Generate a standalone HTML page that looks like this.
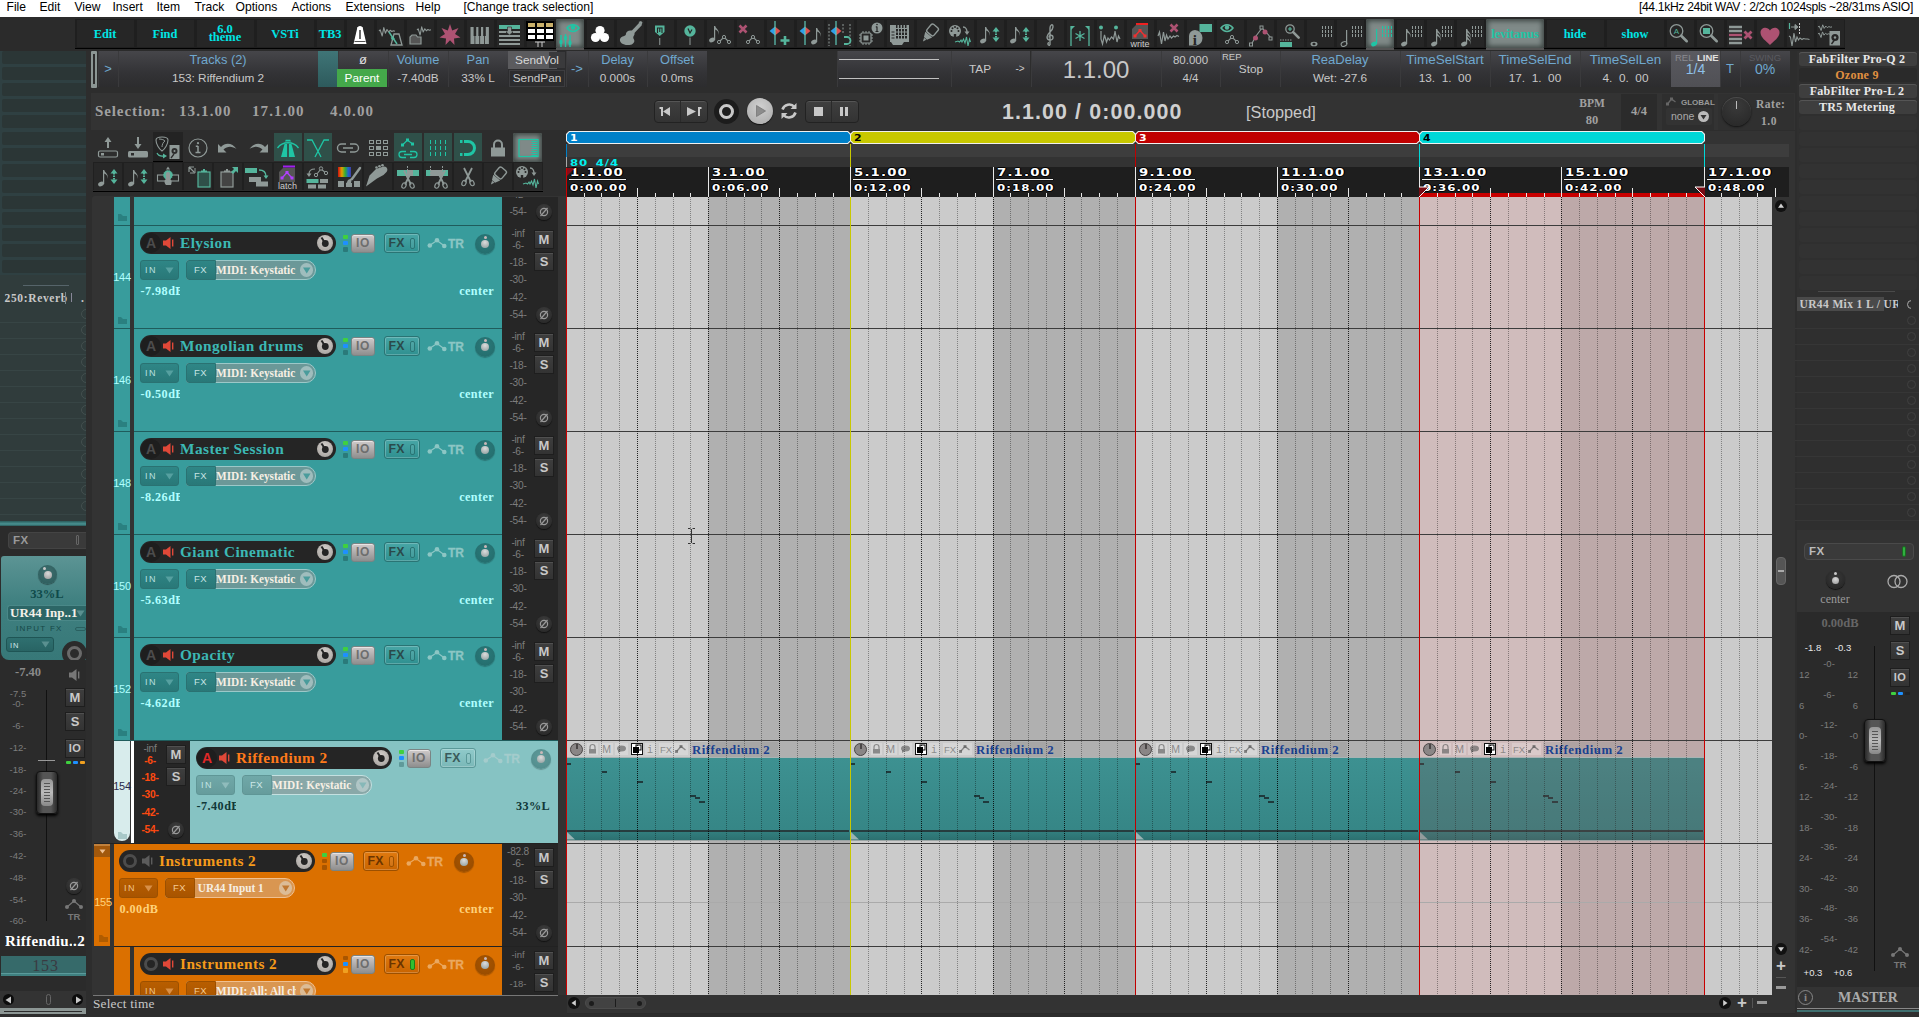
<!DOCTYPE html>
<html lang="en"><head><meta charset="utf-8"><title>REAPER</title><style>
*{margin:0;padding:0;box-sizing:border-box}
html,body{width:1919px;height:1017px;overflow:hidden;background:#2d2d2d}
body{position:relative;font-family:"Liberation Sans",sans-serif}
div,svg{position:absolute}
svg{overflow:visible}
</style></head><body>
<div style="left:0px;top:0px;width:1919px;height:16.6px;background:#ffffff;"></div>
<div style="left:0px;top:16.6px;width:1919px;height:0.8px;background:#c4c4c4;"></div>
<div style="left:6.5px;top:-0.2px;font:normal 12.1px/14px 'Liberation Sans',sans-serif;color:#000;white-space:nowrap;">File</div>
<div style="left:39.5px;top:-0.2px;font:normal 12.1px/14px 'Liberation Sans',sans-serif;color:#000;white-space:nowrap;">Edit</div>
<div style="left:74.5px;top:-0.2px;font:normal 12.1px/14px 'Liberation Sans',sans-serif;color:#000;white-space:nowrap;">View</div>
<div style="left:112.5px;top:-0.2px;font:normal 12.1px/14px 'Liberation Sans',sans-serif;color:#000;white-space:nowrap;">Insert</div>
<div style="left:156.5px;top:-0.2px;font:normal 12.1px/14px 'Liberation Sans',sans-serif;color:#000;white-space:nowrap;">Item</div>
<div style="left:194.5px;top:-0.2px;font:normal 12.1px/14px 'Liberation Sans',sans-serif;color:#000;white-space:nowrap;">Track</div>
<div style="left:235.5px;top:-0.2px;font:normal 12.1px/14px 'Liberation Sans',sans-serif;color:#000;white-space:nowrap;">Options</div>
<div style="left:291.5px;top:-0.2px;font:normal 12.1px/14px 'Liberation Sans',sans-serif;color:#000;white-space:nowrap;">Actions</div>
<div style="left:345.5px;top:-0.2px;font:normal 12.1px/14px 'Liberation Sans',sans-serif;color:#000;white-space:nowrap;">Extensions</div>
<div style="left:415.5px;top:-0.2px;font:normal 12.1px/14px 'Liberation Sans',sans-serif;color:#000;white-space:nowrap;">Help</div>
<div style="left:463.5px;top:-0.2px;font:normal 12.1px/14px 'Liberation Sans',sans-serif;color:#000;white-space:nowrap;">[Change track selection]</div>
<div style="left:400px;top:-0.2px;font:normal 12.1px/14px 'Liberation Sans',sans-serif;color:#000;white-space:nowrap;width:1513px;text-align:right;letter-spacing:-.32px;">[44.1kHz 24bit WAV : 2/2ch 1024spls ~28/31ms ASIO]</div>
<div style="left:0px;top:17.4px;width:1919px;height:33.6px;background:#2b2b2b;"></div>
<div style="left:75px;top:19px;width:1770px;height:29px;background:#1f1f1f;"></div>
<div style="left:75px;top:48px;width:1770px;height:1.3px;background:#000;"></div>
<div style="left:77px;top:20px;width:57px;height:27px;background:#262626;"></div>
<div style="left:75px;top:26px;font:bold 12.4px/16px 'Liberation Serif',serif;color:#00e5e5;white-space:nowrap;width:60px;text-align:center;">Edit</div>
<div style="left:137px;top:20px;width:57px;height:27px;background:#262626;"></div>
<div style="left:135px;top:26px;font:bold 12.4px/16px 'Liberation Serif',serif;color:#00e5e5;white-space:nowrap;width:60px;text-align:center;">Find</div>
<div style="left:197px;top:20px;width:57px;height:27px;background:#262626;"></div>
<div style="left:195px;top:25px;font:bold 12.5px/8px 'Liberation Serif',serif;color:#00e5e5;white-space:nowrap;width:60px;text-align:center;">6.0<br>theme</div>
<div style="left:257px;top:20px;width:57px;height:27px;background:#262626;"></div>
<div style="left:255px;top:26px;font:bold 12.4px/16px 'Liberation Serif',serif;color:#00e5e5;white-space:nowrap;width:60px;text-align:center;">VSTi</div>
<div style="left:317px;top:20px;width:27px;height:27px;background:#262626;"></div>
<div style="left:315px;top:26px;font:bold 12.4px/16px 'Liberation Serif',serif;color:#00e5e5;white-space:nowrap;width:30px;text-align:center;">TB3</div>
<div style="left:347px;top:20px;width:27px;height:27px;background:#262626;"></div>
<svg style="left:345px;top:19px" width="30" height="29" viewBox="0 0 30 29"><path d="M12.500 8h5l4 17h-13z" fill="#ffffff"/><circle cx="15" cy="9.500" r="2.600" fill="#ffffff"/><path d="M15 11v9" stroke="#262626" stroke-width="1.400"/><path d="M9.500 22.500h11" stroke="#262626" stroke-width="0.800"/></svg>
<div style="left:377px;top:20px;width:27px;height:27px;background:#262626;"></div>
<svg style="left:375px;top:19px" width="30" height="29" viewBox="0 0 30 29"><path d="M4.0 12.0 L5.2 10.8 L7.2 17.0 L8.8 8.6 L10.4 14.2 L12.0 10.5 L13.6 13.0 L15.2 11.3 L16.8 12.5 L18.4 11.7 L20.0 12.2" fill="none" stroke="#8f9997" stroke-width="1.1" stroke-linejoin="round"/><path d="M19 15h5l3 11h-11z" fill="none" stroke="#8f9997" stroke-width="1.300"/><path d="M14 13l8 12" stroke="#55b59c" stroke-width="1.500"/><rect x="16" y="18" width="3" height="3" fill="#55b59c" transform="rotate(-30 17 19)"/></svg>
<div style="left:407px;top:20px;width:27px;height:27px;background:#262626;"></div>
<svg style="left:405px;top:19px" width="30" height="29" viewBox="0 0 30 29"><path d="M12.0 11.0 L13.2 9.8 L15.1 16.0 L16.7 7.8 L18.2 13.0 L19.8 9.7 L21.3 11.8 L22.9 10.5 L24.4 11.3 L26.0 10.8" fill="none" stroke="#8f9997" stroke-width="1.1" stroke-linejoin="round"/><path d="M5 25v-7l2-2h4l1.500 2h3.500v7z" fill="#555" stroke="#8f9997" stroke-width="1.200"/></svg>
<div style="left:437px;top:20px;width:27px;height:27px;background:#262626;"></div>
<svg style="left:435px;top:19px" width="30" height="29" viewBox="0 0 30 29"><path d="M15 5l2.200 6.500l6.300-2.500l-3.500 6l5.500 3.500l-6.500 1l0.500 6.500l-4.500-4.800l-4.500 4.800l0.500-6.500l-6.500-1l5.500-3.500l-3.500-6l6.300 2.500z" fill="#ad5272"/></svg>
<div style="left:467px;top:20px;width:27px;height:27px;background:#262626;"></div>
<svg style="left:465px;top:19px" width="30" height="29" viewBox="0 0 30 29"><rect x="5.5" y="8" width="4" height="17" fill="#8f9997"/><rect x="10.3" y="8" width="4" height="17" fill="#8f9997"/><rect x="15.1" y="8" width="4" height="17" fill="#8f9997"/><rect x="19.9" y="8" width="4" height="17" fill="#8f9997"/><rect x="8.6" y="7" width="2.600" height="10" fill="#262626"/><rect x="13.399999999999999" y="7" width="2.600" height="10" fill="#262626"/><rect x="18.2" y="7" width="2.600" height="10" fill="#262626"/></svg>
<div style="left:497px;top:20px;width:27px;height:27px;background:#262626;"></div>
<svg style="left:495px;top:19px" width="30" height="29" viewBox="0 0 30 29"><rect x="4" y="6" width="21" height="4" fill="#55b59c"/><path d="M12.500 8h4v4h2.500l-4.500 4l-4.500-4h2.500z" fill="#8f9997" stroke="#262626" stroke-width="0.600"/><path d="M4 13h7M18 13h7M4 17h21M4 21h21M4 25h21" stroke="#8f9997" stroke-width="2"/></svg>
<div style="left:527px;top:20px;width:27px;height:27px;background:#262626;"></div>
<svg style="left:525px;top:19px" width="30" height="29" viewBox="0 0 30 29"><rect x="1" y="2" width="28" height="20" fill="#000"/><rect x="3" y="4" width="7" height="4" fill="#c9b06a"/><rect x="3" y="10" width="7" height="4" fill="#fff"/><rect x="3" y="16" width="7" height="4" fill="#fff"/><rect x="12" y="4" width="7" height="4" fill="#c9b06a"/><rect x="12" y="10" width="7" height="4" fill="#fff"/><rect x="12" y="16" width="7" height="4" fill="#fff"/><rect x="21" y="4" width="7" height="4" fill="#c9b06a"/><rect x="21" y="10" width="7" height="4" fill="#fff"/><rect x="21" y="16" width="7" height="4" fill="#fff"/><path d="M10 23h10M13 23v5M17 23v5" stroke="#ccc" stroke-width="1"/></svg>
<div style="left:556px;top:19px;width:28px;height:29px;background:#7f8a88;box-shadow:inset 0 0 5px 2px #3d4543;border-radius:2px;"></div>
<div style="left:556px;top:48px;width:28px;height:1.5px;background:#555;"></div>
<svg style="left:555px;top:19px" width="30" height="29" viewBox="0 0 30 29"><path d="M12 9c3-4.500 9-4.500 12 0c-3 4.500-9 4.500-12 0z" fill="none" stroke="#1fc5a5" stroke-width="1.500"/><circle cx="18" cy="8.500" r="2.200" fill="#1fc5a5"/><path d="M6 16v12M10.500 15v13M15 16v12" stroke="#1fc5a5" stroke-width="1.400"/><rect x="4.500" y="21" width="3" height="4" rx="1" fill="#1fc5a5"/><rect x="9" y="17" width="3" height="4" rx="1" fill="#1fc5a5"/><rect x="13.500" y="22" width="3" height="4" rx="1" fill="#1fc5a5"/></svg>
<div style="left:587px;top:20px;width:27px;height:27px;background:#262626;"></div>
<svg style="left:585px;top:19px" width="30" height="29" viewBox="0 0 30 29"><circle cx="15" cy="11.500" r="4.600" fill="#ffffff"/><circle cx="10.500" cy="18.500" r="4.600" fill="#ffffff"/><circle cx="19.500" cy="18.500" r="4.600" fill="#ffffff"/><circle cx="15" cy="16" r="3" fill="#ffffff"/></svg>
<div style="left:617px;top:20px;width:27px;height:27px;background:#262626;"></div>
<svg style="left:615px;top:19px" width="30" height="29" viewBox="0 0 30 29"><path d="M24.500 3.500l2.500 2.500l-9 9.500l-2.500-2.500z" fill="#8f9997"/><path d="M23.500 3l2.500-1l1.500 1.500l-1 2.500z" fill="#8f9997"/><path d="M16.500 11.500c2.500 0.500 4 3 2.500 5c-1 1.300-1 2.500 0 4c1.200 2.500-1 5.300-4.500 5.500c-3.500 0.300-7.500-0.500-9-3c-1.500-2.800 0.300-5.300 3-5.800c1.800-0.400 2.500-1.200 2.500-2.700c0.200-2 2.500-3.500 5.500-3z" fill="#8f9997"/></svg>
<div style="left:647px;top:20px;width:27px;height:27px;background:#262626;"></div>
<svg style="left:645px;top:19px" width="30" height="29" viewBox="0 0 30 29"><path d="M10 6.500h9.500v6.500l-4.750 4l-4.750-4z" fill="#55b59c"/><path d="M14.750 19v7" stroke="#8f9997" stroke-width="1"/><path d="M12.500 14v-5h4.500v5M14.750 9v4" stroke="#262626" stroke-width="1.100" fill="none"/></svg>
<div style="left:677px;top:20px;width:27px;height:27px;background:#262626;"></div>
<svg style="left:675px;top:19px" width="30" height="29" viewBox="0 0 30 29"><circle cx="15" cy="12" r="5.700" fill="#55b59c"/><path d="M15 18.500v7.500" stroke="#8f9997" stroke-width="1"/><path d="M13 9.500l2 4.500l2-3.500" stroke="#262626" stroke-width="1.200" fill="none"/></svg>
<div style="left:707px;top:20px;width:27px;height:27px;background:#262626;"></div>
<svg style="left:705px;top:19px" width="30" height="29" viewBox="0 0 30 29"><ellipse cx="7" cy="21" rx="3" ry="2.200" transform="rotate(-25 7 21)" fill="#8f9997" stroke="#8f9997" stroke-width="0"/><rect x="9" y="7" width="1.200" height="14" fill="#8f9997"/><path d="M10 7.0c1 3 5 4 3.500 9c0.500-4-2-5-3.500-5.500z" fill="#8f9997"/><path d="M14 23L19 18L24 23" fill="none" stroke="#8f9997" stroke-width="1.100"/><circle cx="14" cy="23" r="1.6" fill="#262626" stroke="#8f9997"/><circle cx="19" cy="18" r="1.6" fill="#262626" stroke="#8f9997"/><circle cx="24" cy="23" r="1.6" fill="#262626" stroke="#8f9997"/></svg>
<div style="left:737px;top:20px;width:27px;height:27px;background:#262626;"></div>
<svg style="left:735px;top:19px" width="30" height="29" viewBox="0 0 30 29"><path d="M4.5 6.5L11.5 13.5M11.5 6.5L4.5 13.5" stroke="#ad5272" stroke-width="2.6"/><path d="M13 23L18 18L23 23" fill="none" stroke="#8f9997" stroke-width="1.100"/><circle cx="13" cy="23" r="1.6" fill="#262626" stroke="#8f9997"/><circle cx="18" cy="18" r="1.6" fill="#262626" stroke="#8f9997"/><circle cx="23" cy="23" r="1.6" fill="#262626" stroke="#8f9997"/></svg>
<div style="left:767px;top:20px;width:27px;height:27px;background:#262626;"></div>
<svg style="left:765px;top:19px" width="30" height="29" viewBox="0 0 30 29"><path d="M10 7.5L4.5 12L10 16.5z" fill="#2f9fe8"/><path d="M10 7.5L15.5 12L10 16.5z" fill="#e05050"/><path d="M10 2v24" stroke="#5fc9b9" stroke-width="1.200"/><path d="M20 17v9M15.500 21.500h9" stroke="#55b59c" stroke-width="2.600"/></svg>
<div style="left:797px;top:20px;width:27px;height:27px;background:#262626;"></div>
<svg style="left:795px;top:19px" width="30" height="29" viewBox="0 0 30 29"><path d="M10 7.5L4.5 12L10 16.5z" fill="#2f9fe8"/><path d="M10 7.5L15.5 12L10 16.5z" fill="#e05050"/><path d="M10 2v24" stroke="#5fc9b9" stroke-width="1.200"/><ellipse cx="19" cy="23" rx="3" ry="2.200" transform="rotate(-25 19 23)" fill="#8f9997" stroke="#8f9997" stroke-width="0"/><rect x="21" y="9" width="1.200" height="14" fill="#8f9997"/><path d="M22 9.0c1 3 5 4 3.500 9c0.500-4-2-5-3.500-5.500z" fill="#8f9997"/></svg>
<div style="left:827px;top:20px;width:27px;height:27px;background:#262626;"></div>
<svg style="left:825px;top:19px" width="30" height="29" viewBox="0 0 30 29"><path d="M11 7.5L5.5 12L11 16.5z" fill="#2f9fe8"/><path d="M11 7.5L16.5 12L11 16.5z" fill="#e05050"/><path d="M11 2v24" stroke="#5fc9b9" stroke-width="1.200"/><path d="M4 5v22M18 5v10M25 5v22" stroke="#8f9997" stroke-width="1" stroke-dasharray="2 1.500"/><path d="M19 18h3a3 3 0 0 1 0 7h-3" fill="none" stroke="#55b59c" stroke-width="1.800"/></svg>
<div style="left:857px;top:20px;width:27px;height:27px;background:#262626;"></div>
<svg style="left:855px;top:19px" width="30" height="29" viewBox="0 0 30 29"><rect x="6" y="14" width="10" height="10" rx="1" fill="none" stroke="#8f9997" stroke-width="1.200"/><rect x="8.500" y="16.500" width="5" height="5" fill="#8f9997"/><path d="M8 12v2M11 12v2M14 12v2M8 24v2M11 24v2M14 24v2M4 16h2M4 19h2M4 22h2M16 16h2M16 19h2M16 22h2" stroke="#8f9997" stroke-width="1"/><circle cx="22" cy="9" r="5.500" fill="#8f9997"/><path d="M22 7.500v5M20.500 12.500h3M20.800 7.800h1.200" stroke="#262626" stroke-width="1.200"/><circle cx="22" cy="5.500" r="0.800" fill="#262626"/></svg>
<div style="left:887px;top:20px;width:27px;height:27px;background:#262626;"></div>
<svg style="left:885px;top:19px" width="30" height="29" viewBox="0 0 30 29"><path d="M5 6h19v17h-5l-2 3h-9l-2-3h-1z" fill="#8f9997"/><rect x="11" y="10.0" width="2" height="2.500" fill="#262626"/><rect x="11" y="13.5" width="2" height="2.500" fill="#262626"/><rect x="11" y="17.0" width="2" height="2.500" fill="#262626"/><rect x="14" y="10.0" width="2" height="2.500" fill="#262626"/><rect x="14" y="13.5" width="2" height="2.500" fill="#262626"/><rect x="14" y="17.0" width="2" height="2.500" fill="#262626"/><rect x="17" y="10.0" width="2" height="2.500" fill="#262626"/><rect x="17" y="13.5" width="2" height="2.500" fill="#262626"/><rect x="17" y="17.0" width="2" height="2.500" fill="#262626"/><rect x="20" y="10.0" width="2" height="2.500" fill="#262626"/><rect x="20" y="13.5" width="2" height="2.500" fill="#262626"/><rect x="20" y="17.0" width="2" height="2.500" fill="#262626"/><path d="M6.500 13h3M6.500 16h3M6.500 19h3" stroke="#262626" stroke-width="1"/><rect x="11" y="6" width="1.500" height="3" fill="#262626"/><rect x="14" y="6" width="1.500" height="3" fill="#262626"/><rect x="17" y="6" width="1.500" height="3" fill="#262626"/><rect x="20" y="6" width="1.500" height="3" fill="#262626"/></svg>
<div style="left:917px;top:20px;width:27px;height:27px;background:#262626;"></div>
<svg style="left:915px;top:19px" width="30" height="29" viewBox="0 0 30 29"><g transform="translate(15 14) rotate(40)"><rect x="-4.500" y="-9" width="9" height="10" rx="2" fill="none" stroke="#8f9997" stroke-width="1.400"/><path d="M-4.500 2h9l-2.500 5h-4zM-1.500 7.500h3l-1.500 3.500z" fill="#8f9997"/></g></svg>
<div style="left:947px;top:20px;width:27px;height:27px;background:#262626;"></div>
<svg style="left:945px;top:19px" width="30" height="29" viewBox="0 0 30 29"><circle cx="10" cy="12" r="6" fill="#8f9997"/><circle cx="6.5" cy="12" r="1" fill="#262626"/><circle cx="13.5" cy="12" r="1" fill="#262626"/><circle cx="7.5" cy="9.2" r="1" fill="#262626"/><circle cx="12.5" cy="9.2" r="1" fill="#262626"/><circle cx="10" cy="8" r="1" fill="#262626"/><rect x="8.8" y="15" width="2.400" height="3.500" fill="#262626"/><path d="M18 8c3 0 4 3 4 5" fill="none" stroke="#8f9997" stroke-width="1.400"/><path d="M19.500 12.500h5l-2.500 3.500z" fill="#8f9997"/><path d="M10 23l3-1l1.500 1l1.500-2l1 2l1.500-3l1.500 4l1.500-6l1.500 9l1.500-7l1 3" fill="none" stroke="#55b59c" stroke-width="1.100"/></svg>
<div style="left:977px;top:20px;width:27px;height:27px;background:#262626;"></div>
<svg style="left:975px;top:19px" width="30" height="29" viewBox="0 0 30 29"><ellipse cx="8" cy="22" rx="3" ry="2.200" transform="rotate(-25 8 22)" fill="#8f9997" stroke="#8f9997" stroke-width="0"/><rect x="10" y="8" width="1.200" height="14" fill="#8f9997"/><path d="M11 8.0c1 3 5 4 3.500 9c0.500-4-2-5-3.500-5.500z" fill="#8f9997"/><path d="M21 8l3.500 4.500h-7z" fill="#55b59c"/><path d="M21 23l3.500-4.500h-7z" fill="#55b59c"/><rect x="20" y="12" width="2" height="1.500" fill="#55b59c"/><rect x="20" y="14.5" width="2" height="1.500" fill="#55b59c"/><rect x="20" y="17" width="2" height="1.500" fill="#55b59c"/></svg>
<div style="left:1007px;top:20px;width:27px;height:27px;background:#262626;"></div>
<svg style="left:1005px;top:19px" width="30" height="29" viewBox="0 0 30 29"><ellipse cx="8" cy="22" rx="3" ry="2.200" transform="rotate(-25 8 22)" fill="#8f9997" stroke="#8f9997" stroke-width="0"/><rect x="10" y="8" width="1.200" height="14" fill="#8f9997"/><path d="M11 8.0c1 3 5 4 3.500 9c0.500-4-2-5-3.500-5.500z" fill="#8f9997"/><path d="M21 8l3.500 4.500h-7z" fill="#55b59c"/><path d="M21 23l3.500-4.500h-7z" fill="#55b59c"/><rect x="20" y="12" width="2" height="1.500" fill="#55b59c"/><rect x="20" y="14.5" width="2" height="1.500" fill="#55b59c"/><rect x="20" y="17" width="2" height="1.500" fill="#55b59c"/></svg>
<div style="left:1037px;top:20px;width:27px;height:27px;background:#262626;"></div>
<svg style="left:1035px;top:19px" width="30" height="29" viewBox="0 0 30 29"><path d="M15 26c-2 1-3-2-1-2.500M15 26v-17c0-3 3-5 3-1c0 4-6 6-6 10c0 4 6 4 6 0.500c0-3-4-3-4 0" fill="none" stroke="#8f9997" stroke-width="1.400"/></svg>
<div style="left:1067px;top:20px;width:27px;height:27px;background:#262626;"></div>
<svg style="left:1065px;top:19px" width="30" height="29" viewBox="0 0 30 29"><path d="M6 7v20M24 7v20" stroke="#55b59c" stroke-width="1.300"/><path d="M6 7h4l-4 4zM24 7h-4l4 4z" fill="#55b59c"/><path d="M15 12v10M10.500 14.500l9 5M10.500 19.500l9-5" stroke="#55b59c" stroke-width="1.300"/></svg>
<div style="left:1097px;top:20px;width:27px;height:27px;background:#262626;"></div>
<svg style="left:1095px;top:19px" width="30" height="29" viewBox="0 0 30 29"><circle cx="6" cy="8.500" r="2" fill="#55b59c"/><circle cx="21" cy="8.500" r="2" fill="#55b59c"/><path d="M6 12v8l1.500 5l2-9l2 7l1.500-4l1.500 2l2-3l2 2l1.500-7v-1l2 11l1.500-6l1.500 3" fill="none" stroke="#8f9997" stroke-width="1.200"/></svg>
<div style="left:1127px;top:20px;width:27px;height:27px;background:#262626;"></div>
<svg style="left:1125px;top:19px" width="30" height="29" viewBox="0 0 30 29"><path d="M7 10l4-4h12v14h-16z" fill="#555"/><rect x="11" y="4" width="12" height="2" fill="#f02020"/><path d="M10 17l5-5.500l5 5.500" fill="none" stroke="#f03030" stroke-width="1.300"/><rect x="8.500" y="15.500" width="3" height="3" fill="#f03030"/><rect x="13.500" y="10" width="3" height="3" fill="#f03030"/><rect x="18.500" y="15.500" width="3" height="3" fill="#f03030"/><text x="15" y="28" font-family="Liberation Sans,sans-serif" font-size="9" fill="#ccc" text-anchor="middle">write</text></svg>
<div style="left:1157px;top:20px;width:27px;height:27px;background:#262626;"></div>
<svg style="left:1155px;top:19px" width="30" height="29" viewBox="0 0 30 29"><path d="M3 17l1.500-4l2 12l2-12l1.500 9l1.500-6l1.500 4l2-3l1.500 2l2-2l1.500 1l2-1.500l2 1" fill="none" stroke="#8f9997" stroke-width="1.200"/><path d="M15.5 5.5L22.5 12.5M22.5 5.5L15.5 12.5" stroke="#ad5272" stroke-width="2.6"/></svg>
<div style="left:1187px;top:20px;width:27px;height:27px;background:#262626;"></div>
<svg style="left:1185px;top:19px" width="30" height="29" viewBox="0 0 30 29"><rect x="14.500" y="5" width="12.500" height="8" fill="#55b59c"/><path d="M4 26.500v-9.500a6 6 0 0 1 6-6a8 8 0 0 1 7.500 8a8 8 0 0 1-6 7.500z" fill="#8f9997"/><text x="9.800" y="25.500" font-family="Liberation Serif,serif" font-weight="bold" font-size="15" fill="#262626" text-anchor="middle">i</text></svg>
<div style="left:1217px;top:20px;width:27px;height:27px;background:#262626;"></div>
<svg style="left:1215px;top:19px" width="30" height="29" viewBox="0 0 30 29"><path d="M6 9c3-4.500 9-4.500 12 0c-3 4.500-9 4.500-12 0z" fill="none" stroke="#55b59c" stroke-width="1.500"/><circle cx="12" cy="8.500" r="2.200" fill="#55b59c"/><path d="M12 23L17 18L22 23" fill="none" stroke="#8f9997" stroke-width="1.100"/><circle cx="12" cy="23" r="1.6" fill="#262626" stroke="#8f9997"/><circle cx="17" cy="18" r="1.6" fill="#262626" stroke="#8f9997"/><circle cx="22" cy="23" r="1.6" fill="#262626" stroke="#8f9997"/></svg>
<div style="left:1247px;top:20px;width:27px;height:27px;background:#262626;"></div>
<svg style="left:1245px;top:19px" width="30" height="29" viewBox="0 0 30 29"><path d="M6 26l5-9l6-8l4 4l5 6" fill="none" stroke="#8f9997" stroke-width="1.100"/><rect x="4.500" y="24" width="3" height="3" fill="#262626" stroke="#8f9997"/><rect x="15" y="7" width="3" height="3" fill="#262626" stroke="#8f9997"/><rect x="24" y="18" width="3" height="3" fill="#262626" stroke="#8f9997"/><circle cx="10.500" cy="19" r="2.500" fill="#ad5272"/><circle cx="20" cy="13" r="2.500" fill="#ad5272"/></svg>
<div style="left:1277px;top:20px;width:27px;height:27px;background:#262626;"></div>
<svg style="left:1275px;top:19px" width="30" height="29" viewBox="0 0 30 29"><circle cx="15" cy="10" r="4.2" fill="none" stroke="#8f9997" stroke-width="1.300"/><path d="M18.15 13.15l5.500 5.500" stroke="#8f9997" stroke-width="2.600" stroke-linecap="round"/><path d="M13 10h4M15 8v4" stroke="#55b59c" stroke-width="1.200"/><rect x="5" y="23" width="12" height="5" fill="#55b59c"/><path d="M5 21h12" stroke="#8f9997" stroke-width="1" stroke-dasharray="1.500 1"/></svg>
<div style="left:1307px;top:20px;width:27px;height:27px;background:#262626;"></div>
<svg style="left:1305px;top:19px" width="30" height="29" viewBox="0 0 30 29"><ellipse cx="9" cy="25" rx="3.500" ry="2.300" fill="#8f9997"/><ellipse cx="9" cy="25" rx="1.600" ry="1.300" fill="#262626"/><path d="M17.5 7v11" stroke="#8f9997" stroke-width="1" stroke-dasharray="3 1" fill="none"/><path d="M20.5 7v11" stroke="#8f9997" stroke-width="1" stroke-dasharray="3 1" fill="none"/><path d="M23.5 7v11" stroke="#8f9997" stroke-width="1" stroke-dasharray="3 1" fill="none"/><path d="M26.5 7v11" stroke="#8f9997" stroke-width="1" stroke-dasharray="3 1" fill="none"/></svg>
<div style="left:1337px;top:20px;width:27px;height:27px;background:#262626;"></div>
<svg style="left:1335px;top:19px" width="30" height="29" viewBox="0 0 30 29"><ellipse cx="9" cy="25" rx="3" ry="2.200" transform="rotate(-25 9 25)" fill="none" stroke="#8f9997" stroke-width="1"/><rect x="11" y="11" width="1.200" height="14" fill="#8f9997"/><path d="M17.5 7v11" stroke="#8f9997" stroke-width="1" stroke-dasharray="3 1" fill="none"/><path d="M20.5 7v11" stroke="#8f9997" stroke-width="1" stroke-dasharray="3 1" fill="none"/><path d="M23.5 7v11" stroke="#8f9997" stroke-width="1" stroke-dasharray="3 1" fill="none"/><path d="M26.5 7v11" stroke="#8f9997" stroke-width="1" stroke-dasharray="3 1" fill="none"/></svg>
<div style="left:1366px;top:19px;width:28px;height:29px;background:#7f8a88;box-shadow:inset 0 0 5px 2px #3d4543;border-radius:2px;"></div>
<div style="left:1366px;top:48px;width:28px;height:1.5px;background:#555;"></div>
<svg style="left:1365px;top:19px" width="30" height="29" viewBox="0 0 30 29"><ellipse cx="9" cy="25" rx="3" ry="2.200" transform="rotate(-25 9 25)" fill="#1fc5a5" stroke="#1fc5a5" stroke-width="0"/><rect x="11" y="10" width="1.200" height="15" fill="#1fc5a5"/><path d="M17.5 7v11" stroke="#1fc5a5" stroke-width="1" stroke-dasharray="3 1" fill="none"/><path d="M20.5 7v11" stroke="#1fc5a5" stroke-width="1" stroke-dasharray="3 1" fill="none"/><path d="M23.5 7v11" stroke="#1fc5a5" stroke-width="1" stroke-dasharray="3 1" fill="none"/><path d="M26.5 7v11" stroke="#1fc5a5" stroke-width="1" stroke-dasharray="3 1" fill="none"/></svg>
<div style="left:1397px;top:20px;width:27px;height:27px;background:#262626;"></div>
<svg style="left:1395px;top:19px" width="30" height="29" viewBox="0 0 30 29"><ellipse cx="9" cy="25" rx="3" ry="2.200" transform="rotate(-25 9 25)" fill="#8f9997" stroke="#8f9997" stroke-width="0"/><rect x="11" y="10" width="1.200" height="15" fill="#8f9997"/><path d="M12 10.0c1 3 5 4 3.500 9c0.500-4-2-5-3.500-5.500z" fill="#8f9997"/><path d="M17.5 7v11" stroke="#8f9997" stroke-width="1" stroke-dasharray="3 1" fill="none"/><path d="M20.5 7v11" stroke="#8f9997" stroke-width="1" stroke-dasharray="3 1" fill="none"/><path d="M23.5 7v11" stroke="#8f9997" stroke-width="1" stroke-dasharray="3 1" fill="none"/><path d="M26.5 7v11" stroke="#8f9997" stroke-width="1" stroke-dasharray="3 1" fill="none"/></svg>
<div style="left:1427px;top:20px;width:27px;height:27px;background:#262626;"></div>
<svg style="left:1425px;top:19px" width="30" height="29" viewBox="0 0 30 29"><ellipse cx="9" cy="25" rx="3" ry="2.200" transform="rotate(-25 9 25)" fill="#8f9997" stroke="#8f9997" stroke-width="0"/><rect x="11" y="10" width="1.200" height="15" fill="#8f9997"/><path d="M12 10.0c1 3 5 4 3.500 9c0.500-4-2-5-3.500-5.500z" fill="#8f9997"/><path d="M12 13.5c1 3 5 4 3.500 9c0.500-4-2-5-3.500-5.500z" fill="#8f9997"/><path d="M17.5 7v11" stroke="#8f9997" stroke-width="1" stroke-dasharray="3 1" fill="none"/><path d="M20.5 7v11" stroke="#8f9997" stroke-width="1" stroke-dasharray="3 1" fill="none"/><path d="M23.5 7v11" stroke="#8f9997" stroke-width="1" stroke-dasharray="3 1" fill="none"/><path d="M26.5 7v11" stroke="#8f9997" stroke-width="1" stroke-dasharray="3 1" fill="none"/></svg>
<div style="left:1457px;top:20px;width:27px;height:27px;background:#262626;"></div>
<svg style="left:1455px;top:19px" width="30" height="29" viewBox="0 0 30 29"><ellipse cx="9" cy="25" rx="3" ry="2.200" transform="rotate(-25 9 25)" fill="#8f9997" stroke="#8f9997" stroke-width="0"/><rect x="11" y="10" width="1.200" height="15" fill="#8f9997"/><path d="M12 10.0c1 3 5 4 3.500 9c0.500-4-2-5-3.500-5.500z" fill="#8f9997"/><path d="M12 13.5c1 3 5 4 3.500 9c0.500-4-2-5-3.500-5.500z" fill="#8f9997"/><path d="M12 17.0c1 3 5 4 3.500 9c0.500-4-2-5-3.500-5.500z" fill="#8f9997"/><path d="M17.5 7v11" stroke="#8f9997" stroke-width="1" stroke-dasharray="3 1" fill="none"/><path d="M20.5 7v11" stroke="#8f9997" stroke-width="1" stroke-dasharray="3 1" fill="none"/><path d="M23.5 7v11" stroke="#8f9997" stroke-width="1" stroke-dasharray="3 1" fill="none"/><path d="M26.5 7v11" stroke="#8f9997" stroke-width="1" stroke-dasharray="3 1" fill="none"/></svg>
<div style="left:1486px;top:19px;width:58px;height:29px;background:#7f8a88;box-shadow:inset 0 0 5px 2px #3d4543;border-radius:2px;"></div>
<div style="left:1486px;top:48px;width:58px;height:1.5px;background:#555;"></div>
<div style="left:1485px;top:26px;font:bold 12.4px/16px 'Liberation Serif',serif;color:#1fc5a5;white-space:nowrap;width:60px;text-align:center;">levitanus</div>
<div style="left:1547px;top:20px;width:57px;height:27px;background:#262626;"></div>
<div style="left:1545px;top:26px;font:bold 12.4px/16px 'Liberation Serif',serif;color:#00e5e5;white-space:nowrap;width:60px;text-align:center;">hide</div>
<div style="left:1607px;top:20px;width:57px;height:27px;background:#262626;"></div>
<div style="left:1605px;top:26px;font:bold 12.4px/16px 'Liberation Serif',serif;color:#00e5e5;white-space:nowrap;width:60px;text-align:center;">show</div>
<div style="left:1667px;top:20px;width:27px;height:27px;background:#262626;"></div>
<svg style="left:1665px;top:19px" width="30" height="29" viewBox="0 0 30 29"><circle cx="11.5" cy="12" r="6.3" fill="none" stroke="#8f9997" stroke-width="1.300"/><path d="M16.225 16.725l5.500 5.500" stroke="#8f9997" stroke-width="2.600" stroke-linecap="round"/><text x="11.500" y="15" font-family="Liberation Sans,sans-serif" font-size="8" fill="#55b59c" text-anchor="middle">A</text></svg>
<div style="left:1697px;top:20px;width:27px;height:27px;background:#262626;"></div>
<svg style="left:1695px;top:19px" width="30" height="29" viewBox="0 0 30 29"><circle cx="11.5" cy="12" r="6.3" fill="none" stroke="#8f9997" stroke-width="1.300"/><path d="M16.225 16.725l5.500 5.500" stroke="#8f9997" stroke-width="2.600" stroke-linecap="round"/><rect x="8" y="9" width="7" height="6" fill="#55b59c"/></svg>
<div style="left:1727px;top:20px;width:27px;height:27px;background:#262626;"></div>
<svg style="left:1725px;top:19px" width="30" height="29" viewBox="0 0 30 29"><path d="M4 8h13M4 12h13M4 20h13M4 24h13" stroke="#8f9997" stroke-width="2.400"/><path d="M4 16h13" stroke="#ad5272" stroke-width="2.400"/><path d="M19.5 12.5L26.5 19.5M26.5 12.5L19.5 19.5" stroke="#ad5272" stroke-width="2.8"/></svg>
<div style="left:1757px;top:20px;width:27px;height:27px;background:#262626;"></div>
<svg style="left:1755px;top:19px" width="30" height="29" viewBox="0 0 30 29"><path d="M15 26c-4-4-9.500-7.500-9.500-12.500c0-5.500 7-6.500 9.500-2c2.500-4.500 9.500-3.500 9.500 2c0 5-5.500 8.500-9.500 12.500z" fill="#ad5272"/></svg>
<div style="left:1787px;top:20px;width:27px;height:27px;background:#262626;"></div>
<svg style="left:1785px;top:19px" width="30" height="29" viewBox="0 0 30 29"><path d="M4.500 4v6" stroke="#55b59c" stroke-width="1.200"/><path d="M14.500 4v12" stroke="#ccc" stroke-width="1" stroke-dasharray="2 1"/><path d="M6 8h6M10 5.500l3 2.500l-3 2.500z" stroke="#8f9997" fill="#8f9997" stroke-width="1"/><path d="M4 17l1.500 1l1.500 9l2-13l1.500 9l1.500-5l1.500 3l1.500-2l2 1.500l1.500-1l2 0.500l2 0l2 0.500" fill="none" stroke="#8f9997" stroke-width="1.100"/></svg>
<div style="left:1817px;top:20px;width:27px;height:27px;background:#262626;"></div>
<svg style="left:1815px;top:19px" width="30" height="29" viewBox="0 0 30 29"><path d="M3.0 8.0 L4.2 7.1 L6.1 11.5 L7.7 5.8 L9.2 9.4 L10.8 7.1 L12.3 8.6 L13.9 7.6 L15.4 8.2 L17.0 7.9" fill="none" stroke="#8f9997" stroke-width="1" stroke-linejoin="round"/><path d="M3.0 15.0 L4.2 14.1 L6.0 18.5 L7.5 12.9 L9.0 16.2 L10.5 14.3 L12.0 15.4 L13.5 14.8 L15.0 15.1" fill="none" stroke="#8f9997" stroke-width="1" stroke-linejoin="round"/><rect x="14.500" y="12" width="10.500" height="14.500" fill="#8f9997"/><circle cx="20" cy="18.500" r="3.600" fill="#262626"/><circle cx="20" cy="18.500" r="1.200" fill="#8f9997"/><path d="M16.500 25l3-4" stroke="#262626" stroke-width="1.400"/></svg>
<div style="left:91px;top:51px;width:6px;height:37px;background:#8c9694;border-radius:1px;"></div>
<div style="left:93px;top:54px;width:1.5px;height:30px;background:#2d2d2d;"></div>
<div style="left:98px;top:51px;width:20px;height:36px;background:linear-gradient(#46464a,#333336 60%,#2c2c2e);border-left:1px solid #3a3a3c;"></div>
<div style="left:98px;top:61px;font:normal 13px/16px 'Liberation Sans',sans-serif;color:#6fa8cf;white-space:nowrap;width:20px;text-align:center;">&gt;</div>
<div style="left:118px;top:51px;width:200px;height:36px;background:linear-gradient(#46464a,#333336 60%,#2c2c2e);border-left:1px solid #3a3a3c;"></div>
<div style="left:118px;top:52px;font:normal 12.8px/16px 'Liberation Sans',sans-serif;color:#6fa8cf;white-space:nowrap;width:200px;text-align:center;">Tracks (2)</div>
<div style="left:118px;top:70px;font:normal 11.8px/16px 'Liberation Sans',sans-serif;color:#c8c8c8;white-space:nowrap;width:200px;text-align:center;">153: Riffendium 2</div>
<div style="left:318px;top:51px;width:20px;height:36px;background:linear-gradient(#3f7577,#2d5a5c);"></div>
<div style="left:338px;top:51px;width:50px;height:36px;background:linear-gradient(#46464a,#333336 60%,#2c2c2e);border-left:1px solid #3a3a3c;"></div>
<div style="left:338px;top:52px;font:normal 13px/16px 'Liberation Sans',sans-serif;color:#ddd;white-space:nowrap;width:50px;text-align:center;">ø</div>
<div style="left:337px;top:69px;width:50px;height:18px;background:#44a84a;"></div>
<div style="left:337px;top:70px;font:normal 11.8px/16px 'Liberation Sans',sans-serif;color:#fff;white-space:nowrap;width:50px;text-align:center;">Parent</div>
<div style="left:388px;top:51px;width:60px;height:36px;background:linear-gradient(#46464a,#333336 60%,#2c2c2e);border-left:1px solid #3a3a3c;"></div>
<div style="left:388px;top:52px;font:normal 12.8px/16px 'Liberation Sans',sans-serif;color:#6fa8cf;white-space:nowrap;width:60px;text-align:center;">Volume</div>
<div style="left:388px;top:70px;font:normal 11.8px/16px 'Liberation Sans',sans-serif;color:#c8c8c8;white-space:nowrap;width:60px;text-align:center;">-7.40dB</div>
<div style="left:448px;top:51px;width:60px;height:36px;background:linear-gradient(#46464a,#333336 60%,#2c2c2e);border-left:1px solid #3a3a3c;"></div>
<div style="left:448px;top:52px;font:normal 12.8px/16px 'Liberation Sans',sans-serif;color:#6fa8cf;white-space:nowrap;width:60px;text-align:center;">Pan</div>
<div style="left:448px;top:70px;font:normal 11.8px/16px 'Liberation Sans',sans-serif;color:#c8c8c8;white-space:nowrap;width:60px;text-align:center;">33% L</div>
<div style="left:508px;top:51px;width:58px;height:36px;background:#2c2c2e;"></div>
<div style="left:508px;top:51px;width:49px;height:18px;background:#5b5b5e;"></div>
<div style="left:549px;top:52px;width:16px;height:16px;background:#3a3a3c;"></div>
<div style="left:508px;top:52px;font:normal 11.8px/16px 'Liberation Sans',sans-serif;color:#d8d8d8;white-space:nowrap;width:58px;text-align:center;">SendVol</div>
<div style="left:509px;top:70px;width:56px;height:17px;background:#2c2c2e;border:1px solid #3d3d40;"></div>
<div style="left:508px;top:70px;font:normal 11.8px/16px 'Liberation Sans',sans-serif;color:#c8c8c8;white-space:nowrap;width:58px;text-align:center;">SendPan</div>
<div style="left:566px;top:51px;width:22px;height:36px;background:linear-gradient(#46464a,#333336 60%,#2c2c2e);border-left:1px solid #3a3a3c;"></div>
<div style="left:566px;top:61px;font:normal 13px/16px 'Liberation Sans',sans-serif;color:#6fa8cf;white-space:nowrap;width:22px;text-align:center;">-&gt;</div>
<div style="left:588px;top:51px;width:59px;height:36px;background:linear-gradient(#46464a,#333336 60%,#2c2c2e);border-left:1px solid #3a3a3c;"></div>
<div style="left:588px;top:52px;font:normal 12.8px/16px 'Liberation Sans',sans-serif;color:#6fa8cf;white-space:nowrap;width:59px;text-align:center;">Delay</div>
<div style="left:588px;top:70px;font:normal 11.8px/16px 'Liberation Sans',sans-serif;color:#c8c8c8;white-space:nowrap;width:59px;text-align:center;">0.000s</div>
<div style="left:647px;top:51px;width:60px;height:36px;background:linear-gradient(#46464a,#333336 60%,#2c2c2e);border-left:1px solid #3a3a3c;"></div>
<div style="left:647px;top:52px;font:normal 12.8px/16px 'Liberation Sans',sans-serif;color:#6fa8cf;white-space:nowrap;width:60px;text-align:center;">Offset</div>
<div style="left:647px;top:70px;font:normal 11.8px/16px 'Liberation Sans',sans-serif;color:#c8c8c8;white-space:nowrap;width:60px;text-align:center;">0.0ms</div>
<div style="left:837px;top:51px;width:114px;height:36px;background:linear-gradient(#46464a,#333336 60%,#2c2c2e);border-left:1px solid #3a3a3c;"></div>
<div style="left:839px;top:59px;width:100px;height:1px;background:#c0c0c0;"></div>
<div style="left:839px;top:78px;width:100px;height:1px;background:#c0c0c0;"></div>
<div style="left:951px;top:51px;width:79px;height:36px;background:linear-gradient(#46464a,#333336 60%,#2c2c2e);border-left:1px solid #3a3a3c;"></div>
<div style="left:951px;top:61px;font:normal 11.8px/16px 'Liberation Sans',sans-serif;color:#c8c8c8;white-space:nowrap;width:58px;text-align:center;">TAP</div>
<div style="left:1010px;top:62px;font:normal 10px/14px 'Liberation Sans',sans-serif;color:#c8c8c8;white-space:nowrap;width:20px;text-align:center;">-&gt;</div>
<div style="left:1031px;top:51px;width:130px;height:36px;background:linear-gradient(#46464a,#333336 60%,#2c2c2e);border-left:1px solid #3a3a3c;"></div>
<div style="left:1031px;top:57px;font:normal 24px/26px 'Liberation Sans',sans-serif;color:#c8c8c8;white-space:nowrap;width:130px;text-align:center;">1.1.00</div>
<div style="left:1161px;top:51px;width:59px;height:36px;background:linear-gradient(#46464a,#333336 60%,#2c2c2e);border-left:1px solid #3a3a3c;"></div>
<div style="left:1161px;top:53px;font:normal 11.5px/14px 'Liberation Sans',sans-serif;color:#c8c8c8;white-space:nowrap;width:59px;text-align:center;">80.000</div>
<div style="left:1161px;top:71px;font:normal 11.5px/14px 'Liberation Sans',sans-serif;color:#c8c8c8;white-space:nowrap;width:59px;text-align:center;">4/4</div>
<div style="left:1220px;top:51px;width:60px;height:36px;background:linear-gradient(#46464a,#333336 60%,#2c2c2e);border-left:1px solid #3a3a3c;"></div>
<div style="left:1222px;top:51px;font:normal 9.5px/12px 'Liberation Sans',sans-serif;color:#c8c8c8;white-space:nowrap;">REP</div>
<div style="left:1225px;top:61px;font:normal 11.8px/16px 'Liberation Sans',sans-serif;color:#c8c8c8;white-space:nowrap;width:52px;text-align:center;">Stop</div>
<div style="left:1280px;top:51px;width:120px;height:36px;background:linear-gradient(#46464a,#333336 60%,#2c2c2e);border-left:1px solid #3a3a3c;"></div>
<div style="left:1280px;top:52px;font:normal 13px/16px 'Liberation Sans',sans-serif;color:#6fa8cf;white-space:nowrap;width:120px;text-align:center;">ReaDelay</div>
<div style="left:1280px;top:70px;font:normal 11.8px/16px 'Liberation Sans',sans-serif;color:#c8c8c8;white-space:nowrap;width:120px;text-align:center;">Wet: -27.6</div>
<div style="left:1400px;top:51px;width:90px;height:36px;background:linear-gradient(#46464a,#333336 60%,#2c2c2e);border-left:1px solid #3a3a3c;"></div>
<div style="left:1400px;top:52px;font:normal 13.5px/16px 'Liberation Sans',sans-serif;color:#6fa8cf;white-space:nowrap;width:90px;text-align:center;">TimeSelStart</div>
<div style="left:1400px;top:70px;font:normal 11.8px/16px 'Liberation Sans',sans-serif;color:#c8c8c8;white-space:nowrap;width:90px;text-align:center;">13.&nbsp; 1.&nbsp; 00</div>
<div style="left:1490px;top:51px;width:90px;height:36px;background:linear-gradient(#46464a,#333336 60%,#2c2c2e);border-left:1px solid #3a3a3c;"></div>
<div style="left:1490px;top:52px;font:normal 13.5px/16px 'Liberation Sans',sans-serif;color:#6fa8cf;white-space:nowrap;width:90px;text-align:center;">TimeSelEnd</div>
<div style="left:1490px;top:70px;font:normal 11.8px/16px 'Liberation Sans',sans-serif;color:#c8c8c8;white-space:nowrap;width:90px;text-align:center;">17.&nbsp; 1.&nbsp; 00</div>
<div style="left:1580px;top:51px;width:91px;height:36px;background:linear-gradient(#46464a,#333336 60%,#2c2c2e);border-left:1px solid #3a3a3c;"></div>
<div style="left:1580px;top:52px;font:normal 13.5px/16px 'Liberation Sans',sans-serif;color:#6fa8cf;white-space:nowrap;width:91px;text-align:center;">TimeSelLen</div>
<div style="left:1580px;top:70px;font:normal 11.8px/16px 'Liberation Sans',sans-serif;color:#c8c8c8;white-space:nowrap;width:91px;text-align:center;">4.&nbsp; 0.&nbsp; 00</div>
<div style="left:1671px;top:51px;width:49px;height:36px;background:linear-gradient(#5a5a60,#505055);"></div>
<div style="left:1675px;top:52px;font:normal 9.5px/11px 'Liberation Sans',sans-serif;color:#8a8a90;white-space:nowrap;">REL</div>
<div style="left:1697px;top:52px;font:bold 9.5px/11px 'Liberation Sans',sans-serif;color:#e0e0e0;white-space:nowrap;">LINE</div>
<div style="left:1671px;top:61px;font:normal 14px/16px 'Liberation Sans',sans-serif;color:#8fc0e8;white-space:nowrap;width:49px;text-align:center;">1/4</div>
<div style="left:1720px;top:51px;width:20px;height:36px;background:linear-gradient(#46464a,#333336 60%,#2c2c2e);border-left:1px solid #3a3a3c;"></div>
<div style="left:1720px;top:61px;font:normal 13px/16px 'Liberation Sans',sans-serif;color:#6fa8cf;white-space:nowrap;width:20px;text-align:center;">T</div>
<div style="left:1740px;top:51px;width:50px;height:36px;background:linear-gradient(#46464a,#333336 60%,#2c2c2e);border-left:1px solid #3a3a3c;"></div>
<div style="left:1740px;top:52px;font:normal 9.5px/11px 'Liberation Sans',sans-serif;color:#5a5a60;white-space:nowrap;width:50px;text-align:center;">SWING</div>
<div style="left:1740px;top:61px;font:normal 14px/16px 'Liberation Sans',sans-serif;color:#6fa8cf;white-space:nowrap;width:50px;text-align:center;">0%</div>
<div style="left:91px;top:93px;width:1704px;height:37px;background:#333333;"></div>
<div style="left:95px;top:102px;font:bold 15px/18px 'Liberation Serif',serif;color:#a0a0a0;white-space:nowrap;letter-spacing:.9px;">Selection:</div>
<div style="left:179px;top:102px;font:bold 15px/18px 'Liberation Serif',serif;color:#a0a0a0;white-space:nowrap;letter-spacing:1.100px;">13.1.00</div>
<div style="left:252px;top:102px;font:bold 15px/18px 'Liberation Serif',serif;color:#a0a0a0;white-space:nowrap;letter-spacing:1.100px;">17.1.00</div>
<div style="left:330px;top:102px;font:bold 15px/18px 'Liberation Serif',serif;color:#a0a0a0;white-space:nowrap;letter-spacing:1.100px;">4.0.00</div>
<div style="left:654px;top:100px;width:54px;height:23px;background:linear-gradient(#3f3f3f,#333);border:1px solid #222;border-radius:4px;box-shadow:inset 0 1px 0 #555;"></div>
<div style="left:680px;top:101px;width:1px;height:21px;background:#2a2a2a;"></div>
<svg style="left:654px;top:100px" width="54" height="23"><g fill="#c8c8c8"><rect x="7" y="7" width="2" height="9"/><path d="M7 7h-1.5v2h1.5zM16 7v9l-7-4.5z"/><rect x="44" y="7" width="2" height="9"/><path d="M46 7h1.500v2h-1.500zM33 7v9l9-4.500z"/></g></svg>
<div style="left:714px;top:99px;width:25px;height:25px;background:#1c1c1c;border-radius:50%;"></div>
<div style="left:719px;top:104px;width:15px;height:15px;background:none;border-radius:50%;border:3.5px solid #c8c8c8;"></div>
<div style="left:747px;top:98px;width:26px;height:26px;background:radial-gradient(circle at 50% 35%,#d0d0d0,#a8a8a8);border-radius:50%;box-shadow:0 1px 1px #111;"></div>
<svg style="left:747px;top:98px" width="26" height="26"><path d="M9.500 7.500l9 5.500l-9 5.500z" fill="#8c8c8c" stroke="#777" stroke-width=".8"/></svg>
<svg style="left:779px;top:101px" width="20" height="20" viewBox="0 0 20 20"><g fill="none" stroke="#c8c8c8" stroke-width="2.600"><path d="M3.500 8.500a7 7 0 0 1 12-2.500"/><path d="M16.500 11.500a7 7 0 0 1-12 2.500"/></g><path d="M17.500 2v6h-6zM2.500 18v-6h6z" fill="#c8c8c8"/></svg>
<div style="left:805px;top:100px;width:54px;height:23px;background:linear-gradient(#3f3f3f,#333);border:1px solid #222;border-radius:4px;box-shadow:inset 0 1px 0 #555;"></div>
<div style="left:831px;top:101px;width:1px;height:21px;background:#2a2a2a;"></div>
<div style="left:814px;top:107px;width:9px;height:9px;background:#c8c8c8;"></div>
<div style="left:840px;top:107px;width:3px;height:9px;background:#c8c8c8;"></div>
<div style="left:845px;top:107px;width:3px;height:9px;background:#c8c8c8;"></div>
<div style="left:1002px;top:99px;font:bold 21.4px/26px 'Liberation Sans',sans-serif;color:#d0d0d0;white-space:nowrap;letter-spacing:1.100px;">1.1.00 / 0:00.000</div>
<div style="left:1246px;top:102px;font:normal 16.3px/20px 'Liberation Sans',sans-serif;color:#c8c8c8;white-space:nowrap;">[Stopped]</div>
<div style="left:1572px;top:96px;font:bold 11.5px/14px 'Liberation Serif',serif;color:#a0a0a0;white-space:nowrap;width:40px;text-align:center;">BPM</div>
<div style="left:1572px;top:113px;font:bold 12.5px/14px 'Liberation Serif',serif;color:#a0a0a0;white-space:nowrap;width:40px;text-align:center;">80</div>
<div style="left:1621px;top:94px;width:36px;height:36px;background:#2b2b2b;"></div>
<div style="left:1621px;top:104px;font:bold 12.5px/14px 'Liberation Serif',serif;color:#a0a0a0;white-space:nowrap;width:36px;text-align:center;">4/4</div>
<div style="left:1662px;top:94px;width:52px;height:36px;background:#2e2e2e;"></div>
<svg style="left:1666px;top:97px" width="12" height="9"><path d="M1.500 7l4-5l4 3" fill="none" stroke="#666" stroke-width="1.300"/><rect x="0" y="5.500" width="3" height="3" fill="#666"/><rect x="4" y="0.500" width="3" height="3" fill="#666"/></svg>
<div style="left:1681px;top:97.5px;font:bold 8px/10px 'Liberation Sans',sans-serif;color:#999;white-space:nowrap;">GLOBAL</div>
<div style="left:1666px;top:108px;width:46px;height:17px;background:#333;border-radius:2px;"></div>
<div style="left:1671px;top:110px;font:normal 10.5px/12px 'Liberation Sans',sans-serif;color:#aaa;white-space:nowrap;">none</div>
<div style="left:1698px;top:111px;width:11px;height:11px;background:#bbb;border-radius:50%;"></div>
<svg style="left:1698px;top:111px" width="11" height="11"><path d="M2.500 4h6l-3 4.500z" fill="#333"/></svg>
<div style="left:1718px;top:94px;width:76px;height:36px;background:#303030;"></div>
<div style="left:1722px;top:97px;width:29px;height:29px;background:radial-gradient(circle at 50% 30%,#3a3a3a,#262626);border-radius:50%;box-shadow:0 1px 2px #111,inset 0 1px 0 #4a4a4a;"></div>
<div style="left:1736px;top:101px;width:1px;height:8px;background:#bbb;"></div>
<div style="left:1756px;top:97px;font:bold 11.5px/14px 'Liberation Serif',serif;color:#a0a0a0;white-space:nowrap;letter-spacing:.5px;">Rate:</div>
<div style="left:1761px;top:114px;font:bold 11.5px/14px 'Liberation Serif',serif;color:#a0a0a0;white-space:nowrap;letter-spacing:.5px;">1.0</div>
<svg style="left:93px;top:133px" width="30" height="28" viewBox="0 0 30 28"><path d="M15 4l3.500 5h-2.500v6h-2v-6h-2.500z" fill="#8f9997"/><rect x="5.500" y="18" width="19" height="6" rx="1.500" fill="none" stroke="#8f9997" stroke-width="1.200"/><rect x="8" y="20" width="3" height="2.500" fill="#8f9997"/></svg>
<svg style="left:123px;top:133px" width="30" height="28" viewBox="0 0 30 28"><path d="M15 16l3.500-5h-2.500v-7h-2v7h-2.500z" fill="#8f9997"/><rect x="5" y="18" width="20" height="6.500" rx="1.500" fill="#8f9997"/><rect x="8" y="20" width="3" height="2.500" fill="#2d2d2d"/></svg>
<div style="left:153px;top:132px;width:30px;height:30px;background:#232323;border-bottom:1px solid #000;"></div>
<svg style="left:153px;top:133px" width="30" height="28" viewBox="0 0 30 28"><path d="M3 7c0-4 12-4 12 0c0 4-3 9-6 11c-3-2-6-7-6-11z" fill="none" stroke="#8f9997" stroke-width="1.100"/><path d="M6 6c3 0 5 1 6 2c-2 1-3 4-3 6" fill="none" stroke="#8f9997" stroke-width="1"/><path d="M4 20c1.500 3 4 3.500 7 3" fill="none" stroke="#55b59c" stroke-width="1.300"/><path d="M10 20.500l4 2.500l-4 2.500z" fill="#55b59c"/><rect x="16.500" y="12" width="10" height="14" fill="#8f9997"/><circle cx="21.500" cy="18" r="3" fill="#2d2d2d"/><circle cx="21.500" cy="18" r="1" fill="#8f9997"/><path d="M18 25l3-4" stroke="#2d2d2d" stroke-width="1.300"/></svg>
<svg style="left:183px;top:133px" width="30" height="28" viewBox="0 0 30 28"><circle cx="15" cy="15" r="9" fill="none" stroke="#8f9997" stroke-width="1.200"/><path d="M15 13v6.500M12.500 19.500h5M12.800 13.200h2.200" stroke="#8f9997" stroke-width="1.500"/><circle cx="15" cy="10.200" r="1.100" fill="#8f9997"/></svg>
<svg style="left:213px;top:133px" width="30" height="28" viewBox="0 0 30 28"><path d="M5 11v8.500h8.500l-3-3c4-4 9-3.500 13-0.500c-4-6-11-7-15.500-2z" fill="#8f9997"/></svg>
<svg style="left:243px;top:133px" width="30" height="28" viewBox="0 0 30 28"><path d="M25 11v8.500h-8.500l3-3c-4-4-9-3.500-13-0.500c4-6 11-7 15.500-2z" fill="#8f9997"/></svg>
<div style="left:274px;top:133px;width:28px;height:28px;background:#2f5049;"></div>
<svg style="left:273px;top:133px" width="30" height="28" viewBox="0 0 30 28"><path d="M4.500 15c5-7 16-7 21 0" fill="none" stroke="#1fc5a5" stroke-width="1.300"/><path d="M12 8.500h6l-0.800-1.800h-4.400z" fill="#1fc5a5"/><path d="M11.500 11h7l3.500 13h-14z" fill="#1fc5a5"/><path d="M15 11v13" stroke="#2f5049" stroke-width="1.800"/></svg>
<div style="left:304px;top:133px;width:28px;height:28px;background:#2f5049;"></div>
<svg style="left:303px;top:133px" width="30" height="28" viewBox="0 0 30 28"><path d="M4 7h5l9 17M26 7h-5l-9 17" fill="none" stroke="#1fc5a5" stroke-width="1.300"/></svg>
<svg style="left:333px;top:133px" width="30" height="28" viewBox="0 0 30 28"><path d="M13 11h-4.500a4 4 0 0 0 0 8h4.500M17 11h4.500a4 4 0 0 1 0 8h-4.500M10 15h10" fill="none" stroke="#8f9997" stroke-width="1.400"/></svg>
<svg style="left:363px;top:133px" width="30" height="28" viewBox="0 0 30 28"><rect x="6.5" y="7.5" width="4" height="3" fill="none" stroke="#8f9997" stroke-width="1"/><rect x="6.5" y="13.5" width="4" height="3" fill="none" stroke="#8f9997" stroke-width="1"/><rect x="6.5" y="19.5" width="4" height="3" fill="none" stroke="#8f9997" stroke-width="1"/><rect x="13.5" y="7.5" width="4" height="3" fill="none" stroke="#8f9997" stroke-width="1"/><rect x="13.5" y="13.5" width="4" height="3" fill="#8f9997" stroke="#8f9997" stroke-width="1"/><rect x="13.5" y="19.5" width="4" height="3" fill="none" stroke="#8f9997" stroke-width="1"/><rect x="20.5" y="7.5" width="4" height="3" fill="none" stroke="#8f9997" stroke-width="1"/><rect x="20.5" y="13.5" width="4" height="3" fill="none" stroke="#8f9997" stroke-width="1"/><rect x="20.5" y="19.5" width="4" height="3" fill="none" stroke="#8f9997" stroke-width="1"/></svg>
<div style="left:394px;top:133px;width:28px;height:28px;background:#2f5049;"></div>
<svg style="left:393px;top:133px" width="30" height="28" viewBox="0 0 30 28"><path d="M9.500 12l5-5l5 4" fill="none" stroke="#1fc5a5" stroke-width="1.200"/><rect x="8" y="10.500" width="3" height="3" fill="#1fc5a5"/><rect x="13" y="5.500" width="3" height="3" fill="#1fc5a5"/><rect x="18" y="9.500" width="3" height="3" fill="#1fc5a5"/><path d="M13 18.500h-4a3 3 0 0 0 0 6h4M17 18.500h4a3 3 0 0 1 0 6h-4M11 21.500h8" fill="none" stroke="#1fc5a5" stroke-width="1.300"/></svg>
<div style="left:424px;top:133px;width:28px;height:28px;background:#2f5049;"></div>
<svg style="left:423px;top:133px" width="30" height="28" viewBox="0 0 30 28"><path d="M7.5 7v16" stroke="#1fc5a5" stroke-width="1" stroke-dasharray="4 2"/><path d="M12.5 7v16" stroke="#1fc5a5" stroke-width="1" stroke-dasharray="4 2"/><path d="M17.5 7v16" stroke="#1fc5a5" stroke-width="1" stroke-dasharray="4 2"/><path d="M22.5 7v16" stroke="#1fc5a5" stroke-width="1" stroke-dasharray="4 2"/></svg>
<div style="left:454px;top:133px;width:28px;height:28px;background:#2f5049;"></div>
<svg style="left:453px;top:133px" width="30" height="28" viewBox="0 0 30 28"><path d="M11 8.500h4a6.500 6.500 0 0 1 0 13h-4" fill="none" stroke="#1fc5a5" stroke-width="3"/><rect x="7" y="7" width="2.500" height="3" fill="#1fc5a5"/><rect x="7" y="20" width="2.500" height="3" fill="#1fc5a5"/></svg>
<svg style="left:483px;top:133px" width="30" height="28" viewBox="0 0 30 28"><path d="M11 15v-3.500a4 4 0 0 1 8 0v3.500" fill="none" stroke="#8f9997" stroke-width="2"/><rect x="8" y="14.500" width="14" height="9" fill="#8f9997"/></svg>
<div style="left:513px;top:133px;width:29px;height:29px;background:#7f8a88;box-shadow:inset 0 0 5px 2px #3d4543;border-radius:2px;"></div>
<svg style="left:513px;top:133px" width="30" height="28" viewBox="0 0 30 28"><rect x="6" y="6.500" width="19" height="17" fill="none" stroke="#1fc5a5" stroke-width="1.200"/><path d="M18.500 8.5h5.500" stroke="#1fc5a5" stroke-width="1"/><path d="M18.500 10.5h5.500" stroke="#1fc5a5" stroke-width="1"/><path d="M18.500 12.5h5.500" stroke="#1fc5a5" stroke-width="1"/><path d="M18.500 14.5h5.500" stroke="#1fc5a5" stroke-width="1"/><path d="M18.500 16.5h5.500" stroke="#1fc5a5" stroke-width="1"/><path d="M18.500 18.5h5.500" stroke="#1fc5a5" stroke-width="1"/><path d="M18.500 20.5h5.500" stroke="#1fc5a5" stroke-width="1"/><path d="M18.500 22.5h5.500" stroke="#1fc5a5" stroke-width="1"/></svg>
<div style="left:93px;top:162px;width:450px;height:28px;background:#202020;"></div>
<div style="left:94px;top:163px;width:28px;height:27px;background:#282828;"></div>
<svg style="left:93px;top:162px" width="30" height="28" viewBox="0 0 30 28"><ellipse cx="8" cy="22" rx="3" ry="2.200" transform="rotate(-25 8 22)" fill="#8f9997" stroke="#8f9997" stroke-width="0"/><rect x="10" y="8" width="1.200" height="14" fill="#8f9997"/><path d="M11 8.0c1 3 5 4 3.500 9c0.500-4-2-5-3.500-5.500z" fill="#8f9997"/><path d="M21 7l3.500 4.500h-7z" fill="#55b59c"/><path d="M21 22l3.500-4.500h-7z" fill="#55b59c"/><rect x="20" y="11" width="2" height="1.500" fill="#55b59c"/><rect x="20" y="13.5" width="2" height="1.500" fill="#55b59c"/><rect x="20" y="16" width="2" height="1.500" fill="#55b59c"/></svg>
<div style="left:124px;top:163px;width:28px;height:27px;background:#282828;"></div>
<svg style="left:123px;top:162px" width="30" height="28" viewBox="0 0 30 28"><ellipse cx="8" cy="22" rx="3" ry="2.200" transform="rotate(-25 8 22)" fill="#8f9997" stroke="#8f9997" stroke-width="0"/><rect x="10" y="8" width="1.200" height="14" fill="#8f9997"/><path d="M11 8.0c1 3 5 4 3.500 9c0.500-4-2-5-3.500-5.500z" fill="#8f9997"/><path d="M21 7l3.500 4.500h-7z" fill="#55b59c"/><path d="M21 22l3.500-4.500h-7z" fill="#55b59c"/><rect x="20" y="11" width="2" height="1.500" fill="#55b59c"/><rect x="20" y="13.5" width="2" height="1.500" fill="#55b59c"/><rect x="20" y="16" width="2" height="1.500" fill="#55b59c"/></svg>
<div style="left:154px;top:163px;width:28px;height:27px;background:#282828;"></div>
<svg style="left:153px;top:162px" width="30" height="28" viewBox="0 0 30 28"><path d="M15 4.500l2 3h-4z" fill="#8f9997"/><rect x="4.500" y="13" width="21" height="6" fill="none" stroke="#8f9997" stroke-width="1.100"/><circle cx="15" cy="13" r="4.500" fill="#55b59c" stroke="#55b59c" stroke-width="1" stroke-dasharray="1 1"/><path d="M13 12a2 2 0 0 1 4 0v5c2 1 2 3 1 6h-5c-2-2-2-5 0-6z" fill="#8f9997"/></svg>
<div style="left:184px;top:163px;width:28px;height:27px;background:#282828;"></div>
<svg style="left:183px;top:162px" width="30" height="28" viewBox="0 0 30 28"><path d="M6 5h5M6 5v5M6.500 5.500l5 5" stroke="#8f9997" stroke-width="1.200" fill="none"/><path d="M7 11h5v-5" stroke="#8f9997" stroke-width="1" fill="none"/><rect x="15" y="10" width="12" height="15" fill="#2f5049" stroke="#55b59c" stroke-width="1.200"/><path d="M18 10v-1.500h2v-1.500h2v1.500h2v1.500z" fill="#55b59c"/></svg>
<div style="left:214px;top:163px;width:28px;height:27px;background:#282828;"></div>
<svg style="left:213px;top:162px" width="30" height="28" viewBox="0 0 30 28"><rect x="8" y="10" width="12" height="15" fill="#444" stroke="#8f9997" stroke-width="1.200"/><path d="M11 10v-1.500h2v-1.500h2v1.500h2v1.500z" fill="#8f9997"/><path d="M19 5h6v6l-2-2l-3 3l-2-2l3-3z" fill="#55b59c"/></svg>
<div style="left:244px;top:163px;width:28px;height:27px;background:#282828;"></div>
<svg style="left:243px;top:162px" width="30" height="28" viewBox="0 0 30 28"><rect x="2" y="6" width="12" height="5" fill="#55b59c"/><rect x="6" y="15" width="12" height="5" fill="#8f9997"/><rect x="13" y="19.500" width="12" height="5" fill="#8f9997"/><path d="M16 8c4 0 7 2 7 6.500" fill="none" stroke="#55b59c" stroke-width="1.300"/><path d="M20.500 13.500h5l-2.500 3.500z" fill="#55b59c"/></svg>
<div style="left:274px;top:163px;width:28px;height:27px;background:#282828;"></div>
<svg style="left:273px;top:162px" width="30" height="28" viewBox="0 0 30 28"><path d="M6 10l4-4h12v14h-16z" fill="#555"/><rect x="10" y="3.500" width="12" height="2" fill="#a020f0"/><path d="M9 16l5-5.500l5 5.500" fill="none" stroke="#b040ff" stroke-width="1.300"/><rect x="7.500" y="14.500" width="3" height="3" fill="#b040ff"/><rect x="12.500" y="9" width="3" height="3" fill="#b040ff"/><rect x="17.500" y="14.500" width="3" height="3" fill="#b040ff"/><text x="14.500" y="27" font-family="Liberation Sans,sans-serif" font-size="9" fill="#ccc" text-anchor="middle">latch</text></svg>
<div style="left:304px;top:163px;width:28px;height:27px;background:#282828;"></div>
<svg style="left:303px;top:162px" width="30" height="28" viewBox="0 0 30 28"><path d="M13 13l5-6l5 4" fill="none" stroke="#8f9997" stroke-width="1.100"/><circle cx="13" cy="13" r="1.700" fill="#2d2d2d" stroke="#8f9997"/><circle cx="18" cy="6.500" r="1.700" fill="#2d2d2d" stroke="#8f9997"/><circle cx="23" cy="11" r="1.700" fill="#2d2d2d" stroke="#8f9997"/><path d="M6 12c0-4 3-5 6-5" fill="none" stroke="#8f9997" stroke-width="1.200"/><path d="M3.500 11.500h5l-2.500 3.500z" fill="#8f9997"/><rect x="3.500" y="17" width="12" height="4" fill="#55b59c"/><rect x="17" y="17" width="8" height="4" fill="#8f9997"/><rect x="5" y="22.500" width="8" height="4" fill="#8f9997"/><rect x="15" y="22.500" width="8" height="4" fill="#8f9997"/></svg>
<div style="left:334px;top:163px;width:28px;height:27px;background:#282828;"></div>
<svg style="left:333px;top:162px" width="30" height="28" viewBox="0 0 30 28"><defs><linearGradient id="rb" x1="0" x2="1"><stop offset="0" stop-color="#d01010"/><stop offset=".3" stop-color="#e0a000"/><stop offset=".55" stop-color="#30b030"/><stop offset=".8" stop-color="#2060d0"/><stop offset="1" stop-color="#4040a0"/></linearGradient></defs><rect x="5" y="5" width="13" height="10" fill="url(#rb)"/><path d="M27 6l-8 11" stroke="#8f9997" stroke-width="2.400" stroke-linecap="round"/><path d="M19 16l-4 2l-2 4l5-1z" fill="#8f9997"/><rect x="5" y="19" width="6" height="6" fill="#8f9997"/><rect x="13" y="21" width="6" height="4" fill="#8f9997"/><rect x="21" y="19" width="6" height="6" fill="#8f9997"/></svg>
<div style="left:364px;top:163px;width:28px;height:27px;background:#282828;"></div>
<svg style="left:363px;top:162px" width="30" height="28" viewBox="0 0 30 28"><path d="M3 24.500l3.500-11l6.500-6.500l7.500-2.500c3.500-0.500 5 3 3 5.500l-3 3l-6.500 3.500z" fill="#8f9997"/><circle cx="13.500" cy="5.500" r="1.300" fill="#8f9997"/><circle cx="16.500" cy="4.300" r="1.300" fill="#8f9997"/><circle cx="19.500" cy="3.300" r="1.300" fill="#8f9997"/></svg>
<div style="left:394px;top:163px;width:28px;height:27px;background:#282828;"></div>
<svg style="left:393px;top:162px" width="30" height="28" viewBox="0 0 30 28"><rect x="4" y="8" width="22" height="6" fill="#55b59c"/><rect x="14" y="8" width="6" height="6" fill="#8f9997"/><path d="M14.500 4v6" stroke="#8f9997" stroke-width="1" stroke-dasharray="2 1"/><path d="M11 8.5L18 22.5M19 8.5L12 22.5" stroke="#8f9997" stroke-width="1.800" fill="none"/><ellipse cx="11" cy="23.5" rx="2" ry="2.800" fill="none" stroke="#8f9997" stroke-width="1.200" transform="rotate(25 11 23.5)"/><ellipse cx="19" cy="23.5" rx="2" ry="2.800" fill="none" stroke="#8f9997" stroke-width="1.200" transform="rotate(-25 19 23.5)"/></svg>
<div style="left:424px;top:163px;width:28px;height:27px;background:#282828;"></div>
<svg style="left:423px;top:162px" width="30" height="28" viewBox="0 0 30 28"><rect x="3" y="8" width="22" height="6" fill="#55b59c"/><rect x="7.500" y="8" width="12" height="6" fill="#8f9997"/><path d="M7.500 4v10M19.500 4v10" stroke="#8f9997" stroke-width="1" stroke-dasharray="2 1"/><path d="M14 8.5L21 22.5M22 8.5L15 22.5" stroke="#8f9997" stroke-width="1.800" fill="none"/><ellipse cx="14" cy="23.5" rx="2" ry="2.800" fill="none" stroke="#8f9997" stroke-width="1.200" transform="rotate(25 14 23.5)"/><ellipse cx="22" cy="23.5" rx="2" ry="2.800" fill="none" stroke="#8f9997" stroke-width="1.200" transform="rotate(-25 22 23.5)"/></svg>
<div style="left:454px;top:163px;width:28px;height:27px;background:#282828;"></div>
<svg style="left:453px;top:162px" width="30" height="28" viewBox="0 0 30 28"><path d="M11 6L18 20M19 6L12 20" stroke="#8f9997" stroke-width="1.800" fill="none"/><ellipse cx="11" cy="21" rx="2" ry="2.800" fill="none" stroke="#8f9997" stroke-width="1.200" transform="rotate(25 11 21)"/><ellipse cx="19" cy="21" rx="2" ry="2.800" fill="none" stroke="#8f9997" stroke-width="1.200" transform="rotate(-25 19 21)"/></svg>
<div style="left:484px;top:163px;width:28px;height:27px;background:#282828;"></div>
<svg style="left:483px;top:162px" width="30" height="28" viewBox="0 0 30 28"><g transform="translate(15 14) rotate(40)"><rect x="-4.500" y="-9" width="9" height="10" rx="2" fill="none" stroke="#8f9997" stroke-width="1.400"/><path d="M-4.500 2h9l-2.500 5h-4zM-1.500 7.500h3l-1.500 3.500z" fill="#8f9997"/></g></svg>
<div style="left:514px;top:163px;width:28px;height:27px;background:#282828;"></div>
<svg style="left:513px;top:162px" width="30" height="28" viewBox="0 0 30 28"><circle cx="9" cy="10" r="6" fill="#8f9997"/><circle cx="5.5" cy="10" r="1" fill="#262626"/><circle cx="12.5" cy="10" r="1" fill="#262626"/><circle cx="6.5" cy="7.2" r="1" fill="#262626"/><circle cx="11.5" cy="7.2" r="1" fill="#262626"/><circle cx="9" cy="6" r="1" fill="#262626"/><rect x="7.8" y="13" width="2.400" height="3.500" fill="#262626"/><path d="M17 6c3 0 4 3 4 5" fill="none" stroke="#8f9997" stroke-width="1.400"/><path d="M18.500 10.500h5l-2.500 3.500z" fill="#8f9997"/><path d="M10 22l3-1l1.500 1l1.500-2l1 2l1.500-3l1.500 4l1.500-6l1.500 9l1.500-7l1 3" fill="none" stroke="#55b59c" stroke-width="1.100"/></svg>
<div style="left:93px;top:190.5px;width:450px;height:1.5px;background:#000;"></div>
<div style="left:567px;top:131px;width:1222px;height:13px;background:#333;"></div>
<div style="left:567px;top:144px;width:1222px;height:13px;background:#3d3d3d;"></div>
<div style="left:567px;top:157px;width:1222px;height:10px;background:#333;"></div>
<div style="left:567px;top:167px;width:1222px;height:30px;background:#1e1e1e;"></div>
<div style="left:566px;top:131px;width:285px;height:13px;background:#f0f0f0;clip-path:polygon(3px 0,calc(100% - 3px) 0,100% 3px,100% calc(100% - 3px),calc(100% - 3px) 100%,3px 100%,0 calc(100% - 3px),0 3px);"></div>
<div style="left:567px;top:132px;width:283px;height:11px;background:#0080c8;clip-path:polygon(2.500px 0,calc(100% - 2.500px) 0,100% 2.500px,100% calc(100% - 2.500px),calc(100% - 2.500px) 100%,2.500px 100%,0 calc(100% - 2.500px),0 2.500px);"></div>
<div style="left:570px;top:132px;font:bold 9.5px/11px 'DejaVu Sans',sans-serif;color:#fff;white-space:nowrap;transform:scaleX(1.15);transform-origin:0 0;">1</div>
<div style="left:850px;top:131px;width:286px;height:13px;background:#f0f0f0;clip-path:polygon(3px 0,calc(100% - 3px) 0,100% 3px,100% calc(100% - 3px),calc(100% - 3px) 100%,3px 100%,0 calc(100% - 3px),0 3px);"></div>
<div style="left:851px;top:132px;width:284px;height:11px;background:#c8c800;clip-path:polygon(2.500px 0,calc(100% - 2.500px) 0,100% 2.500px,100% calc(100% - 2.500px),calc(100% - 2.500px) 100%,2.500px 100%,0 calc(100% - 2.500px),0 2.500px);"></div>
<div style="left:854px;top:132px;font:bold 9.5px/11px 'DejaVu Sans',sans-serif;color:#000;white-space:nowrap;transform:scaleX(1.15);transform-origin:0 0;">2</div>
<div style="left:1135px;top:131px;width:285px;height:13px;background:#f0f0f0;clip-path:polygon(3px 0,calc(100% - 3px) 0,100% 3px,100% calc(100% - 3px),calc(100% - 3px) 100%,3px 100%,0 calc(100% - 3px),0 3px);"></div>
<div style="left:1136px;top:132px;width:283px;height:11px;background:#c00000;clip-path:polygon(2.500px 0,calc(100% - 2.500px) 0,100% 2.500px,100% calc(100% - 2.500px),calc(100% - 2.500px) 100%,2.500px 100%,0 calc(100% - 2.500px),0 2.500px);"></div>
<div style="left:1139px;top:132px;font:bold 9.5px/11px 'DejaVu Sans',sans-serif;color:#fff;white-space:nowrap;transform:scaleX(1.15);transform-origin:0 0;">3</div>
<div style="left:1419px;top:131px;width:286px;height:13px;background:#f0f0f0;clip-path:polygon(3px 0,calc(100% - 3px) 0,100% 3px,100% calc(100% - 3px),calc(100% - 3px) 100%,3px 100%,0 calc(100% - 3px),0 3px);"></div>
<div style="left:1420px;top:132px;width:284px;height:11px;background:#00d8d8;clip-path:polygon(2.500px 0,calc(100% - 2.500px) 0,100% 2.500px,100% calc(100% - 2.500px),calc(100% - 2.500px) 100%,2.500px 100%,0 calc(100% - 2.500px),0 2.500px);"></div>
<div style="left:1423px;top:132px;font:bold 9.5px/11px 'DejaVu Sans',sans-serif;color:#000;white-space:nowrap;transform:scaleX(1.15);transform-origin:0 0;">4</div>
<div style="left:566px;top:144px;width:1px;height:23px;background:#0080c8;"></div>
<div style="left:850px;top:144px;width:1px;height:53px;background:#c8c800;"></div>
<div style="left:1135px;top:144px;width:1px;height:53px;background:#c00000;"></div>
<div style="left:1419px;top:144px;width:1px;height:53px;background:#00d8d8;"></div>
<div style="left:1704px;top:144px;width:1px;height:53px;background:#00d8d8;"></div>
<div style="left:566px;top:157px;width:1px;height:10px;background:#aaa;"></div>
<div style="left:570px;top:157px;font:bold 9.2px/11px 'DejaVu Sans',sans-serif;color:#00f0f0;white-space:nowrap;transform:scaleX(1.28);transform-origin:0 0;letter-spacing:.7px;word-spacing:2px;">80 4/4</div>
<div style="left:1419px;top:193px;width:286px;height:4px;background:#c80000;"></div>
<svg style="left:0;top:0" width="1919" height="1017"><rect x="584" y="193" width="1" height="4" fill="#e8e8e8"/><rect x="601" y="193" width="1" height="4" fill="#e8e8e8"/><rect x="619" y="193" width="1" height="4" fill="#e8e8e8"/><rect x="637" y="188" width="1" height="9" fill="#e8e8e8"/><rect x="655" y="193" width="1" height="4" fill="#e8e8e8"/><rect x="673" y="193" width="1" height="4" fill="#e8e8e8"/><rect x="690" y="193" width="1" height="4" fill="#e8e8e8"/><rect x="708" y="167" width="1" height="30" fill="#e8e8e8"/><rect x="726" y="193" width="1" height="4" fill="#e8e8e8"/><rect x="744" y="193" width="1" height="4" fill="#e8e8e8"/><rect x="761" y="193" width="1" height="4" fill="#e8e8e8"/><rect x="779" y="188" width="1" height="9" fill="#e8e8e8"/><rect x="797" y="193" width="1" height="4" fill="#e8e8e8"/><rect x="815" y="193" width="1" height="4" fill="#e8e8e8"/><rect x="833" y="193" width="1" height="4" fill="#e8e8e8"/><rect x="850" y="167" width="1" height="30" fill="#e8e8e8"/><rect x="868" y="193" width="1" height="4" fill="#e8e8e8"/><rect x="886" y="193" width="1" height="4" fill="#e8e8e8"/><rect x="904" y="193" width="1" height="4" fill="#e8e8e8"/><rect x="921" y="188" width="1" height="9" fill="#e8e8e8"/><rect x="939" y="193" width="1" height="4" fill="#e8e8e8"/><rect x="957" y="193" width="1" height="4" fill="#e8e8e8"/><rect x="975" y="193" width="1" height="4" fill="#e8e8e8"/><rect x="993" y="167" width="1" height="30" fill="#e8e8e8"/><rect x="1010" y="193" width="1" height="4" fill="#e8e8e8"/><rect x="1028" y="193" width="1" height="4" fill="#e8e8e8"/><rect x="1046" y="193" width="1" height="4" fill="#e8e8e8"/><rect x="1064" y="188" width="1" height="9" fill="#e8e8e8"/><rect x="1081" y="193" width="1" height="4" fill="#e8e8e8"/><rect x="1099" y="193" width="1" height="4" fill="#e8e8e8"/><rect x="1117" y="193" width="1" height="4" fill="#e8e8e8"/><rect x="1135" y="167" width="1" height="30" fill="#e8e8e8"/><rect x="1152" y="193" width="1" height="4" fill="#e8e8e8"/><rect x="1170" y="193" width="1" height="4" fill="#e8e8e8"/><rect x="1188" y="193" width="1" height="4" fill="#e8e8e8"/><rect x="1206" y="188" width="1" height="9" fill="#e8e8e8"/><rect x="1224" y="193" width="1" height="4" fill="#e8e8e8"/><rect x="1241" y="193" width="1" height="4" fill="#e8e8e8"/><rect x="1259" y="193" width="1" height="4" fill="#e8e8e8"/><rect x="1277" y="167" width="1" height="30" fill="#e8e8e8"/><rect x="1295" y="193" width="1" height="4" fill="#e8e8e8"/><rect x="1312" y="193" width="1" height="4" fill="#e8e8e8"/><rect x="1330" y="193" width="1" height="4" fill="#e8e8e8"/><rect x="1348" y="188" width="1" height="9" fill="#e8e8e8"/><rect x="1366" y="193" width="1" height="4" fill="#e8e8e8"/><rect x="1384" y="193" width="1" height="4" fill="#e8e8e8"/><rect x="1401" y="193" width="1" height="4" fill="#e8e8e8"/><rect x="1419" y="167" width="1" height="30" fill="#e8e8e8"/><rect x="1437" y="193" width="1" height="4" fill="#e8e8e8"/><rect x="1455" y="193" width="1" height="4" fill="#e8e8e8"/><rect x="1472" y="193" width="1" height="4" fill="#e8e8e8"/><rect x="1490" y="188" width="1" height="9" fill="#e8e8e8"/><rect x="1508" y="193" width="1" height="4" fill="#e8e8e8"/><rect x="1526" y="193" width="1" height="4" fill="#e8e8e8"/><rect x="1544" y="193" width="1" height="4" fill="#e8e8e8"/><rect x="1561" y="167" width="1" height="30" fill="#e8e8e8"/><rect x="1579" y="193" width="1" height="4" fill="#e8e8e8"/><rect x="1597" y="193" width="1" height="4" fill="#e8e8e8"/><rect x="1615" y="193" width="1" height="4" fill="#e8e8e8"/><rect x="1632" y="188" width="1" height="9" fill="#e8e8e8"/><rect x="1650" y="193" width="1" height="4" fill="#e8e8e8"/><rect x="1668" y="193" width="1" height="4" fill="#e8e8e8"/><rect x="1686" y="193" width="1" height="4" fill="#e8e8e8"/><rect x="1704" y="167" width="1" height="30" fill="#e8e8e8"/><rect x="1721" y="193" width="1" height="4" fill="#e8e8e8"/><rect x="1739" y="193" width="1" height="4" fill="#e8e8e8"/><rect x="1757" y="193" width="1" height="4" fill="#e8e8e8"/><rect x="1775" y="188" width="1" height="9" fill="#e8e8e8"/></svg>
<div style="left:570px;top:167px;font:bold 11px/12px 'DejaVu Sans',sans-serif;color:#fff;white-space:nowrap;text-shadow:1px 0 #000,-1px 0 #000,0 1px #000,0 -1px #000;letter-spacing:1px;transform:scaleX(1.2);transform-origin:0 0;">1.1.00</div>
<div style="left:569px;top:179px;width:57px;height:1px;background:#f0f0f0;box-shadow:0 0 0 .5px rgba(0,0,0,.5);"></div>
<div style="left:570px;top:182px;font:bold 9.3px/11px 'DejaVu Sans',sans-serif;color:#fff;white-space:nowrap;text-shadow:1px 0 #000,-1px 0 #000,0 1px #000,0 -1px #000;letter-spacing:.8px;transform:scaleX(1.27);transform-origin:0 0;">0:00.00</div>
<div style="left:712px;top:167px;font:bold 11px/12px 'DejaVu Sans',sans-serif;color:#fff;white-space:nowrap;text-shadow:1px 0 #000,-1px 0 #000,0 1px #000,0 -1px #000;letter-spacing:1px;transform:scaleX(1.2);transform-origin:0 0;">3.1.00</div>
<div style="left:711px;top:179px;width:57px;height:1px;background:#f0f0f0;box-shadow:0 0 0 .5px rgba(0,0,0,.5);"></div>
<div style="left:712px;top:182px;font:bold 9.3px/11px 'DejaVu Sans',sans-serif;color:#fff;white-space:nowrap;text-shadow:1px 0 #000,-1px 0 #000,0 1px #000,0 -1px #000;letter-spacing:.8px;transform:scaleX(1.27);transform-origin:0 0;">0:06.00</div>
<div style="left:854px;top:167px;font:bold 11px/12px 'DejaVu Sans',sans-serif;color:#fff;white-space:nowrap;text-shadow:1px 0 #000,-1px 0 #000,0 1px #000,0 -1px #000;letter-spacing:1px;transform:scaleX(1.2);transform-origin:0 0;">5.1.00</div>
<div style="left:853px;top:179px;width:57px;height:1px;background:#f0f0f0;box-shadow:0 0 0 .5px rgba(0,0,0,.5);"></div>
<div style="left:854px;top:182px;font:bold 9.3px/11px 'DejaVu Sans',sans-serif;color:#fff;white-space:nowrap;text-shadow:1px 0 #000,-1px 0 #000,0 1px #000,0 -1px #000;letter-spacing:.8px;transform:scaleX(1.27);transform-origin:0 0;">0:12.00</div>
<div style="left:997px;top:167px;font:bold 11px/12px 'DejaVu Sans',sans-serif;color:#fff;white-space:nowrap;text-shadow:1px 0 #000,-1px 0 #000,0 1px #000,0 -1px #000;letter-spacing:1px;transform:scaleX(1.2);transform-origin:0 0;">7.1.00</div>
<div style="left:996px;top:179px;width:57px;height:1px;background:#f0f0f0;box-shadow:0 0 0 .5px rgba(0,0,0,.5);"></div>
<div style="left:997px;top:182px;font:bold 9.3px/11px 'DejaVu Sans',sans-serif;color:#fff;white-space:nowrap;text-shadow:1px 0 #000,-1px 0 #000,0 1px #000,0 -1px #000;letter-spacing:.8px;transform:scaleX(1.27);transform-origin:0 0;">0:18.00</div>
<div style="left:1139px;top:167px;font:bold 11px/12px 'DejaVu Sans',sans-serif;color:#fff;white-space:nowrap;text-shadow:1px 0 #000,-1px 0 #000,0 1px #000,0 -1px #000;letter-spacing:1px;transform:scaleX(1.2);transform-origin:0 0;">9.1.00</div>
<div style="left:1138px;top:179px;width:57px;height:1px;background:#f0f0f0;box-shadow:0 0 0 .5px rgba(0,0,0,.5);"></div>
<div style="left:1139px;top:182px;font:bold 9.3px/11px 'DejaVu Sans',sans-serif;color:#fff;white-space:nowrap;text-shadow:1px 0 #000,-1px 0 #000,0 1px #000,0 -1px #000;letter-spacing:.8px;transform:scaleX(1.27);transform-origin:0 0;">0:24.00</div>
<div style="left:1281px;top:167px;font:bold 11px/12px 'DejaVu Sans',sans-serif;color:#fff;white-space:nowrap;text-shadow:1px 0 #000,-1px 0 #000,0 1px #000,0 -1px #000;letter-spacing:1px;transform:scaleX(1.2);transform-origin:0 0;">11.1.00</div>
<div style="left:1280px;top:179px;width:57px;height:1px;background:#f0f0f0;box-shadow:0 0 0 .5px rgba(0,0,0,.5);"></div>
<div style="left:1281px;top:182px;font:bold 9.3px/11px 'DejaVu Sans',sans-serif;color:#fff;white-space:nowrap;text-shadow:1px 0 #000,-1px 0 #000,0 1px #000,0 -1px #000;letter-spacing:.8px;transform:scaleX(1.27);transform-origin:0 0;">0:30.00</div>
<div style="left:1423px;top:167px;font:bold 11px/12px 'DejaVu Sans',sans-serif;color:#fff;white-space:nowrap;text-shadow:1px 0 #000,-1px 0 #000,0 1px #000,0 -1px #000;letter-spacing:1px;transform:scaleX(1.2);transform-origin:0 0;">13.1.00</div>
<div style="left:1422px;top:179px;width:57px;height:1px;background:#f0f0f0;box-shadow:0 0 0 .5px rgba(0,0,0,.5);"></div>
<div style="left:1423px;top:182px;font:bold 9.3px/11px 'DejaVu Sans',sans-serif;color:#fff;white-space:nowrap;text-shadow:1px 0 #000,-1px 0 #000,0 1px #000,0 -1px #000;letter-spacing:.8px;transform:scaleX(1.27);transform-origin:0 0;">0:36.00</div>
<div style="left:1565px;top:167px;font:bold 11px/12px 'DejaVu Sans',sans-serif;color:#fff;white-space:nowrap;text-shadow:1px 0 #000,-1px 0 #000,0 1px #000,0 -1px #000;letter-spacing:1px;transform:scaleX(1.2);transform-origin:0 0;">15.1.00</div>
<div style="left:1564px;top:179px;width:57px;height:1px;background:#f0f0f0;box-shadow:0 0 0 .5px rgba(0,0,0,.5);"></div>
<div style="left:1565px;top:182px;font:bold 9.3px/11px 'DejaVu Sans',sans-serif;color:#fff;white-space:nowrap;text-shadow:1px 0 #000,-1px 0 #000,0 1px #000,0 -1px #000;letter-spacing:.8px;transform:scaleX(1.27);transform-origin:0 0;">0:42.00</div>
<div style="left:1708px;top:167px;font:bold 11px/12px 'DejaVu Sans',sans-serif;color:#fff;white-space:nowrap;text-shadow:1px 0 #000,-1px 0 #000,0 1px #000,0 -1px #000;letter-spacing:1px;transform:scaleX(1.2);transform-origin:0 0;">17.1.00</div>
<div style="left:1707px;top:179px;width:57px;height:1px;background:#f0f0f0;box-shadow:0 0 0 .5px rgba(0,0,0,.5);"></div>
<div style="left:1708px;top:182px;font:bold 9.3px/11px 'DejaVu Sans',sans-serif;color:#fff;white-space:nowrap;text-shadow:1px 0 #000,-1px 0 #000,0 1px #000,0 -1px #000;letter-spacing:.8px;transform:scaleX(1.27);transform-origin:0 0;">0:48.00</div>
<svg style="left:566px;top:168px" width="10" height="10"><path d="M0 0h9l-9 9z" fill="#8a0c18"/></svg>
<svg style="left:1419px;top:187px" width="286" height="10"><path d="M0 0h10l-10 10z" fill="#7a0c14"/><path d="M0 0h10l-10 10" stroke="#fff" stroke-width="1" fill="none"/><path d="M286 0h-10l10 10z" fill="#7a0c14"/><path d="M286 0h-10l10 10" stroke="#fff" stroke-width="1" fill="none"/></svg>
<div style="left:567px;top:197px;width:1205px;height:798px;background:#cbcbcb;"></div>
<div style="left:708px;top:197px;width:142px;height:798px;background:#b0b0b0;"></div>
<div style="left:993px;top:197px;width:142px;height:798px;background:#b0b0b0;"></div>
<div style="left:1277px;top:197px;width:142px;height:798px;background:#b0b0b0;"></div>
<div style="left:1561px;top:197px;width:143px;height:798px;background:#b0b0b0;"></div>
<div style="left:1419px;top:197px;width:285px;height:798px;background:rgba(224,150,150,.28);"></div>
<div style="left:567px;top:225px;width:1205px;height:1px;background:#3c3c3c;"></div>
<div style="left:567px;top:328px;width:1205px;height:1px;background:#3c3c3c;"></div>
<div style="left:567px;top:431px;width:1205px;height:1px;background:#3c3c3c;"></div>
<div style="left:567px;top:534px;width:1205px;height:1px;background:#3c3c3c;"></div>
<div style="left:567px;top:637px;width:1205px;height:1px;background:#3c3c3c;"></div>
<div style="left:567px;top:740px;width:1205px;height:1px;background:#3c3c3c;"></div>
<div style="left:567px;top:843px;width:1205px;height:1px;background:#3c3c3c;"></div>
<div style="left:567px;top:946px;width:1205px;height:1px;background:#3c3c3c;"></div>
<div style="left:567px;top:902px;width:1205px;height:1px;background:#aaaaaa;"></div>
<div style="left:567px;top:741px;width:283px;height:100px;background:none;overflow:hidden;"><div style="left:0px;top:17px;width:284px;height:80px;background:linear-gradient(#3d9191,#358585);"></div><div style="left:0px;top:16px;width:284px;height:1px;background:#a8b4b4;"></div><div style="left:0px;top:88.5px;width:282px;height:2px;background:#263c3e;"></div><div style="left:0px;top:90.5px;width:284px;height:8px;background:linear-gradient(#327e7e,#2c7070);"></div><div style="left:0px;top:98.5px;width:284px;height:1.5px;background:#9aa4a4;"></div><svg style="left:0;top:91px" width="9" height="8"><path d="M0 0l8 7.500h-8z" fill="#9ab4b4"/></svg><div style="left:0px;top:22px;width:4px;height:2px;background:#1f3a3c;"></div><div style="left:35px;top:30px;width:5px;height:2px;background:#1f3a3c;"></div><div style="left:70px;top:40px;width:6px;height:2px;background:#1f3a3c;"></div><div style="left:123px;top:54px;width:6px;height:2px;background:#1f3a3c;"></div><div style="left:128px;top:56px;width:5px;height:2px;background:#1f3a3c;"></div><div style="left:132px;top:60px;width:6px;height:2px;background:#1f3a3c;"></div><div style="left:3px;top:1.5px;width:13px;height:13px;background:#8a8686;border-radius:50%;border:1.500px solid #4a4646;"></div><div style="left:9px;top:3px;width:1.5px;height:5px;background:#4a4646;"></div><svg style="left:0;top:0" width="125" height="16"><g><rect x="20" y="2" width="11" height="12" fill="rgba(255,255,255,.22)"/><path d="M23 8v-2a2.500 2.500 0 0 1 5 0v2" fill="none" stroke="rgba(85,85,85,.6)" stroke-width="1.200"/><rect x="22" y="8" width="7" height="4.500" fill="rgba(85,85,85,.6)"/><rect x="33" y="2" width="13" height="12" fill="rgba(255,255,255,.22)"/><text x="39.500" y="12" font-family="Liberation Sans,sans-serif" font-size="10.500" fill="rgba(85,85,85,.6)" text-anchor="middle">M</text><rect x="48" y="2" width="13" height="12" fill="rgba(255,255,255,.22)"/><ellipse cx="54.500" cy="7.500" rx="4.500" ry="3" fill="rgba(85,85,85,.6)"/><path d="M51 9v3l3-2z" fill="rgba(85,85,85,.6)"/><rect x="78" y="2" width="10" height="12" fill="rgba(255,255,255,.22)"/><text x="83" y="12" font-family="Liberation Mono,monospace" font-size="10" fill="rgba(85,85,85,.6)" text-anchor="middle">i</text><rect x="92" y="2" width="14" height="12" fill="rgba(255,255,255,.22)"/><text x="99" y="12" font-family="Liberation Sans,sans-serif" font-size="9.500" fill="rgba(85,85,85,.6)" text-anchor="middle">FX</text><rect x="107" y="2" width="14" height="12" fill="rgba(255,255,255,.22)"/><path d="M109.500 10.500l4.500-5l4.500 3.500" fill="none" stroke="rgba(85,85,85,.6)" stroke-width="1.400"/><rect x="108" y="9" width="3" height="3" fill="rgba(85,85,85,.6)"/><rect x="112.500" y="4" width="3" height="3" fill="rgba(85,85,85,.6)"/></g><rect x="64.500" y="2.500" width="11" height="11" fill="#fff" stroke="#111"/><rect x="66" y="6" width="6" height="6" fill="#000"/><rect x="69" y="4" width="5" height="5" fill="none" stroke="#000" stroke-width="1"/></svg><div style="left:123px;top:1px;width:88px;height:15px;background:rgba(150,150,150,.35);"></div><div style="left:125px;top:2px;font:bold 12.8px/15px 'Liberation Serif',serif;color:#1a4190;white-space:nowrap;letter-spacing:.5px;">Riffendium 2</div></div>
<div style="left:851px;top:741px;width:284px;height:100px;background:none;overflow:hidden;"><div style="left:0px;top:17px;width:285px;height:80px;background:linear-gradient(#3d9191,#358585);"></div><div style="left:0px;top:16px;width:285px;height:1px;background:#a8b4b4;"></div><div style="left:0px;top:88.5px;width:283px;height:2px;background:#263c3e;"></div><div style="left:0px;top:90.5px;width:285px;height:8px;background:linear-gradient(#327e7e,#2c7070);"></div><div style="left:0px;top:98.5px;width:285px;height:1.5px;background:#9aa4a4;"></div><svg style="left:0;top:91px" width="9" height="8"><path d="M0 0l8 7.500h-8z" fill="#9ab4b4"/></svg><div style="left:0px;top:22px;width:4px;height:2px;background:#1f3a3c;"></div><div style="left:35px;top:30px;width:5px;height:2px;background:#1f3a3c;"></div><div style="left:70px;top:40px;width:6px;height:2px;background:#1f3a3c;"></div><div style="left:123px;top:54px;width:6px;height:2px;background:#1f3a3c;"></div><div style="left:128px;top:56px;width:5px;height:2px;background:#1f3a3c;"></div><div style="left:132px;top:60px;width:6px;height:2px;background:#1f3a3c;"></div><div style="left:3px;top:1.5px;width:13px;height:13px;background:#8a8686;border-radius:50%;border:1.500px solid #4a4646;"></div><div style="left:9px;top:3px;width:1.5px;height:5px;background:#4a4646;"></div><svg style="left:0;top:0" width="125" height="16"><g><rect x="20" y="2" width="11" height="12" fill="rgba(255,255,255,.22)"/><path d="M23 8v-2a2.500 2.500 0 0 1 5 0v2" fill="none" stroke="rgba(85,85,85,.6)" stroke-width="1.200"/><rect x="22" y="8" width="7" height="4.500" fill="rgba(85,85,85,.6)"/><rect x="33" y="2" width="13" height="12" fill="rgba(255,255,255,.22)"/><text x="39.500" y="12" font-family="Liberation Sans,sans-serif" font-size="10.500" fill="rgba(85,85,85,.6)" text-anchor="middle">M</text><rect x="48" y="2" width="13" height="12" fill="rgba(255,255,255,.22)"/><ellipse cx="54.500" cy="7.500" rx="4.500" ry="3" fill="rgba(85,85,85,.6)"/><path d="M51 9v3l3-2z" fill="rgba(85,85,85,.6)"/><rect x="78" y="2" width="10" height="12" fill="rgba(255,255,255,.22)"/><text x="83" y="12" font-family="Liberation Mono,monospace" font-size="10" fill="rgba(85,85,85,.6)" text-anchor="middle">i</text><rect x="92" y="2" width="14" height="12" fill="rgba(255,255,255,.22)"/><text x="99" y="12" font-family="Liberation Sans,sans-serif" font-size="9.500" fill="rgba(85,85,85,.6)" text-anchor="middle">FX</text><rect x="107" y="2" width="14" height="12" fill="rgba(255,255,255,.22)"/><path d="M109.500 10.500l4.500-5l4.500 3.500" fill="none" stroke="rgba(85,85,85,.6)" stroke-width="1.400"/><rect x="108" y="9" width="3" height="3" fill="rgba(85,85,85,.6)"/><rect x="112.500" y="4" width="3" height="3" fill="rgba(85,85,85,.6)"/></g><rect x="64.500" y="2.500" width="11" height="11" fill="#fff" stroke="#111"/><rect x="66" y="6" width="6" height="6" fill="#000"/><rect x="69" y="4" width="5" height="5" fill="none" stroke="#000" stroke-width="1"/></svg><div style="left:123px;top:1px;width:88px;height:15px;background:rgba(150,150,150,.35);"></div><div style="left:125px;top:2px;font:bold 12.8px/15px 'Liberation Serif',serif;color:#1a4190;white-space:nowrap;letter-spacing:.5px;">Riffendium 2</div></div>
<div style="left:1136px;top:741px;width:283px;height:100px;background:none;overflow:hidden;"><div style="left:0px;top:17px;width:284px;height:80px;background:linear-gradient(#3d9191,#358585);"></div><div style="left:0px;top:16px;width:284px;height:1px;background:#a8b4b4;"></div><div style="left:0px;top:88.5px;width:282px;height:2px;background:#263c3e;"></div><div style="left:0px;top:90.5px;width:284px;height:8px;background:linear-gradient(#327e7e,#2c7070);"></div><div style="left:0px;top:98.5px;width:284px;height:1.5px;background:#9aa4a4;"></div><svg style="left:0;top:91px" width="9" height="8"><path d="M0 0l8 7.500h-8z" fill="#9ab4b4"/></svg><div style="left:0px;top:22px;width:4px;height:2px;background:#1f3a3c;"></div><div style="left:35px;top:30px;width:5px;height:2px;background:#1f3a3c;"></div><div style="left:70px;top:40px;width:6px;height:2px;background:#1f3a3c;"></div><div style="left:123px;top:54px;width:6px;height:2px;background:#1f3a3c;"></div><div style="left:128px;top:56px;width:5px;height:2px;background:#1f3a3c;"></div><div style="left:132px;top:60px;width:6px;height:2px;background:#1f3a3c;"></div><div style="left:3px;top:1.5px;width:13px;height:13px;background:#8a8686;border-radius:50%;border:1.500px solid #4a4646;"></div><div style="left:9px;top:3px;width:1.5px;height:5px;background:#4a4646;"></div><svg style="left:0;top:0" width="125" height="16"><g><rect x="20" y="2" width="11" height="12" fill="rgba(255,255,255,.22)"/><path d="M23 8v-2a2.500 2.500 0 0 1 5 0v2" fill="none" stroke="rgba(85,85,85,.6)" stroke-width="1.200"/><rect x="22" y="8" width="7" height="4.500" fill="rgba(85,85,85,.6)"/><rect x="33" y="2" width="13" height="12" fill="rgba(255,255,255,.22)"/><text x="39.500" y="12" font-family="Liberation Sans,sans-serif" font-size="10.500" fill="rgba(85,85,85,.6)" text-anchor="middle">M</text><rect x="48" y="2" width="13" height="12" fill="rgba(255,255,255,.22)"/><ellipse cx="54.500" cy="7.500" rx="4.500" ry="3" fill="rgba(85,85,85,.6)"/><path d="M51 9v3l3-2z" fill="rgba(85,85,85,.6)"/><rect x="78" y="2" width="10" height="12" fill="rgba(255,255,255,.22)"/><text x="83" y="12" font-family="Liberation Mono,monospace" font-size="10" fill="rgba(85,85,85,.6)" text-anchor="middle">i</text><rect x="92" y="2" width="14" height="12" fill="rgba(255,255,255,.22)"/><text x="99" y="12" font-family="Liberation Sans,sans-serif" font-size="9.500" fill="rgba(85,85,85,.6)" text-anchor="middle">FX</text><rect x="107" y="2" width="14" height="12" fill="rgba(255,255,255,.22)"/><path d="M109.500 10.500l4.500-5l4.500 3.500" fill="none" stroke="rgba(85,85,85,.6)" stroke-width="1.400"/><rect x="108" y="9" width="3" height="3" fill="rgba(85,85,85,.6)"/><rect x="112.500" y="4" width="3" height="3" fill="rgba(85,85,85,.6)"/></g><rect x="64.500" y="2.500" width="11" height="11" fill="#fff" stroke="#111"/><rect x="66" y="6" width="6" height="6" fill="#000"/><rect x="69" y="4" width="5" height="5" fill="none" stroke="#000" stroke-width="1"/></svg><div style="left:123px;top:1px;width:88px;height:15px;background:rgba(150,150,150,.35);"></div><div style="left:125px;top:2px;font:bold 12.8px/15px 'Liberation Serif',serif;color:#1a4190;white-space:nowrap;letter-spacing:.5px;">Riffendium 2</div></div>
<div style="left:1420px;top:741px;width:284px;height:100px;background:none;overflow:hidden;"><div style="left:0px;top:17px;width:285px;height:80px;background:linear-gradient(#3d9191,#358585);"></div><div style="left:0px;top:16px;width:285px;height:1px;background:#a8b4b4;"></div><div style="left:0px;top:88.5px;width:283px;height:2px;background:#263c3e;"></div><div style="left:0px;top:90.5px;width:285px;height:8px;background:linear-gradient(#327e7e,#2c7070);"></div><div style="left:0px;top:98.5px;width:285px;height:1.5px;background:#9aa4a4;"></div><svg style="left:0;top:91px" width="9" height="8"><path d="M0 0l8 7.500h-8z" fill="#9ab4b4"/></svg><div style="left:0px;top:22px;width:4px;height:2px;background:#1f3a3c;"></div><div style="left:35px;top:30px;width:5px;height:2px;background:#1f3a3c;"></div><div style="left:70px;top:40px;width:6px;height:2px;background:#1f3a3c;"></div><div style="left:123px;top:54px;width:6px;height:2px;background:#1f3a3c;"></div><div style="left:128px;top:56px;width:5px;height:2px;background:#1f3a3c;"></div><div style="left:132px;top:60px;width:6px;height:2px;background:#1f3a3c;"></div><div style="left:3px;top:1.5px;width:13px;height:13px;background:#8a8686;border-radius:50%;border:1.500px solid #4a4646;"></div><div style="left:9px;top:3px;width:1.5px;height:5px;background:#4a4646;"></div><svg style="left:0;top:0" width="125" height="16"><g><rect x="20" y="2" width="11" height="12" fill="rgba(255,255,255,.22)"/><path d="M23 8v-2a2.500 2.500 0 0 1 5 0v2" fill="none" stroke="rgba(85,85,85,.6)" stroke-width="1.200"/><rect x="22" y="8" width="7" height="4.500" fill="rgba(85,85,85,.6)"/><rect x="33" y="2" width="13" height="12" fill="rgba(255,255,255,.22)"/><text x="39.500" y="12" font-family="Liberation Sans,sans-serif" font-size="10.500" fill="rgba(85,85,85,.6)" text-anchor="middle">M</text><rect x="48" y="2" width="13" height="12" fill="rgba(255,255,255,.22)"/><ellipse cx="54.500" cy="7.500" rx="4.500" ry="3" fill="rgba(85,85,85,.6)"/><path d="M51 9v3l3-2z" fill="rgba(85,85,85,.6)"/><rect x="78" y="2" width="10" height="12" fill="rgba(255,255,255,.22)"/><text x="83" y="12" font-family="Liberation Mono,monospace" font-size="10" fill="rgba(85,85,85,.6)" text-anchor="middle">i</text><rect x="92" y="2" width="14" height="12" fill="rgba(255,255,255,.22)"/><text x="99" y="12" font-family="Liberation Sans,sans-serif" font-size="9.500" fill="rgba(85,85,85,.6)" text-anchor="middle">FX</text><rect x="107" y="2" width="14" height="12" fill="rgba(255,255,255,.22)"/><path d="M109.500 10.500l4.500-5l4.500 3.500" fill="none" stroke="rgba(85,85,85,.6)" stroke-width="1.400"/><rect x="108" y="9" width="3" height="3" fill="rgba(85,85,85,.6)"/><rect x="112.500" y="4" width="3" height="3" fill="rgba(85,85,85,.6)"/></g><rect x="64.500" y="2.500" width="11" height="11" fill="#fff" stroke="#111"/><rect x="66" y="6" width="6" height="6" fill="#000"/><rect x="69" y="4" width="5" height="5" fill="none" stroke="#000" stroke-width="1"/></svg><div style="left:123px;top:1px;width:88px;height:15px;background:rgba(150,150,150,.35);"></div><div style="left:125px;top:2px;font:bold 12.8px/15px 'Liberation Serif',serif;color:#1a4190;white-space:nowrap;letter-spacing:.5px;">Riffendium 2</div></div>
<svg style="left:0;top:0" width="1919" height="1017"><path d="M584.5 197v798" stroke="rgba(0,0,0,.36)" stroke-dasharray="1 1"/><path d="M601.5 197v798" stroke="rgba(0,0,0,.36)" stroke-dasharray="1 1"/><path d="M619.5 197v798" stroke="rgba(0,0,0,.36)" stroke-dasharray="1 1"/><path d="M637.5 197v798" stroke="rgba(0,0,0,.82)" stroke-dasharray="1 1"/><path d="M655.5 197v798" stroke="rgba(0,0,0,.36)" stroke-dasharray="1 1"/><path d="M673.5 197v798" stroke="rgba(0,0,0,.36)" stroke-dasharray="1 1"/><path d="M690.5 197v798" stroke="rgba(0,0,0,.36)" stroke-dasharray="1 1"/><path d="M708.5 197v798" stroke="rgba(0,0,0,.82)" stroke-dasharray="1 1"/><path d="M726.5 197v798" stroke="rgba(0,0,0,.36)" stroke-dasharray="1 1"/><path d="M744.5 197v798" stroke="rgba(0,0,0,.36)" stroke-dasharray="1 1"/><path d="M761.5 197v798" stroke="rgba(0,0,0,.36)" stroke-dasharray="1 1"/><path d="M779.5 197v798" stroke="rgba(0,0,0,.82)" stroke-dasharray="1 1"/><path d="M797.5 197v798" stroke="rgba(0,0,0,.36)" stroke-dasharray="1 1"/><path d="M815.5 197v798" stroke="rgba(0,0,0,.36)" stroke-dasharray="1 1"/><path d="M833.5 197v798" stroke="rgba(0,0,0,.36)" stroke-dasharray="1 1"/><path d="M850.5 197v798" stroke="rgba(0,0,0,.82)" stroke-dasharray="1 1"/><path d="M868.5 197v798" stroke="rgba(0,0,0,.36)" stroke-dasharray="1 1"/><path d="M886.5 197v798" stroke="rgba(0,0,0,.36)" stroke-dasharray="1 1"/><path d="M904.5 197v798" stroke="rgba(0,0,0,.36)" stroke-dasharray="1 1"/><path d="M921.5 197v798" stroke="rgba(0,0,0,.82)" stroke-dasharray="1 1"/><path d="M939.5 197v798" stroke="rgba(0,0,0,.36)" stroke-dasharray="1 1"/><path d="M957.5 197v798" stroke="rgba(0,0,0,.36)" stroke-dasharray="1 1"/><path d="M975.5 197v798" stroke="rgba(0,0,0,.36)" stroke-dasharray="1 1"/><path d="M993.5 197v798" stroke="rgba(0,0,0,.82)" stroke-dasharray="1 1"/><path d="M1010.5 197v798" stroke="rgba(0,0,0,.36)" stroke-dasharray="1 1"/><path d="M1028.5 197v798" stroke="rgba(0,0,0,.36)" stroke-dasharray="1 1"/><path d="M1046.5 197v798" stroke="rgba(0,0,0,.36)" stroke-dasharray="1 1"/><path d="M1064.5 197v798" stroke="rgba(0,0,0,.82)" stroke-dasharray="1 1"/><path d="M1081.5 197v798" stroke="rgba(0,0,0,.36)" stroke-dasharray="1 1"/><path d="M1099.5 197v798" stroke="rgba(0,0,0,.36)" stroke-dasharray="1 1"/><path d="M1117.5 197v798" stroke="rgba(0,0,0,.36)" stroke-dasharray="1 1"/><path d="M1135.5 197v798" stroke="rgba(0,0,0,.82)" stroke-dasharray="1 1"/><path d="M1152.5 197v798" stroke="rgba(0,0,0,.36)" stroke-dasharray="1 1"/><path d="M1170.5 197v798" stroke="rgba(0,0,0,.36)" stroke-dasharray="1 1"/><path d="M1188.5 197v798" stroke="rgba(0,0,0,.36)" stroke-dasharray="1 1"/><path d="M1206.5 197v798" stroke="rgba(0,0,0,.82)" stroke-dasharray="1 1"/><path d="M1224.5 197v798" stroke="rgba(0,0,0,.36)" stroke-dasharray="1 1"/><path d="M1241.5 197v798" stroke="rgba(0,0,0,.36)" stroke-dasharray="1 1"/><path d="M1259.5 197v798" stroke="rgba(0,0,0,.36)" stroke-dasharray="1 1"/><path d="M1277.5 197v798" stroke="rgba(0,0,0,.82)" stroke-dasharray="1 1"/><path d="M1295.5 197v798" stroke="rgba(0,0,0,.36)" stroke-dasharray="1 1"/><path d="M1312.5 197v798" stroke="rgba(0,0,0,.36)" stroke-dasharray="1 1"/><path d="M1330.5 197v798" stroke="rgba(0,0,0,.36)" stroke-dasharray="1 1"/><path d="M1348.5 197v798" stroke="rgba(0,0,0,.82)" stroke-dasharray="1 1"/><path d="M1366.5 197v798" stroke="rgba(0,0,0,.36)" stroke-dasharray="1 1"/><path d="M1384.5 197v798" stroke="rgba(0,0,0,.36)" stroke-dasharray="1 1"/><path d="M1401.5 197v798" stroke="rgba(0,0,0,.36)" stroke-dasharray="1 1"/><path d="M1419.5 197v798" stroke="rgba(0,0,0,.82)" stroke-dasharray="1 1"/><path d="M1437.5 197v798" stroke="rgba(0,0,0,.36)" stroke-dasharray="1 1"/><path d="M1455.5 197v798" stroke="rgba(0,0,0,.36)" stroke-dasharray="1 1"/><path d="M1472.5 197v798" stroke="rgba(0,0,0,.36)" stroke-dasharray="1 1"/><path d="M1490.5 197v798" stroke="rgba(0,0,0,.82)" stroke-dasharray="1 1"/><path d="M1508.5 197v798" stroke="rgba(0,0,0,.36)" stroke-dasharray="1 1"/><path d="M1526.5 197v798" stroke="rgba(0,0,0,.36)" stroke-dasharray="1 1"/><path d="M1544.5 197v798" stroke="rgba(0,0,0,.36)" stroke-dasharray="1 1"/><path d="M1561.5 197v798" stroke="rgba(0,0,0,.82)" stroke-dasharray="1 1"/><path d="M1579.5 197v798" stroke="rgba(0,0,0,.36)" stroke-dasharray="1 1"/><path d="M1597.5 197v798" stroke="rgba(0,0,0,.36)" stroke-dasharray="1 1"/><path d="M1615.5 197v798" stroke="rgba(0,0,0,.36)" stroke-dasharray="1 1"/><path d="M1632.5 197v798" stroke="rgba(0,0,0,.82)" stroke-dasharray="1 1"/><path d="M1650.5 197v798" stroke="rgba(0,0,0,.36)" stroke-dasharray="1 1"/><path d="M1668.5 197v798" stroke="rgba(0,0,0,.36)" stroke-dasharray="1 1"/><path d="M1686.5 197v798" stroke="rgba(0,0,0,.36)" stroke-dasharray="1 1"/><path d="M1704.5 197v798" stroke="rgba(0,0,0,.82)" stroke-dasharray="1 1"/><path d="M1721.5 197v798" stroke="rgba(0,0,0,.36)" stroke-dasharray="1 1"/><path d="M1739.5 197v798" stroke="rgba(0,0,0,.36)" stroke-dasharray="1 1"/><path d="M1757.5 197v798" stroke="rgba(0,0,0,.36)" stroke-dasharray="1 1"/></svg>
<div style="left:850px;top:197px;width:1px;height:799px;background:#c8c800;"></div>
<div style="left:1135px;top:197px;width:1px;height:799px;background:#c00000;"></div>
<div style="left:1420px;top:758px;width:284px;height:82px;background:rgba(125,85,85,.25);"></div>
<div style="left:1419px;top:197px;width:1px;height:799px;background:#c80000;"></div>
<div style="left:1704px;top:197px;width:1px;height:799px;background:#c80000;"></div>
<div style="left:566px;top:168px;width:1px;height:828px;background:#cc0000;"></div>
<svg style="left:687px;top:527px" width="9" height="18"><path d="M1 1.500h2.500M5.500 1.500h2.500M1 16.500h2.500M5.500 16.500h2.500M4.500 2v14" stroke="#333" stroke-width="1" fill="none"/></svg>
<div style="left:1772px;top:197px;width:23px;height:799px;background:#333;"></div>
<div style="left:1789px;top:131px;width:6px;height:66px;background:#333;"></div>
<div style="left:1795px;top:93px;width:3px;height:920px;background:#2b2b2b;"></div>
<div style="left:1774.5px;top:199.5px;width:12px;height:12px;background:#111;border-radius:50%;"></div><svg style="left:1772.5px;top:197.5px" width="16" height="16"><path d="M5 9.800h6l-3-4.300z" fill="#d0d0d0"/></svg>
<div style="left:1776px;top:557px;width:10px;height:28px;background:#555;border-radius:4px;border:1px solid #666;"></div>
<div style="left:1778px;top:570px;width:6px;height:2px;background:#aaa;"></div>
<div style="left:1774.5px;top:943px;width:12px;height:12px;background:#111;border-radius:50%;"></div><svg style="left:1772.5px;top:941px" width="16" height="16"><path d="M5 6.200h6l-3 4.300z" fill="#d0d0d0"/></svg>
<div style="left:1773px;top:956px;font:bold 17px/20px 'Liberation Sans',sans-serif;color:#c8c8c8;white-space:nowrap;width:16px;text-align:center;">+</div>
<div style="left:1776px;top:977px;width:10px;height:1px;background:#555;"></div>
<div style="left:1776px;top:986px;width:10px;height:3px;background:#999;"></div>
<div style="left:559px;top:995px;width:1236px;height:18px;background:#333;"></div>
<div style="left:559px;top:1013px;width:1236px;height:4px;background:#2b2b2b;"></div>
<div style="left:1323px;top:1014px;width:48px;height:3px;background:#585858;"></div>
<div style="left:568px;top:997px;width:12px;height:12px;background:#111;border-radius:50%;"></div><svg style="left:566px;top:995px" width="16" height="16"><path d="M9.800 5v6l-4.300-3z" fill="#d0d0d0"/></svg>
<div style="left:585px;top:997px;width:61px;height:12px;background:#424242;border-radius:6px;border:1px solid #4c4c4c;"></div>
<div style="left:589px;top:1000.5px;width:5px;height:5px;background:#1c1c1c;border-radius:50%;"></div>
<div style="left:637px;top:1000.5px;width:5px;height:5px;background:#1c1c1c;border-radius:50%;"></div>
<div style="left:615px;top:999px;width:1px;height:8px;background:#1c1c1c;"></div>
<div style="left:1719px;top:997px;width:12px;height:12px;background:#111;border-radius:50%;"></div><svg style="left:1717px;top:995px" width="16" height="16"><path d="M6.200 5v6l4.300-3z" fill="#d0d0d0"/></svg>
<div style="left:1734px;top:993px;font:bold 17px/20px 'Liberation Sans',sans-serif;color:#c8c8c8;white-space:nowrap;width:16px;text-align:center;">+</div>
<div style="left:1752px;top:998px;width:1px;height:10px;background:#555;"></div>
<div style="left:1757px;top:1001px;width:10px;height:3px;background:#999;"></div>
<div style="left:91px;top:193px;width:475px;height:803px;background:#2d2d2d;"></div>
<div style="left:92px;top:196px;width:474px;height:800px;background:#333;border-radius:3px 0 0 0;"></div>
<div style="left:502px;top:197px;width:56px;height:799px;background:#262626;"></div>
<div style="left:114px;top:197px;width:16px;height:28px;background:#389c9c;"></div>
<div style="left:134px;top:197px;width:368px;height:28px;background:#389c9c;"></div>
<svg style="left:118px;top:213px" width="9" height="8"><path d="M0 8v-7h3l2 2h4v5z" fill="#2a8080"/></svg>
<div style="left:504px;top:205.5px;font:normal 10.2px/12px 'Liberation Sans',sans-serif;color:#7d7d7d;white-space:nowrap;width:28px;text-align:center;letter-spacing:-.25px;">-54-</div>
<div style="left:504px;top:189px;font:normal 9.5px/12px 'Liberation Sans',sans-serif;color:#7d7d7d;white-space:nowrap;width:28px;text-align:center;clip-path:inset(8px 0 0 0);">-42-</div>
<div style="left:536px;top:204px;width:16px;height:16px;background:radial-gradient(circle at 50% 30%,#3c3c3c,#262626);border-radius:50%;box-shadow:0 1px 1px #111;"></div><svg style="left:536px;top:204px" width="16" height="16"><circle cx="8" cy="8" r="3.600" fill="none" stroke="#9a9a9a" stroke-width="1.200"/><path d="M4.500 12l7-8" stroke="#9a9a9a" stroke-width="1.200"/></svg>
<div style="left:114px;top:225px;width:16px;height:1px;background:#1f5c5c;"></div>
<div style="left:134px;top:225px;width:368px;height:1px;background:#1f5c5c;"></div>
<div style="left:114px;top:226px;width:16px;height:102px;background:#389c9c;"></div>
<div style="left:112px;top:270px;font:normal 11px/14px 'Liberation Sans',sans-serif;color:#b0ffff;white-space:nowrap;width:20px;text-align:center;letter-spacing:-.3px;">144</div>
<svg style="left:118px;top:316px" width="9" height="8"><path d="M0 8v-7h3l2 2h4v5z" fill="#2a8080"/></svg>
<div style="left:134px;top:226px;width:368px;height:102px;background:#389c9c;"></div><div style="left:140px;top:232px;width:196px;height:22px;background:#252525;border-radius:11px;"></div><div style="left:141px;top:233px;width:20px;height:20px;background:#1e1e1e;border-radius:50%;"></div><div style="left:141px;top:235px;font:bold 14px/16px 'Liberation Sans',sans-serif;color:#4c4c4c;white-space:nowrap;width:20px;text-align:center;">A</div><svg style="left:162px;top:236px" width="14" height="14" viewBox="0 0 14 14"><path d="M1 4.500h3l4.500-3.500v12l-4.500-3.500h-3z" fill="#e04838"/><rect x="10" y="3.500" width="1.400" height="7" fill="#e04838"/></svg><div style="left:180px;top:233px;font:bold 15.3px/19px 'Liberation Serif',serif;color:#3cb8b4;white-space:nowrap;letter-spacing:.45px;">Elysion</div><div style="left:317px;top:235px;width:16px;height:16px;background:radial-gradient(circle at 50% 35%,#d4d0cc,#a09c98);border-radius:50%;"></div><svg style="left:317px;top:235px" width="16" height="16"><circle cx="8.300" cy="8.500" r="3.400" fill="#252525"/><path d="M8 8L4.500 2.500" stroke="#252525" stroke-width="2"/></svg><div style="left:342.5px;top:234.5px;width:5.5px;height:4.5px;background:#3fd03f;border-radius:1px;"></div><div style="left:342.5px;top:240.8px;width:5.5px;height:4.5px;background:#1e90ff;border-radius:1px;"></div><div style="left:342.5px;top:247.1px;width:5.5px;height:4.5px;background:#2a7a7a;border-radius:1px;"></div><div style="left:350.5px;top:233.5px;width:24.5px;height:19px;background:linear-gradient(#cfcaca,#8e8e8e);border:1px solid #7a8484;border-radius:3px;box-shadow:inset 0 1px 0 #e8e4e4;"></div><div style="left:350.5px;top:235.5px;font:bold 12px/15px 'Liberation Sans',sans-serif;color:#6e6e6e;white-space:nowrap;width:24.5px;text-align:center;letter-spacing:.6px;text-indent:.6px;">IO</div><div style="left:383.5px;top:233px;width:36px;height:20px;background:linear-gradient(#48a6a6,#2f9090);border:1px solid #2a7474;border-radius:3px;box-shadow:inset 0 0 0 1px rgba(255,255,255,.22);"></div><div style="left:388.5px;top:234.5px;font:bold 12.3px/17px 'Liberation Sans',sans-serif;color:#2a4a4a;white-space:nowrap;letter-spacing:.3px;">FX</div><div style="left:409.5px;top:237.5px;width:5.5px;height:11.5px;background:rgba(255,255,255,.08);border:1px solid #2a7474;border-radius:2px;"></div><svg style="left:426.5px;top:236px;opacity:1" width="38" height="14" viewBox="0 0 38 14"><path d="M2.500 9.500l7.500-5l7.500 5.500" fill="none" stroke="#8cc6c4" stroke-width="1.300"/><circle cx="2.800" cy="9.500" r="2.300" fill="#8cc6c4"/><circle cx="10" cy="4.300" r="2.300" fill="#8cc6c4"/><circle cx="17.300" cy="10" r="2.300" fill="#8cc6c4"/><text x="21" y="12" font-family="Liberation Sans,sans-serif" font-weight="bold" font-size="12" fill="#8cc6c4" stroke="#8cc6c4" stroke-width=".3">TR</text></svg><div style="left:475.0px;top:233.5px;width:20px;height:20px;background:radial-gradient(circle at 50% 40%,#2a7a7a,#236a6a);border-radius:50%;box-shadow:0 1px 1px rgba(0,0,0,.25);"></div><div style="left:481.0px;top:240px;width:8px;height:8px;background:radial-gradient(circle at 50% 30%,#dcdcdc,#8a9a9a);border-radius:50%;"></div><div style="left:483.5px;top:235.5px;width:3px;height:3px;background:#c8b8b8;border-radius:50%;"></div><div style="left:140px;top:260px;width:39px;height:20px;background:linear-gradient(#2f8686,#297878);border:1px solid #2a7272;border-radius:3px;"></div><div style="left:145px;top:265px;font:normal 9px/11px 'Liberation Sans',sans-serif;color:#d0f0f0;white-space:nowrap;letter-spacing:1.600px;opacity:.85;">IN</div><svg style="left:165px;top:267px" width="9" height="7"><path d="M0.500 0.500h8l-4 6z" fill="#56a0a0"/></svg><div style="left:186px;top:260px;width:130px;height:20px;background:rgba(150,150,150,.55);border-radius:3px 10px 10px 3px;border:1px solid #9cc8c8;"></div><div style="left:186px;top:260px;width:29.5px;height:20px;background:linear-gradient(#2f8686,#297878);border:1px solid #2a7272;border-radius:3px 0 0 3px;"></div><div style="left:186px;top:264px;font:normal 9.5px/12px 'Liberation Sans',sans-serif;color:#d8f0f0;white-space:nowrap;width:29px;text-align:center;opacity:.9;letter-spacing:.5px;">FX</div><div style="left:215.5px;top:261px;width:80.5px;height:18px;background:none;overflow:hidden;"><div style="left:0px;top:1px;font:bold 12px/16px 'Liberation Serif',serif;color:#f6efe4;white-space:nowrap;transform:scaleX(.94);transform-origin:0 0;">MIDI: Keystatic</div></div><div style="left:299.5px;top:263px;width:13.5px;height:13.5px;background:rgba(225,235,235,.45);border-radius:50%;"></div><svg style="left:299.5px;top:263px" width="14" height="14"><path d="M3 4.500h7.500l-3.750 6z" fill="#4a9c9c"/></svg><div style="left:140px;top:283px;width:40px;height:16px;background:none;overflow:hidden;"><div style="left:0.5px;top:0px;font:bold 12.2px/16px 'Liberation Serif',serif;color:#b0ffff;white-space:nowrap;letter-spacing:.45px;">-7.98dB</div></div><div style="left:334px;top:283px;font:bold 12.2px/16px 'Liberation Serif',serif;color:#b0ffff;white-space:nowrap;width:160px;text-align:right;letter-spacing:.4px;">center</div>
<div style="left:504px;top:228px;font:normal 10.2px/12px 'Liberation Sans',sans-serif;color:#7d7d7d;white-space:nowrap;width:28px;text-align:center;letter-spacing:-.25px;">-inf</div><div style="left:504px;top:240px;font:normal 10.2px/12px 'Liberation Sans',sans-serif;color:#7d7d7d;white-space:nowrap;width:28px;text-align:center;letter-spacing:-.25px;">-6-</div><div style="left:504px;top:257px;font:normal 10.2px/12px 'Liberation Sans',sans-serif;color:#7d7d7d;white-space:nowrap;width:28px;text-align:center;letter-spacing:-.25px;">-18-</div><div style="left:504px;top:274px;font:normal 10.2px/12px 'Liberation Sans',sans-serif;color:#7d7d7d;white-space:nowrap;width:28px;text-align:center;letter-spacing:-.25px;">-30-</div><div style="left:504px;top:292px;font:normal 10.2px/12px 'Liberation Sans',sans-serif;color:#7d7d7d;white-space:nowrap;width:28px;text-align:center;letter-spacing:-.25px;">-42-</div><div style="left:504px;top:309px;font:normal 10.2px/12px 'Liberation Sans',sans-serif;color:#7d7d7d;white-space:nowrap;width:28px;text-align:center;letter-spacing:-.25px;">-54-</div>
<div style="left:534px;top:229.5px;width:20px;height:19px;background:linear-gradient(#3e3e3e,#333);border:1px solid #1e1e1e;box-shadow:inset 0 1px 0 #505050;"></div><div style="left:534px;top:231.5px;font:bold 13px/15px 'Liberation Sans',sans-serif;color:#c8c8c8;white-space:nowrap;width:20px;text-align:center;">M</div>
<div style="left:534px;top:251.5px;width:20px;height:19px;background:linear-gradient(#3e3e3e,#333);border:1px solid #1e1e1e;box-shadow:inset 0 1px 0 #505050;"></div><div style="left:534px;top:253.5px;font:bold 13px/15px 'Liberation Sans',sans-serif;color:#c8c8c8;white-space:nowrap;width:20px;text-align:center;">S</div>
<div style="left:536px;top:307px;width:16px;height:16px;background:radial-gradient(circle at 50% 30%,#3c3c3c,#262626);border-radius:50%;box-shadow:0 1px 1px #111;"></div><svg style="left:536px;top:307px" width="16" height="16"><circle cx="8" cy="8" r="3.600" fill="none" stroke="#9a9a9a" stroke-width="1.200"/><path d="M4.500 12l7-8" stroke="#9a9a9a" stroke-width="1.200"/></svg>
<div style="left:114px;top:328px;width:16px;height:1px;background:#1f5c5c;"></div>
<div style="left:134px;top:328px;width:368px;height:1px;background:#1f5c5c;"></div>
<div style="left:114px;top:329px;width:16px;height:102px;background:#389c9c;"></div>
<div style="left:112px;top:373px;font:normal 11px/14px 'Liberation Sans',sans-serif;color:#b0ffff;white-space:nowrap;width:20px;text-align:center;letter-spacing:-.3px;">146</div>
<svg style="left:118px;top:419px" width="9" height="8"><path d="M0 8v-7h3l2 2h4v5z" fill="#2a8080"/></svg>
<div style="left:134px;top:329px;width:368px;height:102px;background:#389c9c;"></div><div style="left:140px;top:335px;width:196px;height:22px;background:#252525;border-radius:11px;"></div><div style="left:141px;top:336px;width:20px;height:20px;background:#1e1e1e;border-radius:50%;"></div><div style="left:141px;top:338px;font:bold 14px/16px 'Liberation Sans',sans-serif;color:#4c4c4c;white-space:nowrap;width:20px;text-align:center;">A</div><svg style="left:162px;top:339px" width="14" height="14" viewBox="0 0 14 14"><path d="M1 4.500h3l4.500-3.500v12l-4.500-3.500h-3z" fill="#e04838"/><rect x="10" y="3.500" width="1.400" height="7" fill="#e04838"/></svg><div style="left:180px;top:336px;font:bold 15.3px/19px 'Liberation Serif',serif;color:#3cb8b4;white-space:nowrap;letter-spacing:.45px;">Mongolian drums</div><div style="left:317px;top:338px;width:16px;height:16px;background:radial-gradient(circle at 50% 35%,#d4d0cc,#a09c98);border-radius:50%;"></div><svg style="left:317px;top:338px" width="16" height="16"><circle cx="8.300" cy="8.500" r="3.400" fill="#252525"/><path d="M8 8L4.500 2.500" stroke="#252525" stroke-width="2"/></svg><div style="left:342.5px;top:337.5px;width:5.5px;height:4.5px;background:#3fd03f;border-radius:1px;"></div><div style="left:342.5px;top:343.8px;width:5.5px;height:4.5px;background:#1e90ff;border-radius:1px;"></div><div style="left:342.5px;top:350.1px;width:5.5px;height:4.5px;background:#2a7a7a;border-radius:1px;"></div><div style="left:350.5px;top:336.5px;width:24.5px;height:19px;background:linear-gradient(#cfcaca,#8e8e8e);border:1px solid #7a8484;border-radius:3px;box-shadow:inset 0 1px 0 #e8e4e4;"></div><div style="left:350.5px;top:338.5px;font:bold 12px/15px 'Liberation Sans',sans-serif;color:#6e6e6e;white-space:nowrap;width:24.5px;text-align:center;letter-spacing:.6px;text-indent:.6px;">IO</div><div style="left:383.5px;top:336px;width:36px;height:20px;background:linear-gradient(#48a6a6,#2f9090);border:1px solid #2a7474;border-radius:3px;box-shadow:inset 0 0 0 1px rgba(255,255,255,.22);"></div><div style="left:388.5px;top:337.5px;font:bold 12.3px/17px 'Liberation Sans',sans-serif;color:#2a4a4a;white-space:nowrap;letter-spacing:.3px;">FX</div><div style="left:409.5px;top:340.5px;width:5.5px;height:11.5px;background:rgba(255,255,255,.08);border:1px solid #2a7474;border-radius:2px;"></div><svg style="left:426.5px;top:339px;opacity:1" width="38" height="14" viewBox="0 0 38 14"><path d="M2.500 9.500l7.500-5l7.500 5.500" fill="none" stroke="#8cc6c4" stroke-width="1.300"/><circle cx="2.800" cy="9.500" r="2.300" fill="#8cc6c4"/><circle cx="10" cy="4.300" r="2.300" fill="#8cc6c4"/><circle cx="17.300" cy="10" r="2.300" fill="#8cc6c4"/><text x="21" y="12" font-family="Liberation Sans,sans-serif" font-weight="bold" font-size="12" fill="#8cc6c4" stroke="#8cc6c4" stroke-width=".3">TR</text></svg><div style="left:475.0px;top:336.5px;width:20px;height:20px;background:radial-gradient(circle at 50% 40%,#2a7a7a,#236a6a);border-radius:50%;box-shadow:0 1px 1px rgba(0,0,0,.25);"></div><div style="left:481.0px;top:343px;width:8px;height:8px;background:radial-gradient(circle at 50% 30%,#dcdcdc,#8a9a9a);border-radius:50%;"></div><div style="left:483.5px;top:338.5px;width:3px;height:3px;background:#c8b8b8;border-radius:50%;"></div><div style="left:140px;top:363px;width:39px;height:20px;background:linear-gradient(#2f8686,#297878);border:1px solid #2a7272;border-radius:3px;"></div><div style="left:145px;top:368px;font:normal 9px/11px 'Liberation Sans',sans-serif;color:#d0f0f0;white-space:nowrap;letter-spacing:1.600px;opacity:.85;">IN</div><svg style="left:165px;top:370px" width="9" height="7"><path d="M0.500 0.500h8l-4 6z" fill="#56a0a0"/></svg><div style="left:186px;top:363px;width:130px;height:20px;background:rgba(150,150,150,.55);border-radius:3px 10px 10px 3px;border:1px solid #9cc8c8;"></div><div style="left:186px;top:363px;width:29.5px;height:20px;background:linear-gradient(#2f8686,#297878);border:1px solid #2a7272;border-radius:3px 0 0 3px;"></div><div style="left:186px;top:367px;font:normal 9.5px/12px 'Liberation Sans',sans-serif;color:#d8f0f0;white-space:nowrap;width:29px;text-align:center;opacity:.9;letter-spacing:.5px;">FX</div><div style="left:215.5px;top:364px;width:80.5px;height:18px;background:none;overflow:hidden;"><div style="left:0px;top:1px;font:bold 12px/16px 'Liberation Serif',serif;color:#f6efe4;white-space:nowrap;transform:scaleX(.94);transform-origin:0 0;">MIDI: Keystatic</div></div><div style="left:299.5px;top:366px;width:13.5px;height:13.5px;background:rgba(225,235,235,.45);border-radius:50%;"></div><svg style="left:299.5px;top:366px" width="14" height="14"><path d="M3 4.500h7.500l-3.750 6z" fill="#4a9c9c"/></svg><div style="left:140px;top:386px;width:40px;height:16px;background:none;overflow:hidden;"><div style="left:0.5px;top:0px;font:bold 12.2px/16px 'Liberation Serif',serif;color:#b0ffff;white-space:nowrap;letter-spacing:.45px;">-0.50dB</div></div><div style="left:334px;top:386px;font:bold 12.2px/16px 'Liberation Serif',serif;color:#b0ffff;white-space:nowrap;width:160px;text-align:right;letter-spacing:.4px;">center</div>
<div style="left:504px;top:331px;font:normal 10.2px/12px 'Liberation Sans',sans-serif;color:#7d7d7d;white-space:nowrap;width:28px;text-align:center;letter-spacing:-.25px;">-inf</div><div style="left:504px;top:343px;font:normal 10.2px/12px 'Liberation Sans',sans-serif;color:#7d7d7d;white-space:nowrap;width:28px;text-align:center;letter-spacing:-.25px;">-6-</div><div style="left:504px;top:360px;font:normal 10.2px/12px 'Liberation Sans',sans-serif;color:#7d7d7d;white-space:nowrap;width:28px;text-align:center;letter-spacing:-.25px;">-18-</div><div style="left:504px;top:377px;font:normal 10.2px/12px 'Liberation Sans',sans-serif;color:#7d7d7d;white-space:nowrap;width:28px;text-align:center;letter-spacing:-.25px;">-30-</div><div style="left:504px;top:395px;font:normal 10.2px/12px 'Liberation Sans',sans-serif;color:#7d7d7d;white-space:nowrap;width:28px;text-align:center;letter-spacing:-.25px;">-42-</div><div style="left:504px;top:412px;font:normal 10.2px/12px 'Liberation Sans',sans-serif;color:#7d7d7d;white-space:nowrap;width:28px;text-align:center;letter-spacing:-.25px;">-54-</div>
<div style="left:534px;top:332.5px;width:20px;height:19px;background:linear-gradient(#3e3e3e,#333);border:1px solid #1e1e1e;box-shadow:inset 0 1px 0 #505050;"></div><div style="left:534px;top:334.5px;font:bold 13px/15px 'Liberation Sans',sans-serif;color:#c8c8c8;white-space:nowrap;width:20px;text-align:center;">M</div>
<div style="left:534px;top:354.5px;width:20px;height:19px;background:linear-gradient(#3e3e3e,#333);border:1px solid #1e1e1e;box-shadow:inset 0 1px 0 #505050;"></div><div style="left:534px;top:356.5px;font:bold 13px/15px 'Liberation Sans',sans-serif;color:#c8c8c8;white-space:nowrap;width:20px;text-align:center;">S</div>
<div style="left:536px;top:410px;width:16px;height:16px;background:radial-gradient(circle at 50% 30%,#3c3c3c,#262626);border-radius:50%;box-shadow:0 1px 1px #111;"></div><svg style="left:536px;top:410px" width="16" height="16"><circle cx="8" cy="8" r="3.600" fill="none" stroke="#9a9a9a" stroke-width="1.200"/><path d="M4.500 12l7-8" stroke="#9a9a9a" stroke-width="1.200"/></svg>
<div style="left:114px;top:431px;width:16px;height:1px;background:#1f5c5c;"></div>
<div style="left:134px;top:431px;width:368px;height:1px;background:#1f5c5c;"></div>
<div style="left:114px;top:432px;width:16px;height:102px;background:#389c9c;"></div>
<div style="left:112px;top:476px;font:normal 11px/14px 'Liberation Sans',sans-serif;color:#b0ffff;white-space:nowrap;width:20px;text-align:center;letter-spacing:-.3px;">148</div>
<svg style="left:118px;top:522px" width="9" height="8"><path d="M0 8v-7h3l2 2h4v5z" fill="#2a8080"/></svg>
<div style="left:134px;top:432px;width:368px;height:102px;background:#389c9c;"></div><div style="left:140px;top:438px;width:196px;height:22px;background:#252525;border-radius:11px;"></div><div style="left:141px;top:439px;width:20px;height:20px;background:#1e1e1e;border-radius:50%;"></div><div style="left:141px;top:441px;font:bold 14px/16px 'Liberation Sans',sans-serif;color:#4c4c4c;white-space:nowrap;width:20px;text-align:center;">A</div><svg style="left:162px;top:442px" width="14" height="14" viewBox="0 0 14 14"><path d="M1 4.500h3l4.500-3.500v12l-4.500-3.500h-3z" fill="#e04838"/><rect x="10" y="3.500" width="1.400" height="7" fill="#e04838"/></svg><div style="left:180px;top:439px;font:bold 15.3px/19px 'Liberation Serif',serif;color:#3cb8b4;white-space:nowrap;letter-spacing:.45px;">Master Session</div><div style="left:317px;top:441px;width:16px;height:16px;background:radial-gradient(circle at 50% 35%,#d4d0cc,#a09c98);border-radius:50%;"></div><svg style="left:317px;top:441px" width="16" height="16"><circle cx="8.300" cy="8.500" r="3.400" fill="#252525"/><path d="M8 8L4.500 2.500" stroke="#252525" stroke-width="2"/></svg><div style="left:342.5px;top:440.5px;width:5.5px;height:4.5px;background:#3fd03f;border-radius:1px;"></div><div style="left:342.5px;top:446.8px;width:5.5px;height:4.5px;background:#1e90ff;border-radius:1px;"></div><div style="left:342.5px;top:453.1px;width:5.5px;height:4.5px;background:#2a7a7a;border-radius:1px;"></div><div style="left:350.5px;top:439.5px;width:24.5px;height:19px;background:linear-gradient(#cfcaca,#8e8e8e);border:1px solid #7a8484;border-radius:3px;box-shadow:inset 0 1px 0 #e8e4e4;"></div><div style="left:350.5px;top:441.5px;font:bold 12px/15px 'Liberation Sans',sans-serif;color:#6e6e6e;white-space:nowrap;width:24.5px;text-align:center;letter-spacing:.6px;text-indent:.6px;">IO</div><div style="left:383.5px;top:439px;width:36px;height:20px;background:linear-gradient(#48a6a6,#2f9090);border:1px solid #2a7474;border-radius:3px;box-shadow:inset 0 0 0 1px rgba(255,255,255,.22);"></div><div style="left:388.5px;top:440.5px;font:bold 12.3px/17px 'Liberation Sans',sans-serif;color:#2a4a4a;white-space:nowrap;letter-spacing:.3px;">FX</div><div style="left:409.5px;top:443.5px;width:5.5px;height:11.5px;background:rgba(255,255,255,.08);border:1px solid #2a7474;border-radius:2px;"></div><svg style="left:426.5px;top:442px;opacity:1" width="38" height="14" viewBox="0 0 38 14"><path d="M2.500 9.500l7.500-5l7.500 5.500" fill="none" stroke="#8cc6c4" stroke-width="1.300"/><circle cx="2.800" cy="9.500" r="2.300" fill="#8cc6c4"/><circle cx="10" cy="4.300" r="2.300" fill="#8cc6c4"/><circle cx="17.300" cy="10" r="2.300" fill="#8cc6c4"/><text x="21" y="12" font-family="Liberation Sans,sans-serif" font-weight="bold" font-size="12" fill="#8cc6c4" stroke="#8cc6c4" stroke-width=".3">TR</text></svg><div style="left:475.0px;top:439.5px;width:20px;height:20px;background:radial-gradient(circle at 50% 40%,#2a7a7a,#236a6a);border-radius:50%;box-shadow:0 1px 1px rgba(0,0,0,.25);"></div><div style="left:481.0px;top:446px;width:8px;height:8px;background:radial-gradient(circle at 50% 30%,#dcdcdc,#8a9a9a);border-radius:50%;"></div><div style="left:483.5px;top:441.5px;width:3px;height:3px;background:#c8b8b8;border-radius:50%;"></div><div style="left:140px;top:466px;width:39px;height:20px;background:linear-gradient(#2f8686,#297878);border:1px solid #2a7272;border-radius:3px;"></div><div style="left:145px;top:471px;font:normal 9px/11px 'Liberation Sans',sans-serif;color:#d0f0f0;white-space:nowrap;letter-spacing:1.600px;opacity:.85;">IN</div><svg style="left:165px;top:473px" width="9" height="7"><path d="M0.500 0.500h8l-4 6z" fill="#56a0a0"/></svg><div style="left:186px;top:466px;width:130px;height:20px;background:rgba(150,150,150,.55);border-radius:3px 10px 10px 3px;border:1px solid #9cc8c8;"></div><div style="left:186px;top:466px;width:29.5px;height:20px;background:linear-gradient(#2f8686,#297878);border:1px solid #2a7272;border-radius:3px 0 0 3px;"></div><div style="left:186px;top:470px;font:normal 9.5px/12px 'Liberation Sans',sans-serif;color:#d8f0f0;white-space:nowrap;width:29px;text-align:center;opacity:.9;letter-spacing:.5px;">FX</div><div style="left:215.5px;top:467px;width:80.5px;height:18px;background:none;overflow:hidden;"><div style="left:0px;top:1px;font:bold 12px/16px 'Liberation Serif',serif;color:#f6efe4;white-space:nowrap;transform:scaleX(.94);transform-origin:0 0;">MIDI: Keystatic</div></div><div style="left:299.5px;top:469px;width:13.5px;height:13.5px;background:rgba(225,235,235,.45);border-radius:50%;"></div><svg style="left:299.5px;top:469px" width="14" height="14"><path d="M3 4.500h7.500l-3.750 6z" fill="#4a9c9c"/></svg><div style="left:140px;top:489px;width:40px;height:16px;background:none;overflow:hidden;"><div style="left:0.5px;top:0px;font:bold 12.2px/16px 'Liberation Serif',serif;color:#b0ffff;white-space:nowrap;letter-spacing:.45px;">-8.26dB</div></div><div style="left:334px;top:489px;font:bold 12.2px/16px 'Liberation Serif',serif;color:#b0ffff;white-space:nowrap;width:160px;text-align:right;letter-spacing:.4px;">center</div>
<div style="left:504px;top:434px;font:normal 10.2px/12px 'Liberation Sans',sans-serif;color:#7d7d7d;white-space:nowrap;width:28px;text-align:center;letter-spacing:-.25px;">-inf</div><div style="left:504px;top:446px;font:normal 10.2px/12px 'Liberation Sans',sans-serif;color:#7d7d7d;white-space:nowrap;width:28px;text-align:center;letter-spacing:-.25px;">-6-</div><div style="left:504px;top:463px;font:normal 10.2px/12px 'Liberation Sans',sans-serif;color:#7d7d7d;white-space:nowrap;width:28px;text-align:center;letter-spacing:-.25px;">-18-</div><div style="left:504px;top:480px;font:normal 10.2px/12px 'Liberation Sans',sans-serif;color:#7d7d7d;white-space:nowrap;width:28px;text-align:center;letter-spacing:-.25px;">-30-</div><div style="left:504px;top:498px;font:normal 10.2px/12px 'Liberation Sans',sans-serif;color:#7d7d7d;white-space:nowrap;width:28px;text-align:center;letter-spacing:-.25px;">-42-</div><div style="left:504px;top:515px;font:normal 10.2px/12px 'Liberation Sans',sans-serif;color:#7d7d7d;white-space:nowrap;width:28px;text-align:center;letter-spacing:-.25px;">-54-</div>
<div style="left:534px;top:435.5px;width:20px;height:19px;background:linear-gradient(#3e3e3e,#333);border:1px solid #1e1e1e;box-shadow:inset 0 1px 0 #505050;"></div><div style="left:534px;top:437.5px;font:bold 13px/15px 'Liberation Sans',sans-serif;color:#c8c8c8;white-space:nowrap;width:20px;text-align:center;">M</div>
<div style="left:534px;top:457.5px;width:20px;height:19px;background:linear-gradient(#3e3e3e,#333);border:1px solid #1e1e1e;box-shadow:inset 0 1px 0 #505050;"></div><div style="left:534px;top:459.5px;font:bold 13px/15px 'Liberation Sans',sans-serif;color:#c8c8c8;white-space:nowrap;width:20px;text-align:center;">S</div>
<div style="left:536px;top:513px;width:16px;height:16px;background:radial-gradient(circle at 50% 30%,#3c3c3c,#262626);border-radius:50%;box-shadow:0 1px 1px #111;"></div><svg style="left:536px;top:513px" width="16" height="16"><circle cx="8" cy="8" r="3.600" fill="none" stroke="#9a9a9a" stroke-width="1.200"/><path d="M4.500 12l7-8" stroke="#9a9a9a" stroke-width="1.200"/></svg>
<div style="left:114px;top:534px;width:16px;height:1px;background:#1f5c5c;"></div>
<div style="left:134px;top:534px;width:368px;height:1px;background:#1f5c5c;"></div>
<div style="left:114px;top:535px;width:16px;height:102px;background:#389c9c;"></div>
<div style="left:112px;top:579px;font:normal 11px/14px 'Liberation Sans',sans-serif;color:#b0ffff;white-space:nowrap;width:20px;text-align:center;letter-spacing:-.3px;">150</div>
<svg style="left:118px;top:625px" width="9" height="8"><path d="M0 8v-7h3l2 2h4v5z" fill="#2a8080"/></svg>
<div style="left:134px;top:535px;width:368px;height:102px;background:#389c9c;"></div><div style="left:140px;top:541px;width:196px;height:22px;background:#252525;border-radius:11px;"></div><div style="left:141px;top:542px;width:20px;height:20px;background:#1e1e1e;border-radius:50%;"></div><div style="left:141px;top:544px;font:bold 14px/16px 'Liberation Sans',sans-serif;color:#4c4c4c;white-space:nowrap;width:20px;text-align:center;">A</div><svg style="left:162px;top:545px" width="14" height="14" viewBox="0 0 14 14"><path d="M1 4.500h3l4.500-3.500v12l-4.500-3.500h-3z" fill="#e04838"/><rect x="10" y="3.500" width="1.400" height="7" fill="#e04838"/></svg><div style="left:180px;top:542px;font:bold 15.3px/19px 'Liberation Serif',serif;color:#3cb8b4;white-space:nowrap;letter-spacing:.45px;">Giant Cinematic</div><div style="left:317px;top:544px;width:16px;height:16px;background:radial-gradient(circle at 50% 35%,#d4d0cc,#a09c98);border-radius:50%;"></div><svg style="left:317px;top:544px" width="16" height="16"><circle cx="8.300" cy="8.500" r="3.400" fill="#252525"/><path d="M8 8L4.500 2.500" stroke="#252525" stroke-width="2"/></svg><div style="left:342.5px;top:543.5px;width:5.5px;height:4.5px;background:#3fd03f;border-radius:1px;"></div><div style="left:342.5px;top:549.8px;width:5.5px;height:4.5px;background:#1e90ff;border-radius:1px;"></div><div style="left:342.5px;top:556.1px;width:5.5px;height:4.5px;background:#2a7a7a;border-radius:1px;"></div><div style="left:350.5px;top:542.5px;width:24.5px;height:19px;background:linear-gradient(#cfcaca,#8e8e8e);border:1px solid #7a8484;border-radius:3px;box-shadow:inset 0 1px 0 #e8e4e4;"></div><div style="left:350.5px;top:544.5px;font:bold 12px/15px 'Liberation Sans',sans-serif;color:#6e6e6e;white-space:nowrap;width:24.5px;text-align:center;letter-spacing:.6px;text-indent:.6px;">IO</div><div style="left:383.5px;top:542px;width:36px;height:20px;background:linear-gradient(#48a6a6,#2f9090);border:1px solid #2a7474;border-radius:3px;box-shadow:inset 0 0 0 1px rgba(255,255,255,.22);"></div><div style="left:388.5px;top:543.5px;font:bold 12.3px/17px 'Liberation Sans',sans-serif;color:#2a4a4a;white-space:nowrap;letter-spacing:.3px;">FX</div><div style="left:409.5px;top:546.5px;width:5.5px;height:11.5px;background:rgba(255,255,255,.08);border:1px solid #2a7474;border-radius:2px;"></div><svg style="left:426.5px;top:545px;opacity:1" width="38" height="14" viewBox="0 0 38 14"><path d="M2.500 9.500l7.500-5l7.500 5.500" fill="none" stroke="#8cc6c4" stroke-width="1.300"/><circle cx="2.800" cy="9.500" r="2.300" fill="#8cc6c4"/><circle cx="10" cy="4.300" r="2.300" fill="#8cc6c4"/><circle cx="17.300" cy="10" r="2.300" fill="#8cc6c4"/><text x="21" y="12" font-family="Liberation Sans,sans-serif" font-weight="bold" font-size="12" fill="#8cc6c4" stroke="#8cc6c4" stroke-width=".3">TR</text></svg><div style="left:475.0px;top:542.5px;width:20px;height:20px;background:radial-gradient(circle at 50% 40%,#2a7a7a,#236a6a);border-radius:50%;box-shadow:0 1px 1px rgba(0,0,0,.25);"></div><div style="left:481.0px;top:549px;width:8px;height:8px;background:radial-gradient(circle at 50% 30%,#dcdcdc,#8a9a9a);border-radius:50%;"></div><div style="left:483.5px;top:544.5px;width:3px;height:3px;background:#c8b8b8;border-radius:50%;"></div><div style="left:140px;top:569px;width:39px;height:20px;background:linear-gradient(#2f8686,#297878);border:1px solid #2a7272;border-radius:3px;"></div><div style="left:145px;top:574px;font:normal 9px/11px 'Liberation Sans',sans-serif;color:#d0f0f0;white-space:nowrap;letter-spacing:1.600px;opacity:.85;">IN</div><svg style="left:165px;top:576px" width="9" height="7"><path d="M0.500 0.500h8l-4 6z" fill="#56a0a0"/></svg><div style="left:186px;top:569px;width:130px;height:20px;background:rgba(150,150,150,.55);border-radius:3px 10px 10px 3px;border:1px solid #9cc8c8;"></div><div style="left:186px;top:569px;width:29.5px;height:20px;background:linear-gradient(#2f8686,#297878);border:1px solid #2a7272;border-radius:3px 0 0 3px;"></div><div style="left:186px;top:573px;font:normal 9.5px/12px 'Liberation Sans',sans-serif;color:#d8f0f0;white-space:nowrap;width:29px;text-align:center;opacity:.9;letter-spacing:.5px;">FX</div><div style="left:215.5px;top:570px;width:80.5px;height:18px;background:none;overflow:hidden;"><div style="left:0px;top:1px;font:bold 12px/16px 'Liberation Serif',serif;color:#f6efe4;white-space:nowrap;transform:scaleX(.94);transform-origin:0 0;">MIDI: Keystatic</div></div><div style="left:299.5px;top:572px;width:13.5px;height:13.5px;background:rgba(225,235,235,.45);border-radius:50%;"></div><svg style="left:299.5px;top:572px" width="14" height="14"><path d="M3 4.500h7.500l-3.750 6z" fill="#4a9c9c"/></svg><div style="left:140px;top:592px;width:40px;height:16px;background:none;overflow:hidden;"><div style="left:0.5px;top:0px;font:bold 12.2px/16px 'Liberation Serif',serif;color:#b0ffff;white-space:nowrap;letter-spacing:.45px;">-5.63dB</div></div><div style="left:334px;top:592px;font:bold 12.2px/16px 'Liberation Serif',serif;color:#b0ffff;white-space:nowrap;width:160px;text-align:right;letter-spacing:.4px;">center</div>
<div style="left:504px;top:537px;font:normal 10.2px/12px 'Liberation Sans',sans-serif;color:#7d7d7d;white-space:nowrap;width:28px;text-align:center;letter-spacing:-.25px;">-inf</div><div style="left:504px;top:549px;font:normal 10.2px/12px 'Liberation Sans',sans-serif;color:#7d7d7d;white-space:nowrap;width:28px;text-align:center;letter-spacing:-.25px;">-6-</div><div style="left:504px;top:566px;font:normal 10.2px/12px 'Liberation Sans',sans-serif;color:#7d7d7d;white-space:nowrap;width:28px;text-align:center;letter-spacing:-.25px;">-18-</div><div style="left:504px;top:583px;font:normal 10.2px/12px 'Liberation Sans',sans-serif;color:#7d7d7d;white-space:nowrap;width:28px;text-align:center;letter-spacing:-.25px;">-30-</div><div style="left:504px;top:601px;font:normal 10.2px/12px 'Liberation Sans',sans-serif;color:#7d7d7d;white-space:nowrap;width:28px;text-align:center;letter-spacing:-.25px;">-42-</div><div style="left:504px;top:618px;font:normal 10.2px/12px 'Liberation Sans',sans-serif;color:#7d7d7d;white-space:nowrap;width:28px;text-align:center;letter-spacing:-.25px;">-54-</div>
<div style="left:534px;top:538.5px;width:20px;height:19px;background:linear-gradient(#3e3e3e,#333);border:1px solid #1e1e1e;box-shadow:inset 0 1px 0 #505050;"></div><div style="left:534px;top:540.5px;font:bold 13px/15px 'Liberation Sans',sans-serif;color:#c8c8c8;white-space:nowrap;width:20px;text-align:center;">M</div>
<div style="left:534px;top:560.5px;width:20px;height:19px;background:linear-gradient(#3e3e3e,#333);border:1px solid #1e1e1e;box-shadow:inset 0 1px 0 #505050;"></div><div style="left:534px;top:562.5px;font:bold 13px/15px 'Liberation Sans',sans-serif;color:#c8c8c8;white-space:nowrap;width:20px;text-align:center;">S</div>
<div style="left:536px;top:616px;width:16px;height:16px;background:radial-gradient(circle at 50% 30%,#3c3c3c,#262626);border-radius:50%;box-shadow:0 1px 1px #111;"></div><svg style="left:536px;top:616px" width="16" height="16"><circle cx="8" cy="8" r="3.600" fill="none" stroke="#9a9a9a" stroke-width="1.200"/><path d="M4.500 12l7-8" stroke="#9a9a9a" stroke-width="1.200"/></svg>
<div style="left:114px;top:637px;width:16px;height:1px;background:#1f5c5c;"></div>
<div style="left:134px;top:637px;width:368px;height:1px;background:#1f5c5c;"></div>
<div style="left:114px;top:638px;width:16px;height:102px;background:#389c9c;"></div>
<div style="left:112px;top:682px;font:normal 11px/14px 'Liberation Sans',sans-serif;color:#b0ffff;white-space:nowrap;width:20px;text-align:center;letter-spacing:-.3px;">152</div>
<svg style="left:118px;top:728px" width="9" height="8"><path d="M0 8v-7h3l2 2h4v5z" fill="#2a8080"/></svg>
<div style="left:134px;top:638px;width:368px;height:102px;background:#389c9c;"></div><div style="left:140px;top:644px;width:196px;height:22px;background:#252525;border-radius:11px;"></div><div style="left:141px;top:645px;width:20px;height:20px;background:#1e1e1e;border-radius:50%;"></div><div style="left:141px;top:647px;font:bold 14px/16px 'Liberation Sans',sans-serif;color:#4c4c4c;white-space:nowrap;width:20px;text-align:center;">A</div><svg style="left:162px;top:648px" width="14" height="14" viewBox="0 0 14 14"><path d="M1 4.500h3l4.500-3.500v12l-4.500-3.500h-3z" fill="#e04838"/><rect x="10" y="3.500" width="1.400" height="7" fill="#e04838"/></svg><div style="left:180px;top:645px;font:bold 15.3px/19px 'Liberation Serif',serif;color:#3cb8b4;white-space:nowrap;letter-spacing:.45px;">Opacity</div><div style="left:317px;top:647px;width:16px;height:16px;background:radial-gradient(circle at 50% 35%,#d4d0cc,#a09c98);border-radius:50%;"></div><svg style="left:317px;top:647px" width="16" height="16"><circle cx="8.300" cy="8.500" r="3.400" fill="#252525"/><path d="M8 8L4.500 2.500" stroke="#252525" stroke-width="2"/></svg><div style="left:342.5px;top:646.5px;width:5.5px;height:4.5px;background:#3fd03f;border-radius:1px;"></div><div style="left:342.5px;top:652.8px;width:5.5px;height:4.5px;background:#1e90ff;border-radius:1px;"></div><div style="left:342.5px;top:659.1px;width:5.5px;height:4.5px;background:#2a7a7a;border-radius:1px;"></div><div style="left:350.5px;top:645.5px;width:24.5px;height:19px;background:linear-gradient(#cfcaca,#8e8e8e);border:1px solid #7a8484;border-radius:3px;box-shadow:inset 0 1px 0 #e8e4e4;"></div><div style="left:350.5px;top:647.5px;font:bold 12px/15px 'Liberation Sans',sans-serif;color:#6e6e6e;white-space:nowrap;width:24.5px;text-align:center;letter-spacing:.6px;text-indent:.6px;">IO</div><div style="left:383.5px;top:645px;width:36px;height:20px;background:linear-gradient(#48a6a6,#2f9090);border:1px solid #2a7474;border-radius:3px;box-shadow:inset 0 0 0 1px rgba(255,255,255,.22);"></div><div style="left:388.5px;top:646.5px;font:bold 12.3px/17px 'Liberation Sans',sans-serif;color:#2a4a4a;white-space:nowrap;letter-spacing:.3px;">FX</div><div style="left:409.5px;top:649.5px;width:5.5px;height:11.5px;background:rgba(255,255,255,.08);border:1px solid #2a7474;border-radius:2px;"></div><svg style="left:426.5px;top:648px;opacity:1" width="38" height="14" viewBox="0 0 38 14"><path d="M2.500 9.500l7.500-5l7.500 5.500" fill="none" stroke="#8cc6c4" stroke-width="1.300"/><circle cx="2.800" cy="9.500" r="2.300" fill="#8cc6c4"/><circle cx="10" cy="4.300" r="2.300" fill="#8cc6c4"/><circle cx="17.300" cy="10" r="2.300" fill="#8cc6c4"/><text x="21" y="12" font-family="Liberation Sans,sans-serif" font-weight="bold" font-size="12" fill="#8cc6c4" stroke="#8cc6c4" stroke-width=".3">TR</text></svg><div style="left:475.0px;top:645.5px;width:20px;height:20px;background:radial-gradient(circle at 50% 40%,#2a7a7a,#236a6a);border-radius:50%;box-shadow:0 1px 1px rgba(0,0,0,.25);"></div><div style="left:481.0px;top:652px;width:8px;height:8px;background:radial-gradient(circle at 50% 30%,#dcdcdc,#8a9a9a);border-radius:50%;"></div><div style="left:483.5px;top:647.5px;width:3px;height:3px;background:#c8b8b8;border-radius:50%;"></div><div style="left:140px;top:672px;width:39px;height:20px;background:linear-gradient(#2f8686,#297878);border:1px solid #2a7272;border-radius:3px;"></div><div style="left:145px;top:677px;font:normal 9px/11px 'Liberation Sans',sans-serif;color:#d0f0f0;white-space:nowrap;letter-spacing:1.600px;opacity:.85;">IN</div><svg style="left:165px;top:679px" width="9" height="7"><path d="M0.500 0.500h8l-4 6z" fill="#56a0a0"/></svg><div style="left:186px;top:672px;width:130px;height:20px;background:rgba(150,150,150,.55);border-radius:3px 10px 10px 3px;border:1px solid #9cc8c8;"></div><div style="left:186px;top:672px;width:29.5px;height:20px;background:linear-gradient(#2f8686,#297878);border:1px solid #2a7272;border-radius:3px 0 0 3px;"></div><div style="left:186px;top:676px;font:normal 9.5px/12px 'Liberation Sans',sans-serif;color:#d8f0f0;white-space:nowrap;width:29px;text-align:center;opacity:.9;letter-spacing:.5px;">FX</div><div style="left:215.5px;top:673px;width:80.5px;height:18px;background:none;overflow:hidden;"><div style="left:0px;top:1px;font:bold 12px/16px 'Liberation Serif',serif;color:#f6efe4;white-space:nowrap;transform:scaleX(.94);transform-origin:0 0;">MIDI: Keystatic</div></div><div style="left:299.5px;top:675px;width:13.5px;height:13.5px;background:rgba(225,235,235,.45);border-radius:50%;"></div><svg style="left:299.5px;top:675px" width="14" height="14"><path d="M3 4.500h7.500l-3.750 6z" fill="#4a9c9c"/></svg><div style="left:140px;top:695px;width:40px;height:16px;background:none;overflow:hidden;"><div style="left:0.5px;top:0px;font:bold 12.2px/16px 'Liberation Serif',serif;color:#b0ffff;white-space:nowrap;letter-spacing:.45px;">-4.62dB</div></div><div style="left:334px;top:695px;font:bold 12.2px/16px 'Liberation Serif',serif;color:#b0ffff;white-space:nowrap;width:160px;text-align:right;letter-spacing:.4px;">center</div>
<div style="left:504px;top:640px;font:normal 10.2px/12px 'Liberation Sans',sans-serif;color:#7d7d7d;white-space:nowrap;width:28px;text-align:center;letter-spacing:-.25px;">-inf</div><div style="left:504px;top:652px;font:normal 10.2px/12px 'Liberation Sans',sans-serif;color:#7d7d7d;white-space:nowrap;width:28px;text-align:center;letter-spacing:-.25px;">-6-</div><div style="left:504px;top:669px;font:normal 10.2px/12px 'Liberation Sans',sans-serif;color:#7d7d7d;white-space:nowrap;width:28px;text-align:center;letter-spacing:-.25px;">-18-</div><div style="left:504px;top:686px;font:normal 10.2px/12px 'Liberation Sans',sans-serif;color:#7d7d7d;white-space:nowrap;width:28px;text-align:center;letter-spacing:-.25px;">-30-</div><div style="left:504px;top:704px;font:normal 10.2px/12px 'Liberation Sans',sans-serif;color:#7d7d7d;white-space:nowrap;width:28px;text-align:center;letter-spacing:-.25px;">-42-</div><div style="left:504px;top:721px;font:normal 10.2px/12px 'Liberation Sans',sans-serif;color:#7d7d7d;white-space:nowrap;width:28px;text-align:center;letter-spacing:-.25px;">-54-</div>
<div style="left:534px;top:641.5px;width:20px;height:19px;background:linear-gradient(#3e3e3e,#333);border:1px solid #1e1e1e;box-shadow:inset 0 1px 0 #505050;"></div><div style="left:534px;top:643.5px;font:bold 13px/15px 'Liberation Sans',sans-serif;color:#c8c8c8;white-space:nowrap;width:20px;text-align:center;">M</div>
<div style="left:534px;top:663.5px;width:20px;height:19px;background:linear-gradient(#3e3e3e,#333);border:1px solid #1e1e1e;box-shadow:inset 0 1px 0 #505050;"></div><div style="left:534px;top:665.5px;font:bold 13px/15px 'Liberation Sans',sans-serif;color:#c8c8c8;white-space:nowrap;width:20px;text-align:center;">S</div>
<div style="left:536px;top:719px;width:16px;height:16px;background:radial-gradient(circle at 50% 30%,#3c3c3c,#262626);border-radius:50%;box-shadow:0 1px 1px #111;"></div><svg style="left:536px;top:719px" width="16" height="16"><circle cx="8" cy="8" r="3.600" fill="none" stroke="#9a9a9a" stroke-width="1.200"/><path d="M4.500 12l7-8" stroke="#9a9a9a" stroke-width="1.200"/></svg>
<div style="left:114px;top:740px;width:444px;height:1px;background:#1f5c5c;"></div>
<div style="left:114px;top:741px;width:16px;height:100px;background:#d8ecec;border-radius:0 0 8px 8px;"></div>
<div style="left:131px;top:741px;width:3px;height:102px;background:#ffffff;"></div>
<div style="left:112px;top:779px;font:normal 11px/14px 'Liberation Sans',sans-serif;color:#2a2a4a;white-space:nowrap;width:20px;text-align:center;letter-spacing:-.3px;">154</div>
<svg style="left:118px;top:831px" width="9" height="8"><path d="M0 8v-7h3l2 2h4v5z" fill="#a8c8c8"/></svg>
<div style="left:134px;top:741px;width:56px;height:102px;background:#262626;"></div>
<div style="left:136px;top:743px;font:normal 10.2px/12px 'Liberation Sans',sans-serif;color:#7d7d7d;white-space:nowrap;width:28px;text-align:center;letter-spacing:-.25px;">-inf</div><div style="left:136px;top:755px;font:bold 10.2px/12px 'Liberation Sans',sans-serif;color:#ff4a10;white-space:nowrap;width:28px;text-align:center;letter-spacing:-.25px;">-6-</div><div style="left:136px;top:772px;font:bold 10.2px/12px 'Liberation Sans',sans-serif;color:#ff4a10;white-space:nowrap;width:28px;text-align:center;letter-spacing:-.25px;">-18-</div><div style="left:136px;top:789px;font:bold 10.2px/12px 'Liberation Sans',sans-serif;color:#ff4a10;white-space:nowrap;width:28px;text-align:center;letter-spacing:-.25px;">-30-</div><div style="left:136px;top:807px;font:bold 10.2px/12px 'Liberation Sans',sans-serif;color:#ff4a10;white-space:nowrap;width:28px;text-align:center;letter-spacing:-.25px;">-42-</div><div style="left:136px;top:824px;font:bold 10.2px/12px 'Liberation Sans',sans-serif;color:#ff4a10;white-space:nowrap;width:28px;text-align:center;letter-spacing:-.25px;">-54-</div>
<div style="left:166px;top:745px;width:20px;height:19px;background:linear-gradient(#3e3e3e,#333);border:1px solid #1e1e1e;box-shadow:inset 0 1px 0 #505050;"></div><div style="left:166px;top:747px;font:bold 13px/15px 'Liberation Sans',sans-serif;color:#c8c8c8;white-space:nowrap;width:20px;text-align:center;">M</div>
<div style="left:166px;top:767px;width:20px;height:19px;background:linear-gradient(#3e3e3e,#333);border:1px solid #1e1e1e;box-shadow:inset 0 1px 0 #505050;"></div><div style="left:166px;top:769px;font:bold 13px/15px 'Liberation Sans',sans-serif;color:#c8c8c8;white-space:nowrap;width:20px;text-align:center;">S</div>
<div style="left:168px;top:822px;width:16px;height:16px;background:radial-gradient(circle at 50% 30%,#3c3c3c,#262626);border-radius:50%;box-shadow:0 1px 1px #111;"></div><svg style="left:168px;top:822px" width="16" height="16"><circle cx="8" cy="8" r="3.600" fill="none" stroke="#9a9a9a" stroke-width="1.200"/><path d="M4.500 12l7-8" stroke="#9a9a9a" stroke-width="1.200"/></svg>
<div style="left:190px;top:741px;width:368px;height:102px;background:#86c3c3;"></div><div style="left:196px;top:747px;width:196px;height:22px;background:#252525;border-radius:11px;"></div><div style="left:197px;top:748px;width:20px;height:20px;background:#1e1e1e;border-radius:50%;"></div><div style="left:197px;top:750px;font:bold 14px/16px 'Liberation Sans',sans-serif;color:#e02828;white-space:nowrap;width:20px;text-align:center;">A</div><svg style="left:218px;top:751px" width="14" height="14" viewBox="0 0 14 14"><path d="M1 4.500h3l4.500-3.500v12l-4.500-3.500h-3z" fill="#e04838"/><rect x="10" y="3.500" width="1.400" height="7" fill="#e04838"/></svg><div style="left:236px;top:748px;font:bold 15.3px/19px 'Liberation Serif',serif;color:#ff7a1a;white-space:nowrap;letter-spacing:.45px;">Riffendium 2</div><div style="left:373px;top:750px;width:16px;height:16px;background:radial-gradient(circle at 50% 35%,#d4d0cc,#a09c98);border-radius:50%;"></div><svg style="left:373px;top:750px" width="16" height="16"><circle cx="8.300" cy="8.500" r="3.400" fill="#252525"/><path d="M8 8L4.500 2.500" stroke="#252525" stroke-width="2"/></svg><div style="left:398.5px;top:749.5px;width:5.5px;height:4.5px;background:#3fd03f;border-radius:1px;"></div><div style="left:398.5px;top:755.8px;width:5.5px;height:4.5px;background:#1e90ff;border-radius:1px;"></div><div style="left:398.5px;top:762.1px;width:5.5px;height:4.5px;background:#5f9a9a;border-radius:1px;"></div><div style="left:406.5px;top:748.5px;width:24.5px;height:19px;background:linear-gradient(#cfcaca,#8e8e8e);border:1px solid #7a8484;border-radius:3px;box-shadow:inset 0 1px 0 #e8e4e4;"></div><div style="left:406.5px;top:750.5px;font:bold 12px/15px 'Liberation Sans',sans-serif;color:#6e6e6e;white-space:nowrap;width:24.5px;text-align:center;letter-spacing:.6px;text-indent:.6px;">IO</div><div style="left:439.5px;top:748px;width:36px;height:20px;background:linear-gradient(#90caca,#7ab8b8);border:1px solid #5a9898;border-radius:3px;box-shadow:inset 0 0 0 1px rgba(255,255,255,.22);"></div><div style="left:444.5px;top:749.5px;font:bold 12.3px/17px 'Liberation Sans',sans-serif;color:#3a5a5a;white-space:nowrap;letter-spacing:.3px;">FX</div><div style="left:465.5px;top:752.5px;width:5.5px;height:11.5px;background:rgba(255,255,255,.08);border:1px solid #5a9898;border-radius:2px;"></div><svg style="left:482.5px;top:751px;opacity:1" width="38" height="14" viewBox="0 0 38 14"><path d="M2.500 9.500l7.500-5l7.500 5.500" fill="none" stroke="#a4cccc" stroke-width="1.300"/><circle cx="2.800" cy="9.500" r="2.300" fill="#a4cccc"/><circle cx="10" cy="4.300" r="2.300" fill="#a4cccc"/><circle cx="17.300" cy="10" r="2.300" fill="#a4cccc"/><text x="21" y="12" font-family="Liberation Sans,sans-serif" font-weight="bold" font-size="12" fill="#a4cccc" stroke="#a4cccc" stroke-width=".3">TR</text></svg><div style="left:531.0px;top:748.5px;width:20px;height:20px;background:radial-gradient(circle at 50% 40%,#5f9a9a,#4f8a8a);border-radius:50%;box-shadow:0 1px 1px rgba(0,0,0,.25);"></div><div style="left:537.0px;top:755px;width:8px;height:8px;background:radial-gradient(circle at 50% 30%,#dcdcdc,#8a9a9a);border-radius:50%;"></div><div style="left:539.5px;top:750.5px;width:3px;height:3px;background:#c8b8b8;border-radius:50%;"></div><div style="left:196px;top:775px;width:39px;height:20px;background:linear-gradient(#70a8a8,#669c9c);border:1px solid #5f9696;border-radius:3px;"></div><div style="left:201px;top:780px;font:normal 9px/11px 'Liberation Sans',sans-serif;color:#d0f0f0;white-space:nowrap;letter-spacing:1.600px;opacity:.85;">IN</div><svg style="left:221px;top:782px" width="9" height="7"><path d="M0.500 0.500h8l-4 6z" fill="#8fbcbc"/></svg><div style="left:242px;top:775px;width:130px;height:20px;background:rgba(140,150,150,.6);border-radius:3px 10px 10px 3px;border:1px solid #c4e0e0;"></div><div style="left:242px;top:775px;width:29.5px;height:20px;background:linear-gradient(#70a8a8,#669c9c);border:1px solid #5f9696;border-radius:3px 0 0 3px;"></div><div style="left:242px;top:779px;font:normal 9.5px/12px 'Liberation Sans',sans-serif;color:#d8f0f0;white-space:nowrap;width:29px;text-align:center;opacity:.9;letter-spacing:.5px;">FX</div><div style="left:271.5px;top:776px;width:80.5px;height:18px;background:none;overflow:hidden;"><div style="left:0px;top:1px;font:bold 12px/16px 'Liberation Serif',serif;color:#f6efe4;white-space:nowrap;transform:scaleX(.94);transform-origin:0 0;">MIDI: Keystatic</div></div><div style="left:355.5px;top:778px;width:13.5px;height:13.5px;background:rgba(225,235,235,.45);border-radius:50%;"></div><svg style="left:355.5px;top:778px" width="14" height="14"><path d="M3 4.500h7.500l-3.750 6z" fill="#86b8b8"/></svg><div style="left:196px;top:798px;width:40px;height:16px;background:none;overflow:hidden;"><div style="left:0.5px;top:0px;font:bold 12.2px/16px 'Liberation Serif',serif;color:#103838;white-space:nowrap;letter-spacing:.45px;">-7.40dB</div></div><div style="left:390px;top:798px;font:bold 12.2px/16px 'Liberation Serif',serif;color:#103838;white-space:nowrap;width:160px;text-align:right;letter-spacing:.4px;">33%L</div>
<div style="left:94px;top:843px;width:464px;height:1px;background:#222;"></div>
<div style="left:94px;top:844px;width:16px;height:102px;background:#db7000;"></div>
<div style="left:94px;top:844px;width:16px;height:13px;background:#a2580c;"></div>
<div style="left:94px;top:844px;width:16px;height:2px;background:#c0803c;"></div>
<svg style="left:98px;top:848px" width="10" height="8"><path d="M1.500 1.500h6l-3 4z" fill="#f0c090"/></svg>
<div style="left:93px;top:895px;font:normal 11px/14px 'Liberation Sans',sans-serif;color:#ffd27a;white-space:nowrap;width:20px;text-align:center;letter-spacing:-.3px;">155</div>
<svg style="left:99px;top:934px" width="9" height="8"><path d="M0 8v-7h3l2 2h4v5z" fill="#b05c00"/></svg>
<div style="left:114px;top:844px;width:388px;height:102px;background:#db7000;"></div><div style="left:119px;top:850px;width:196px;height:22px;background:#252525;border-radius:11px;"></div><div style="left:123px;top:854px;width:14px;height:14px;background:none;border-radius:50%;border:3.500px solid #4c4c4c;"></div><svg style="left:141px;top:854px" width="14" height="14" viewBox="0 0 14 14"><path d="M1 4.500h3l4.500-3.500v12l-4.500-3.500h-3z" fill="#5c5c5c"/><rect x="10" y="3.500" width="1.400" height="7" fill="#5c5c5c"/></svg><div style="left:159px;top:851px;font:bold 15.3px/19px 'Liberation Serif',serif;color:#f59a1a;white-space:nowrap;letter-spacing:.45px;">Instruments 2</div><div style="left:296px;top:853px;width:16px;height:16px;background:radial-gradient(circle at 50% 35%,#d4d0cc,#a09c98);border-radius:50%;"></div><svg style="left:296px;top:853px" width="16" height="16"><circle cx="8.300" cy="8.500" r="3.400" fill="#252525"/><path d="M8 8L4.500 2.500" stroke="#252525" stroke-width="2"/></svg><div style="left:321.5px;top:852.5px;width:5.5px;height:4.5px;background:#3fd03f;border-radius:1px;"></div><div style="left:321.5px;top:858.8px;width:5.5px;height:4.5px;background:#a85500;border-radius:1px;"></div><div style="left:321.5px;top:865.1px;width:5.5px;height:4.5px;background:#a85500;border-radius:1px;"></div><div style="left:329.5px;top:851.5px;width:24.5px;height:19px;background:linear-gradient(#cfcaca,#8e8e8e);border:1px solid #7a8484;border-radius:3px;box-shadow:inset 0 1px 0 #e8e4e4;"></div><div style="left:329.5px;top:853.5px;font:bold 12px/15px 'Liberation Sans',sans-serif;color:#6e6e6e;white-space:nowrap;width:24.5px;text-align:center;letter-spacing:.6px;text-indent:.6px;">IO</div><div style="left:362.5px;top:851px;width:36px;height:20px;background:linear-gradient(#e07a10,#c86400);border:1px solid #9c5000;border-radius:3px;box-shadow:inset 0 0 0 1px rgba(255,255,255,.22);"></div><div style="left:367.5px;top:852.5px;font:bold 12.3px/17px 'Liberation Sans',sans-serif;color:#6a3400;white-space:nowrap;letter-spacing:.3px;">FX</div><div style="left:388.5px;top:855.5px;width:5.5px;height:11.5px;background:rgba(255,255,255,.08);border:1px solid #9c5000;border-radius:2px;"></div><svg style="left:405.5px;top:854px;opacity:1" width="38" height="14" viewBox="0 0 38 14"><path d="M2.500 9.500l7.500-5l7.500 5.500" fill="none" stroke="#eaa860" stroke-width="1.300"/><circle cx="2.800" cy="9.500" r="2.300" fill="#eaa860"/><circle cx="10" cy="4.300" r="2.300" fill="#eaa860"/><circle cx="17.300" cy="10" r="2.300" fill="#eaa860"/><text x="21" y="12" font-family="Liberation Sans,sans-serif" font-weight="bold" font-size="12" fill="#eaa860" stroke="#eaa860" stroke-width=".3">TR</text></svg><div style="left:454.0px;top:851.5px;width:20px;height:20px;background:radial-gradient(circle at 50% 40%,#a85500,#944a00);border-radius:50%;box-shadow:0 1px 1px rgba(0,0,0,.25);"></div><div style="left:460.0px;top:858px;width:8px;height:8px;background:radial-gradient(circle at 50% 30%,#dcdcdc,#8a9a9a);border-radius:50%;"></div><div style="left:462.5px;top:853.5px;width:3px;height:3px;background:#c8b8b8;border-radius:50%;"></div><div style="left:119px;top:878px;width:39px;height:20px;background:linear-gradient(#b85e00,#a85400);border:1px solid #9c5000;border-radius:3px;"></div><div style="left:124px;top:883px;font:normal 9px/11px 'Liberation Sans',sans-serif;color:#ffd8a0;white-space:nowrap;letter-spacing:1.600px;opacity:.85;">IN</div><svg style="left:144px;top:885px" width="9" height="7"><path d="M0.500 0.500h8l-4 6z" fill="#d89048"/></svg><div style="left:165px;top:878px;width:130px;height:20px;background:rgba(215,175,135,.6);border-radius:3px 10px 10px 3px;border:1px solid #f0c090;"></div><div style="left:165px;top:878px;width:29.5px;height:20px;background:linear-gradient(#b85e00,#a85400);border:1px solid #9c5000;border-radius:3px 0 0 3px;"></div><div style="left:165px;top:882px;font:normal 9.5px/12px 'Liberation Sans',sans-serif;color:#ffd8a0;white-space:nowrap;width:29px;text-align:center;opacity:.9;letter-spacing:.5px;">FX</div><div style="left:194.5px;top:879px;width:80.5px;height:18px;background:none;overflow:hidden;"><div style="left:0px;top:1px;font:bold 12px/16px 'Liberation Serif',serif;color:#f6efe4;white-space:nowrap;transform:scaleX(.94);transform-origin:0 0;">&nbsp;UR44 Input 1</div></div><div style="left:278.5px;top:881px;width:13.5px;height:13.5px;background:rgba(225,235,235,.45);border-radius:50%;"></div><svg style="left:278.5px;top:881px" width="14" height="14"><path d="M3 4.500h7.500l-3.750 6z" fill="#c07830"/></svg><div style="left:119px;top:901px;width:40px;height:16px;background:none;overflow:hidden;"><div style="left:0.5px;top:0px;font:bold 12.2px/16px 'Liberation Serif',serif;color:#ffd27a;white-space:nowrap;letter-spacing:.45px;">0.00dB</div></div><div style="left:334px;top:901px;font:bold 12.2px/16px 'Liberation Serif',serif;color:#ffd27a;white-space:nowrap;width:160px;text-align:right;letter-spacing:.4px;">center</div>
<div style="left:504px;top:846px;font:normal 10.2px/12px 'Liberation Sans',sans-serif;color:#7d7d7d;white-space:nowrap;width:28px;text-align:center;letter-spacing:-.25px;">-82.8</div><div style="left:504px;top:858px;font:normal 10.2px/12px 'Liberation Sans',sans-serif;color:#7d7d7d;white-space:nowrap;width:28px;text-align:center;letter-spacing:-.25px;">-6-</div><div style="left:504px;top:875px;font:normal 10.2px/12px 'Liberation Sans',sans-serif;color:#7d7d7d;white-space:nowrap;width:28px;text-align:center;letter-spacing:-.25px;">-18-</div><div style="left:504px;top:892px;font:normal 10.2px/12px 'Liberation Sans',sans-serif;color:#7d7d7d;white-space:nowrap;width:28px;text-align:center;letter-spacing:-.25px;">-30-</div><div style="left:504px;top:910px;font:normal 10.2px/12px 'Liberation Sans',sans-serif;color:#7d7d7d;white-space:nowrap;width:28px;text-align:center;letter-spacing:-.25px;">-42-</div><div style="left:504px;top:927px;font:normal 10.2px/12px 'Liberation Sans',sans-serif;color:#7d7d7d;white-space:nowrap;width:28px;text-align:center;letter-spacing:-.25px;">-54-</div>
<div style="left:534px;top:847.5px;width:20px;height:19px;background:linear-gradient(#3e3e3e,#333);border:1px solid #1e1e1e;box-shadow:inset 0 1px 0 #505050;"></div><div style="left:534px;top:849.5px;font:bold 13px/15px 'Liberation Sans',sans-serif;color:#c8c8c8;white-space:nowrap;width:20px;text-align:center;">M</div>
<div style="left:534px;top:869.5px;width:20px;height:19px;background:linear-gradient(#3e3e3e,#333);border:1px solid #1e1e1e;box-shadow:inset 0 1px 0 #505050;"></div><div style="left:534px;top:871.5px;font:bold 13px/15px 'Liberation Sans',sans-serif;color:#c8c8c8;white-space:nowrap;width:20px;text-align:center;">S</div>
<div style="left:536px;top:925px;width:16px;height:16px;background:radial-gradient(circle at 50% 30%,#3c3c3c,#262626);border-radius:50%;box-shadow:0 1px 1px #111;"></div><svg style="left:536px;top:925px" width="16" height="16"><circle cx="8" cy="8" r="3.600" fill="none" stroke="#9a9a9a" stroke-width="1.200"/><path d="M4.500 12l7-8" stroke="#9a9a9a" stroke-width="1.200"/></svg>
<div style="left:114px;top:946px;width:444px;height:1px;background:#222;"></div>
<div style="left:114px;top:947px;width:16px;height:48px;background:#db7000;"></div>
<div style="left:134px;top:947px;width:368px;height:48px;background:none;overflow:hidden;"><div style="left:0px;top:0px;width:368px;height:102px;background:#db7000;"></div><div style="left:6px;top:6px;width:196px;height:22px;background:#252525;border-radius:11px;"></div><div style="left:10px;top:10px;width:14px;height:14px;background:none;border-radius:50%;border:3.500px solid #4c4c4c;"></div><svg style="left:28px;top:10px" width="14" height="14" viewBox="0 0 14 14"><path d="M1 4.500h3l4.500-3.500v12l-4.500-3.500h-3z" fill="#e04838"/><rect x="10" y="3.500" width="1.400" height="7" fill="#e04838"/></svg><div style="left:46px;top:7px;font:bold 15.3px/19px 'Liberation Serif',serif;color:#f59a1a;white-space:nowrap;letter-spacing:.45px;">Instruments 2</div><div style="left:183px;top:9px;width:16px;height:16px;background:radial-gradient(circle at 50% 35%,#d4d0cc,#a09c98);border-radius:50%;"></div><svg style="left:183px;top:9px" width="16" height="16"><circle cx="8.300" cy="8.500" r="3.400" fill="#252525"/><path d="M8 8L4.500 2.500" stroke="#252525" stroke-width="2"/></svg><div style="left:208.5px;top:8.5px;width:5.5px;height:4.5px;background:#a85500;border-radius:1px;"></div><div style="left:208.5px;top:14.8px;width:5.5px;height:4.5px;background:#1e90ff;border-radius:1px;"></div><div style="left:208.5px;top:21.1px;width:5.5px;height:4.5px;background:#f0a020;border-radius:1px;"></div><div style="left:216.5px;top:7.5px;width:24.5px;height:19px;background:linear-gradient(#cfcaca,#8e8e8e);border:1px solid #7a8484;border-radius:3px;box-shadow:inset 0 1px 0 #e8e4e4;"></div><div style="left:216.5px;top:9.5px;font:bold 12px/15px 'Liberation Sans',sans-serif;color:#6e6e6e;white-space:nowrap;width:24.5px;text-align:center;letter-spacing:.6px;text-indent:.6px;">IO</div><div style="left:249.5px;top:7px;width:36px;height:20px;background:linear-gradient(#e07a10,#c86400);border:1px solid #9c5000;border-radius:3px;box-shadow:inset 0 0 0 1px rgba(255,255,255,.22);"></div><div style="left:254.5px;top:8.5px;font:bold 12.3px/17px 'Liberation Sans',sans-serif;color:#6a3400;white-space:nowrap;letter-spacing:.3px;">FX</div><div style="left:275.5px;top:11.5px;width:5.5px;height:11.5px;background:#30c030;border:1px solid #1a801a;border-radius:2px;"></div><svg style="left:292.5px;top:10px;opacity:1" width="38" height="14" viewBox="0 0 38 14"><path d="M2.500 9.500l7.500-5l7.500 5.500" fill="none" stroke="#eaa860" stroke-width="1.300"/><circle cx="2.800" cy="9.500" r="2.300" fill="#eaa860"/><circle cx="10" cy="4.300" r="2.300" fill="#eaa860"/><circle cx="17.300" cy="10" r="2.300" fill="#eaa860"/><text x="21" y="12" font-family="Liberation Sans,sans-serif" font-weight="bold" font-size="12" fill="#eaa860" stroke="#eaa860" stroke-width=".3">TR</text></svg><div style="left:341.0px;top:7.5px;width:20px;height:20px;background:radial-gradient(circle at 50% 40%,#a85500,#944a00);border-radius:50%;box-shadow:0 1px 1px rgba(0,0,0,.25);"></div><div style="left:347.0px;top:14px;width:8px;height:8px;background:radial-gradient(circle at 50% 30%,#dcdcdc,#8a9a9a);border-radius:50%;"></div><div style="left:349.5px;top:9.5px;width:3px;height:3px;background:#c8b8b8;border-radius:50%;"></div><div style="left:6px;top:34px;width:39px;height:20px;background:linear-gradient(#b85e00,#a85400);border:1px solid #9c5000;border-radius:3px;"></div><div style="left:11px;top:39px;font:normal 9px/11px 'Liberation Sans',sans-serif;color:#ffd8a0;white-space:nowrap;letter-spacing:1.600px;opacity:.85;">IN</div><svg style="left:31px;top:41px" width="9" height="7"><path d="M0.500 0.500h8l-4 6z" fill="#d89048"/></svg><div style="left:52px;top:34px;width:130px;height:20px;background:rgba(215,175,135,.6);border-radius:3px 10px 10px 3px;border:1px solid #f0c090;"></div><div style="left:52px;top:34px;width:29.5px;height:20px;background:linear-gradient(#b85e00,#a85400);border:1px solid #9c5000;border-radius:3px 0 0 3px;"></div><div style="left:52px;top:38px;font:normal 9.5px/12px 'Liberation Sans',sans-serif;color:#ffd8a0;white-space:nowrap;width:29px;text-align:center;opacity:.9;letter-spacing:.5px;">FX</div><div style="left:81.5px;top:35px;width:80.5px;height:18px;background:none;overflow:hidden;"><div style="left:0px;top:1px;font:bold 12px/16px 'Liberation Serif',serif;color:#f6efe4;white-space:nowrap;transform:scaleX(.94);transform-origin:0 0;">MIDI: All: All channels</div></div><div style="left:165.5px;top:37px;width:13.5px;height:13.5px;background:rgba(225,235,235,.45);border-radius:50%;"></div><svg style="left:165.5px;top:37px" width="14" height="14"><path d="M3 4.500h7.500l-3.750 6z" fill="#c07830"/></svg><div style="left:6px;top:57px;width:40px;height:16px;background:none;overflow:hidden;"><div style="left:0.5px;top:0px;font:bold 12.2px/16px 'Liberation Serif',serif;color:#ffd27a;white-space:nowrap;letter-spacing:.45px;"></div></div><div style="left:200px;top:57px;font:bold 12.2px/16px 'Liberation Serif',serif;color:#ffd27a;white-space:nowrap;width:160px;text-align:right;letter-spacing:.4px;"></div></div>
<div style="left:504px;top:949px;font:normal 9.5px/12px 'Liberation Sans',sans-serif;color:#7d7d7d;white-space:nowrap;width:28px;text-align:center;">-inf</div>
<div style="left:504px;top:961px;font:normal 9.5px/12px 'Liberation Sans',sans-serif;color:#7d7d7d;white-space:nowrap;width:28px;text-align:center;">-6-</div>
<div style="left:504px;top:978px;font:normal 9.5px/12px 'Liberation Sans',sans-serif;color:#7d7d7d;white-space:nowrap;width:28px;text-align:center;">-18-</div>
<div style="left:534px;top:950.5px;width:20px;height:19px;background:linear-gradient(#3e3e3e,#333);border:1px solid #1e1e1e;box-shadow:inset 0 1px 0 #505050;"></div><div style="left:534px;top:952.5px;font:bold 13px/15px 'Liberation Sans',sans-serif;color:#c8c8c8;white-space:nowrap;width:20px;text-align:center;">M</div>
<div style="left:534px;top:972.5px;width:20px;height:19px;background:linear-gradient(#3e3e3e,#333);border:1px solid #1e1e1e;box-shadow:inset 0 1px 0 #505050;"></div><div style="left:534px;top:974.5px;font:bold 13px/15px 'Liberation Sans',sans-serif;color:#c8c8c8;white-space:nowrap;width:20px;text-align:center;">S</div>
<div style="left:0px;top:995px;width:567px;height:22px;background:#2d2d2d;"></div>
<div style="left:93px;top:995px;width:465px;height:1px;background:#777;"></div>
<div style="left:93px;top:996px;font:normal 13.3px/15px 'Liberation Serif',serif;color:#c8c8c8;white-space:nowrap;letter-spacing:.2px;">Select time</div>
<div style="left:0px;top:51px;width:86px;height:470px;background:#303c3c;"></div>
<div style="left:0px;top:51px;width:86px;height:224px;background:#2f4042;"></div>
<div style="left:2px;top:51.0px;width:84px;height:13.1px;background:#2b3636;border-radius:2px 0 0 2px;"></div>
<div style="left:2px;top:67.1px;width:84px;height:13.1px;background:#2b3636;border-radius:2px 0 0 2px;"></div>
<div style="left:2px;top:83.2px;width:84px;height:13.1px;background:#2b3636;border-radius:2px 0 0 2px;"></div>
<div style="left:2px;top:99.30000000000001px;width:84px;height:13.1px;background:#2b3636;border-radius:2px 0 0 2px;"></div>
<div style="left:2px;top:115.4px;width:84px;height:13.1px;background:#2b3636;border-radius:2px 0 0 2px;"></div>
<div style="left:2px;top:131.5px;width:84px;height:13.1px;background:#2b3636;border-radius:2px 0 0 2px;"></div>
<div style="left:2px;top:147.60000000000002px;width:84px;height:13.1px;background:#2b3636;border-radius:2px 0 0 2px;"></div>
<div style="left:2px;top:163.70000000000002px;width:84px;height:13.1px;background:#2b3636;border-radius:2px 0 0 2px;"></div>
<div style="left:2px;top:179.8px;width:84px;height:13.1px;background:#2b3636;border-radius:2px 0 0 2px;"></div>
<div style="left:2px;top:195.9px;width:84px;height:13.1px;background:#2b3636;border-radius:2px 0 0 2px;"></div>
<div style="left:2px;top:212.0px;width:84px;height:13.1px;background:#2b3636;border-radius:2px 0 0 2px;"></div>
<div style="left:2px;top:228.10000000000002px;width:84px;height:13.1px;background:#2b3636;border-radius:2px 0 0 2px;"></div>
<div style="left:2px;top:244.20000000000002px;width:84px;height:13.1px;background:#2b3636;border-radius:2px 0 0 2px;"></div>
<div style="left:2px;top:260.3px;width:84px;height:13.1px;background:#2b3636;border-radius:2px 0 0 2px;"></div>
<div style="left:23px;top:285px;width:46px;height:1px;background:#56646a;"></div>
<div style="left:4.5px;top:291px;font:bold 11.5px/14px 'Liberation Serif',serif;color:#c8c8c8;white-space:nowrap;letter-spacing:.65px;">250:Reverb</div>
<div style="left:65px;top:292px;width:1px;height:12px;background:#7a8a90;"></div>
<div style="left:71px;top:293px;width:1px;height:9px;background:#889;"></div>
<div style="left:81px;top:291px;font:bold 11.5px/14px 'Liberation Serif',serif;color:#c8c8c8;white-space:nowrap;">.</div>
<div style="left:0px;top:322px;width:86px;height:1px;background:#374545;"></div>
<div style="left:80.5px;top:309px;width:10px;height:10px;background:none;border-radius:50%;border:1.500px solid #44504f;clip-path:inset(0 4.500px 0 0);"></div>
<div style="left:0px;top:338px;width:86px;height:1px;background:#374545;"></div>
<div style="left:80.5px;top:325px;width:10px;height:10px;background:none;border-radius:50%;border:1.500px solid #44504f;clip-path:inset(0 4.500px 0 0);"></div>
<div style="left:0px;top:354px;width:86px;height:1px;background:#374545;"></div>
<div style="left:80.5px;top:341px;width:10px;height:10px;background:none;border-radius:50%;border:1.500px solid #44504f;clip-path:inset(0 4.500px 0 0);"></div>
<div style="left:0px;top:370px;width:86px;height:1px;background:#374545;"></div>
<div style="left:80.5px;top:357px;width:10px;height:10px;background:none;border-radius:50%;border:1.500px solid #44504f;clip-path:inset(0 4.500px 0 0);"></div>
<div style="left:0px;top:386px;width:86px;height:1px;background:#374545;"></div>
<div style="left:80.5px;top:373px;width:10px;height:10px;background:none;border-radius:50%;border:1.500px solid #44504f;clip-path:inset(0 4.500px 0 0);"></div>
<div style="left:0px;top:402px;width:86px;height:1px;background:#374545;"></div>
<div style="left:80.5px;top:389px;width:10px;height:10px;background:none;border-radius:50%;border:1.500px solid #44504f;clip-path:inset(0 4.500px 0 0);"></div>
<div style="left:0px;top:418px;width:86px;height:1px;background:#374545;"></div>
<div style="left:80.5px;top:405px;width:10px;height:10px;background:none;border-radius:50%;border:1.500px solid #44504f;clip-path:inset(0 4.500px 0 0);"></div>
<div style="left:0px;top:434px;width:86px;height:1px;background:#374545;"></div>
<div style="left:80.5px;top:421px;width:10px;height:10px;background:none;border-radius:50%;border:1.500px solid #44504f;clip-path:inset(0 4.500px 0 0);"></div>
<div style="left:0px;top:450px;width:86px;height:1px;background:#374545;"></div>
<div style="left:80.5px;top:437px;width:10px;height:10px;background:none;border-radius:50%;border:1.500px solid #44504f;clip-path:inset(0 4.500px 0 0);"></div>
<div style="left:0px;top:466px;width:86px;height:1px;background:#374545;"></div>
<div style="left:80.5px;top:453px;width:10px;height:10px;background:none;border-radius:50%;border:1.500px solid #44504f;clip-path:inset(0 4.500px 0 0);"></div>
<div style="left:0px;top:482px;width:86px;height:1px;background:#374545;"></div>
<div style="left:80.5px;top:469px;width:10px;height:10px;background:none;border-radius:50%;border:1.500px solid #44504f;clip-path:inset(0 4.500px 0 0);"></div>
<div style="left:0px;top:498px;width:86px;height:1px;background:#374545;"></div>
<div style="left:80.5px;top:485px;width:10px;height:10px;background:none;border-radius:50%;border:1.500px solid #44504f;clip-path:inset(0 4.500px 0 0);"></div>
<div style="left:0px;top:514px;width:86px;height:1px;background:#374545;"></div>
<div style="left:80.5px;top:501px;width:10px;height:10px;background:none;border-radius:50%;border:1.500px solid #44504f;clip-path:inset(0 4.500px 0 0);"></div>
<div style="left:0px;top:521px;width:86px;height:5px;background:linear-gradient(#2a5a5a,#4a9494 60%,#2a5a5a);"></div>
<div style="left:0px;top:526px;width:86px;height:30px;background:#2b2b2b;"></div>
<div style="left:8px;top:532px;width:78px;height:17px;background:#3a3a3a;border-radius:4px 0 0 4px;border:1px solid #444;border-right:none;"></div>
<div style="left:13px;top:534px;font:bold 11.5px/13px 'Liberation Sans',sans-serif;color:#999;white-space:nowrap;letter-spacing:.5px;">FX</div>
<div style="left:76px;top:535px;width:3px;height:10px;background:none;border:1px solid #666;border-radius:1px;"></div>
<div style="left:1px;top:556px;width:85px;height:104px;background:linear-gradient(#5c9494,#3f8080 45%,#377878);border-radius:3px 0 0 8px;"></div>
<div style="left:38px;top:565px;width:19px;height:19px;background:radial-gradient(circle at 50% 40%,#3f6f6f,#2a5a5a);border-radius:50%;box-shadow:0 1px 1px rgba(0,0,0,.4);"></div>
<div style="left:44px;top:571px;width:8px;height:8px;background:radial-gradient(circle at 50% 30%,#d8d8d8,#9a9a9a);border-radius:50%;"></div>
<div style="left:43px;top:567px;width:3px;height:3px;background:#c8c8c8;border-radius:50%;"></div>
<div style="left:7px;top:587px;font:bold 12.5px/15px 'Liberation Serif',serif;color:#0f4a4a;white-space:nowrap;width:80px;text-align:center;">33%L</div>
<div style="left:7px;top:605px;width:79px;height:16px;background:#2c6666;border-radius:3px 0 0 3px;border:1px solid #4a8888;border-right:none;"></div>
<div style="left:10px;top:605px;font:bold 13px/16px 'Liberation Serif',serif;color:#f4f0e8;white-space:nowrap;">UR44 Inp..1</div>
<svg style="left:76px;top:610px" width="9" height="7"><path d="M0.500 0.500h8l-4 6z" fill="#5a9090"/></svg>
<div style="left:16px;top:624px;font:normal 8px/10px 'Liberation Sans',sans-serif;color:#164848;white-space:nowrap;letter-spacing:1.3px;">INPUT FX</div>
<div style="left:75px;top:627px;width:11px;height:4px;background:none;border:1px solid #2a6060;border-radius:2px;"></div>
<div style="left:6px;top:637px;width:48px;height:15px;background:linear-gradient(#2f7070,#286464);border:1px solid #1f5555;border-radius:3px;"></div>
<div style="left:10px;top:641px;font:normal 7.5px/9px 'Liberation Sans',sans-serif;color:#cfe8e8;white-space:nowrap;letter-spacing:1px;">IN</div>
<svg style="left:41px;top:641px" width="9" height="7"><path d="M0.500 0.500h8l-4 6z" fill="#5a9090"/></svg>
<div style="left:62px;top:641px;width:25px;height:25px;background:#2b2b2b;border-radius:50%;"></div>
<div style="left:67px;top:646px;width:15px;height:15px;background:none;border-radius:50%;border:3.500px solid #6a6a6a;"></div>
<div style="left:0px;top:660px;width:86px;height:336px;background:#2b2b2b;"></div>
<div style="left:15px;top:665px;font:bold 12.5px/15px 'Liberation Serif',serif;color:#8a8a8a;white-space:nowrap;">-7.40</div>
<svg style="left:68px;top:668px" width="14" height="14" viewBox="0 0 14 14"><path d="M1 4.500h3l4.500-3.500v12l-4.500-3.500h-3z" fill="#777"/><rect x="10" y="3.500" width="1.400" height="7" fill="#777"/></svg>
<div style="left:3px;top:688px;font:normal 9.5px/12px 'Liberation Sans',sans-serif;color:#7d7d7d;white-space:nowrap;width:30px;text-align:center;">-7.5</div>
<div style="left:3px;top:698px;font:normal 9.5px/12px 'Liberation Sans',sans-serif;color:#7d7d7d;white-space:nowrap;width:30px;text-align:center;">-0-</div>
<div style="left:3px;top:720px;font:normal 9.5px/12px 'Liberation Sans',sans-serif;color:#7d7d7d;white-space:nowrap;width:30px;text-align:center;">-6-</div>
<div style="left:3px;top:742px;font:normal 9.5px/12px 'Liberation Sans',sans-serif;color:#7d7d7d;white-space:nowrap;width:30px;text-align:center;">-12-</div>
<div style="left:3px;top:764px;font:normal 9.5px/12px 'Liberation Sans',sans-serif;color:#7d7d7d;white-space:nowrap;width:30px;text-align:center;">-18-</div>
<div style="left:3px;top:785px;font:normal 9.5px/12px 'Liberation Sans',sans-serif;color:#7d7d7d;white-space:nowrap;width:30px;text-align:center;">-24-</div>
<div style="left:3px;top:806px;font:normal 9.5px/12px 'Liberation Sans',sans-serif;color:#7d7d7d;white-space:nowrap;width:30px;text-align:center;">-30-</div>
<div style="left:3px;top:828px;font:normal 9.5px/12px 'Liberation Sans',sans-serif;color:#7d7d7d;white-space:nowrap;width:30px;text-align:center;">-36-</div>
<div style="left:3px;top:850px;font:normal 9.5px/12px 'Liberation Sans',sans-serif;color:#7d7d7d;white-space:nowrap;width:30px;text-align:center;">-42-</div>
<div style="left:3px;top:872px;font:normal 9.5px/12px 'Liberation Sans',sans-serif;color:#7d7d7d;white-space:nowrap;width:30px;text-align:center;">-48-</div>
<div style="left:3px;top:894px;font:normal 9.5px/12px 'Liberation Sans',sans-serif;color:#7d7d7d;white-space:nowrap;width:30px;text-align:center;">-54-</div>
<div style="left:3px;top:915px;font:normal 9.5px/12px 'Liberation Sans',sans-serif;color:#7d7d7d;white-space:nowrap;width:30px;text-align:center;">-60-</div>
<div style="left:46px;top:690px;width:1px;height:231px;background:#111;"></div>
<div style="left:38px;top:760px;width:17px;height:1px;background:#999;"></div>
<div style="left:36px;top:771px;width:22px;height:43px;background:linear-gradient(90deg,#2a2a2a,#555 30%,#555 70%,#2a2a2a);border-radius:4px;border:1px solid #111;box-shadow:0 2px 3px #000;"></div><div style="left:41px;top:779px;width:12px;height:27px;background:linear-gradient(#999,#bbb 50%,#888);border-radius:4px;"></div><div style="left:44px;top:783px;width:6px;height:1px;background:#555;"></div><div style="left:44px;top:786px;width:6px;height:1px;background:#555;"></div><div style="left:44px;top:789px;width:6px;height:1px;background:#555;"></div><div style="left:44px;top:792px;width:6px;height:1px;background:#555;"></div><div style="left:44px;top:795px;width:6px;height:1px;background:#555;"></div><div style="left:44px;top:798px;width:6px;height:1px;background:#555;"></div><div style="left:44px;top:801px;width:6px;height:1px;background:#555;"></div>
<div style="left:65px;top:688px;width:20px;height:19px;background:linear-gradient(#3e3e3e,#333);border:1px solid #1e1e1e;box-shadow:inset 0 1px 0 #505050;"></div><div style="left:65px;top:690px;font:bold 13px/15px 'Liberation Sans',sans-serif;color:#c8c8c8;white-space:nowrap;width:20px;text-align:center;">M</div>
<div style="left:65px;top:712px;width:20px;height:19px;background:linear-gradient(#3e3e3e,#333);border:1px solid #1e1e1e;box-shadow:inset 0 1px 0 #505050;"></div><div style="left:65px;top:714px;font:bold 13px/15px 'Liberation Sans',sans-serif;color:#c8c8c8;white-space:nowrap;width:20px;text-align:center;">S</div>
<div style="left:65px;top:739px;width:20px;height:19px;background:linear-gradient(#3e3e3e,#333);border:1px solid #1e1e1e;box-shadow:inset 0 1px 0 #505050;"></div><div style="left:65px;top:742px;font:bold 11px/13px 'Liberation Sans',sans-serif;color:#c8c8c8;white-space:nowrap;width:20px;text-align:center;letter-spacing:.5px;">IO</div>
<div style="left:66px;top:761px;width:5px;height:3px;background:#3fd03f;border-radius:1px;"></div>
<div style="left:73px;top:761px;width:5px;height:3px;background:#1e90ff;border-radius:1px;"></div>
<div style="left:80px;top:761px;width:5px;height:3px;background:#f0a020;border-radius:1px;"></div>
<div style="left:66px;top:878px;width:16px;height:16px;background:radial-gradient(circle at 50% 30%,#3c3c3c,#262626);border-radius:50%;box-shadow:0 1px 1px #111;"></div><svg style="left:66px;top:878px" width="16" height="16"><circle cx="8" cy="8" r="3.600" fill="none" stroke="#9a9a9a" stroke-width="1.200"/><path d="M4.500 12l7-8" stroke="#9a9a9a" stroke-width="1.200"/></svg>
<svg style="left:64px;top:898px" width="20" height="24" viewBox="0 0 20 24"><path d="M3 9l7-6l7 6" fill="none" stroke="#777" stroke-width="1.200"/><circle cx="3" cy="9" r="2" fill="#777"/><circle cx="10" cy="3" r="2" fill="#777"/><circle cx="17" cy="9" r="2" fill="#777"/><text x="10" y="22" font-family="Liberation Sans,sans-serif" font-weight="bold" font-size="9.500" fill="#777" text-anchor="middle">TR</text></svg>
<div style="left:5px;top:932px;font:bold 15px/18px 'Liberation Serif',serif;color:#fff;white-space:nowrap;width:81px;text-align:left;overflow:hidden;letter-spacing:.35px;">Riffendiu..2</div>
<div style="left:72px;top:941px;width:1px;height:6px;background:#2b2b2b;"></div>
<div style="left:1px;top:956px;width:85px;height:20px;background:#366a6a;"></div>
<div style="left:1px;top:973px;width:85px;height:1px;background:#5a9a9a;"></div>
<div style="left:1px;top:974px;width:85px;height:2px;background:#3f8080;"></div>
<div style="left:1px;top:957px;font:normal 16px/17px 'Liberation Serif',serif;color:#3a3a42;white-space:nowrap;width:89px;text-align:center;letter-spacing:.8px;">153</div>
<div style="left:0px;top:991px;width:86px;height:17px;background:#333;"></div>
<div style="left:3.0px;top:994px;width:11px;height:11px;background:#0c0c0c;border-radius:50%;"></div>
<svg style="left:0.5px;top:991.500px" width="16" height="16"><path d="M10 4.500v7l-5.500-3.500z" fill="#c8c8c8"/></svg>
<div style="left:72.0px;top:994px;width:11px;height:11px;background:#0c0c0c;border-radius:50%;"></div>
<svg style="left:69.5px;top:991.500px" width="16" height="16"><path d="M6 4.500v7l5.500-3.500z" fill="#c8c8c8"/></svg>
<div style="left:46px;top:994px;width:5px;height:11px;background:none;border:1px solid #666;border-radius:2.500px;"></div>
<div style="left:0px;top:1008px;width:86px;height:6px;background:#8c9694;"></div>
<div style="left:4px;top:1011px;width:78px;height:1px;background:#2b2b2b;"></div>
<div style="left:0px;top:1014px;width:1919px;height:3px;background:#2d2d2d;"></div>
<div style="left:1797px;top:51px;width:122px;height:966px;background:#2f2f2f;"></div>
<div style="left:1795px;top:51px;width:2px;height:966px;background:#2d2d2d;"></div>
<div style="left:1799px;top:52px;width:118px;height:14px;background:#3e3e3e;border-radius:3px;box-shadow:inset 0 1px 0 #555;"></div>
<div style="left:1799px;top:52px;font:bold 12px/14px 'Liberation Serif',serif;color:#e8e8e8;white-space:nowrap;width:116px;text-align:center;letter-spacing:.25px;">FabFilter Pro-Q 2</div>
<div style="left:1799px;top:68px;width:118px;height:14px;background:#2a2a2a;border-radius:3px;"></div>
<div style="left:1799px;top:68px;font:bold 12px/14px 'Liberation Serif',serif;color:#e09040;white-space:nowrap;width:116px;text-align:center;letter-spacing:.25px;">Ozone 9</div>
<div style="left:1799px;top:84px;width:118px;height:14px;background:#3e3e3e;border-radius:3px;box-shadow:inset 0 1px 0 #555;"></div>
<div style="left:1799px;top:84px;font:bold 12px/14px 'Liberation Serif',serif;color:#e8e8e8;white-space:nowrap;width:116px;text-align:center;letter-spacing:.25px;">FabFilter Pro-L 2</div>
<div style="left:1799px;top:100px;width:118px;height:14px;background:#3e3e3e;border-radius:3px;box-shadow:inset 0 1px 0 #555;"></div>
<div style="left:1799px;top:100px;font:bold 12px/14px 'Liberation Serif',serif;color:#e8e8e8;white-space:nowrap;width:116px;text-align:center;letter-spacing:.25px;">TR5 Metering</div>
<div style="left:1799px;top:116px;width:118px;height:14px;background:#323232;border-radius:3px;"></div>
<div style="left:1799px;top:132px;width:118px;height:14px;background:#323232;border-radius:3px;"></div>
<div style="left:1799px;top:148px;width:118px;height:14px;background:#323232;border-radius:3px;"></div>
<div style="left:1799px;top:164px;width:118px;height:14px;background:#323232;border-radius:3px;"></div>
<div style="left:1799px;top:180px;width:118px;height:14px;background:#323232;border-radius:3px;"></div>
<div style="left:1799px;top:196px;width:118px;height:14px;background:#323232;border-radius:3px;"></div>
<div style="left:1799px;top:212px;width:118px;height:14px;background:#323232;border-radius:3px;"></div>
<div style="left:1799px;top:228px;width:118px;height:14px;background:#323232;border-radius:3px;"></div>
<div style="left:1799px;top:244px;width:118px;height:14px;background:#323232;border-radius:3px;"></div>
<div style="left:1799px;top:260px;width:118px;height:14px;background:#323232;border-radius:3px;"></div>
<div style="left:1799px;top:276px;width:118px;height:14px;background:#323232;border-radius:3px;"></div>
<div style="left:1818px;top:291px;width:77px;height:1px;background:#4a4a4a;"></div>
<div style="left:1797px;top:297px;width:87px;height:14px;background:#4a4a4a;"></div>
<div style="left:1799.5px;top:297px;font:bold 11.5px/14px 'Liberation Serif',serif;color:#c8c8c8;white-space:nowrap;width:98.5px;text-align:left;overflow:hidden;letter-spacing:.38px;">UR44 Mix 1 L / UR</div>
<div style="left:1906.5px;top:299.5px;width:9.5px;height:9.5px;background:none;border-radius:50%;border:1.800px solid #404040;clip-path:inset(0 5px 0 0);border-color:#aaa;"></div>
<div style="left:1906.5px;top:315.5px;width:9.5px;height:9.5px;background:none;border-radius:50%;border:1.800px solid #404040;"></div>
<div style="left:1795px;top:328px;width:124px;height:1px;background:#363636;"></div>
<div style="left:1906.5px;top:331.5px;width:9.5px;height:9.5px;background:none;border-radius:50%;border:1.800px solid #404040;"></div>
<div style="left:1795px;top:344px;width:124px;height:1px;background:#363636;"></div>
<div style="left:1906.5px;top:347.5px;width:9.5px;height:9.5px;background:none;border-radius:50%;border:1.800px solid #404040;"></div>
<div style="left:1795px;top:360px;width:124px;height:1px;background:#363636;"></div>
<div style="left:1906.5px;top:363.5px;width:9.5px;height:9.5px;background:none;border-radius:50%;border:1.800px solid #404040;"></div>
<div style="left:1795px;top:376px;width:124px;height:1px;background:#363636;"></div>
<div style="left:1906.5px;top:379.5px;width:9.5px;height:9.5px;background:none;border-radius:50%;border:1.800px solid #404040;"></div>
<div style="left:1795px;top:392px;width:124px;height:1px;background:#363636;"></div>
<div style="left:1906.5px;top:395.5px;width:9.5px;height:9.5px;background:none;border-radius:50%;border:1.800px solid #404040;"></div>
<div style="left:1795px;top:408px;width:124px;height:1px;background:#363636;"></div>
<div style="left:1906.5px;top:411.5px;width:9.5px;height:9.5px;background:none;border-radius:50%;border:1.800px solid #404040;"></div>
<div style="left:1795px;top:424px;width:124px;height:1px;background:#363636;"></div>
<div style="left:1906.5px;top:427.5px;width:9.5px;height:9.5px;background:none;border-radius:50%;border:1.800px solid #404040;"></div>
<div style="left:1795px;top:440px;width:124px;height:1px;background:#363636;"></div>
<div style="left:1906.5px;top:443.5px;width:9.5px;height:9.5px;background:none;border-radius:50%;border:1.800px solid #404040;"></div>
<div style="left:1795px;top:456px;width:124px;height:1px;background:#363636;"></div>
<div style="left:1906.5px;top:459.5px;width:9.5px;height:9.5px;background:none;border-radius:50%;border:1.800px solid #404040;"></div>
<div style="left:1795px;top:472px;width:124px;height:1px;background:#363636;"></div>
<div style="left:1906.5px;top:475.5px;width:9.5px;height:9.5px;background:none;border-radius:50%;border:1.800px solid #404040;"></div>
<div style="left:1795px;top:488px;width:124px;height:1px;background:#363636;"></div>
<div style="left:1906.5px;top:491.5px;width:9.5px;height:9.5px;background:none;border-radius:50%;border:1.800px solid #404040;"></div>
<div style="left:1795px;top:504px;width:124px;height:1px;background:#363636;"></div>
<div style="left:1906.5px;top:507.5px;width:9.5px;height:9.5px;background:none;border-radius:50%;border:1.800px solid #404040;"></div>
<div style="left:1795px;top:520px;width:124px;height:1px;background:#363636;"></div>
<div style="left:1797px;top:530px;width:122px;height:82px;background:#333;"></div>
<div style="left:1804px;top:543px;width:110px;height:17px;background:#3a3a3a;border-radius:4px;border:1px solid #4a4a4a;"></div>
<div style="left:1809px;top:545px;font:bold 11.5px/13px 'Liberation Sans',sans-serif;color:#bbb;white-space:nowrap;letter-spacing:.5px;">FX</div>
<div style="left:1902px;top:546px;width:4px;height:11px;background:#30b040;border:1px solid #1a6a20;border-radius:2px;"></div>
<div style="left:1826px;top:570px;width:19px;height:19px;background:radial-gradient(circle at 50% 40%,#3a3a3a,#222);border-radius:50%;box-shadow:0 1px 1px #111;"></div>
<div style="left:1832px;top:577px;width:7px;height:7px;background:radial-gradient(circle at 50% 30%,#d8d8d8,#9a9a9a);border-radius:50%;"></div>
<div style="left:1834px;top:572px;width:3px;height:3px;background:#c8c8c8;border-radius:50%;"></div>
<svg style="left:1886px;top:574px" width="24" height="15"><circle cx="8" cy="7.500" r="6" fill="none" stroke="#aaa" stroke-width="1.300"/><circle cx="15" cy="7.500" r="6" fill="none" stroke="#aaa" stroke-width="1.300"/></svg>
<div style="left:1805px;top:592px;font:normal 12px/14px 'Liberation Serif',serif;color:#999;white-space:nowrap;width:60px;text-align:center;">center</div>
<div style="left:1797px;top:612px;width:122px;height:375px;background:#2a2a2a;"></div>
<div style="left:1800px;top:616px;font:bold 12.5px/15px 'Liberation Serif',serif;color:#666;white-space:nowrap;width:80px;text-align:center;">0.00dB</div>
<div style="left:1890px;top:616px;width:20px;height:19px;background:linear-gradient(#3e3e3e,#333);border:1px solid #1e1e1e;box-shadow:inset 0 1px 0 #505050;"></div><div style="left:1890px;top:618px;font:bold 13px/15px 'Liberation Sans',sans-serif;color:#c8c8c8;white-space:nowrap;width:20px;text-align:center;">M</div>
<div style="left:1890px;top:641px;width:20px;height:19px;background:linear-gradient(#3e3e3e,#333);border:1px solid #1e1e1e;box-shadow:inset 0 1px 0 #505050;"></div><div style="left:1890px;top:643px;font:bold 13px/15px 'Liberation Sans',sans-serif;color:#c8c8c8;white-space:nowrap;width:20px;text-align:center;">S</div>
<div style="left:1890px;top:668px;width:20px;height:19px;background:linear-gradient(#3e3e3e,#333);border:1px solid #1e1e1e;box-shadow:inset 0 1px 0 #505050;"></div>
<div style="left:1890px;top:671px;font:bold 11px/13px 'Liberation Sans',sans-serif;color:#c8c8c8;white-space:nowrap;width:20px;text-align:center;letter-spacing:.5px;">IO</div>
<div style="left:1891px;top:692px;width:5px;height:3px;background:#3fd03f;border-radius:1px;"></div>
<div style="left:1898px;top:692px;width:5px;height:3px;background:#1e90ff;border-radius:1px;"></div>
<div style="left:1905px;top:692px;width:5px;height:3px;background:#222;border-radius:1px;"></div>
<div style="left:1803px;top:642px;font:normal 9.5px/12px 'Liberation Sans',sans-serif;color:#e8e8e8;white-space:nowrap;width:20px;text-align:center;">-1.8</div>
<div style="left:1833px;top:642px;font:normal 9.5px/12px 'Liberation Sans',sans-serif;color:#e8e8e8;white-space:nowrap;width:20px;text-align:center;">-0.3</div>
<div style="left:1799px;top:669.0px;font:normal 9.5px/12px 'Liberation Sans',sans-serif;color:#7d7d7d;white-space:nowrap;">12</div>
<div style="left:1838px;top:669.0px;font:normal 9.5px/12px 'Liberation Sans',sans-serif;color:#7d7d7d;white-space:nowrap;width:20px;text-align:right;">12</div>
<div style="left:1818px;top:658.0px;font:normal 9.5px/12px 'Liberation Sans',sans-serif;color:#7d7d7d;white-space:nowrap;width:22px;text-align:center;">-0-</div>
<div style="left:1799px;top:699.5px;font:normal 9.5px/12px 'Liberation Sans',sans-serif;color:#7d7d7d;white-space:nowrap;">6</div>
<div style="left:1838px;top:699.5px;font:normal 9.5px/12px 'Liberation Sans',sans-serif;color:#7d7d7d;white-space:nowrap;width:20px;text-align:right;">6</div>
<div style="left:1818px;top:688.5px;font:normal 9.5px/12px 'Liberation Sans',sans-serif;color:#7d7d7d;white-space:nowrap;width:22px;text-align:center;">-6-</div>
<div style="left:1799px;top:730.0px;font:normal 9.5px/12px 'Liberation Sans',sans-serif;color:#7d7d7d;white-space:nowrap;">0-</div>
<div style="left:1838px;top:730.0px;font:normal 9.5px/12px 'Liberation Sans',sans-serif;color:#7d7d7d;white-space:nowrap;width:20px;text-align:right;">-0</div>
<div style="left:1818px;top:719.0px;font:normal 9.5px/12px 'Liberation Sans',sans-serif;color:#7d7d7d;white-space:nowrap;width:22px;text-align:center;">-12-</div>
<div style="left:1799px;top:760.5px;font:normal 9.5px/12px 'Liberation Sans',sans-serif;color:#7d7d7d;white-space:nowrap;">6-</div>
<div style="left:1838px;top:760.5px;font:normal 9.5px/12px 'Liberation Sans',sans-serif;color:#7d7d7d;white-space:nowrap;width:20px;text-align:right;">-6</div>
<div style="left:1818px;top:749.5px;font:normal 9.5px/12px 'Liberation Sans',sans-serif;color:#7d7d7d;white-space:nowrap;width:22px;text-align:center;">-18-</div>
<div style="left:1799px;top:791.0px;font:normal 9.5px/12px 'Liberation Sans',sans-serif;color:#7d7d7d;white-space:nowrap;">12-</div>
<div style="left:1838px;top:791.0px;font:normal 9.5px/12px 'Liberation Sans',sans-serif;color:#7d7d7d;white-space:nowrap;width:20px;text-align:right;">-12</div>
<div style="left:1818px;top:780.0px;font:normal 9.5px/12px 'Liberation Sans',sans-serif;color:#7d7d7d;white-space:nowrap;width:22px;text-align:center;">-24-</div>
<div style="left:1799px;top:821.5px;font:normal 9.5px/12px 'Liberation Sans',sans-serif;color:#7d7d7d;white-space:nowrap;">18-</div>
<div style="left:1838px;top:821.5px;font:normal 9.5px/12px 'Liberation Sans',sans-serif;color:#7d7d7d;white-space:nowrap;width:20px;text-align:right;">-18</div>
<div style="left:1818px;top:810.5px;font:normal 9.5px/12px 'Liberation Sans',sans-serif;color:#7d7d7d;white-space:nowrap;width:22px;text-align:center;">-30-</div>
<div style="left:1799px;top:852.0px;font:normal 9.5px/12px 'Liberation Sans',sans-serif;color:#7d7d7d;white-space:nowrap;">24-</div>
<div style="left:1838px;top:852.0px;font:normal 9.5px/12px 'Liberation Sans',sans-serif;color:#7d7d7d;white-space:nowrap;width:20px;text-align:right;">-24</div>
<div style="left:1818px;top:841.0px;font:normal 9.5px/12px 'Liberation Sans',sans-serif;color:#7d7d7d;white-space:nowrap;width:22px;text-align:center;">-36-</div>
<div style="left:1799px;top:882.5px;font:normal 9.5px/12px 'Liberation Sans',sans-serif;color:#7d7d7d;white-space:nowrap;">30-</div>
<div style="left:1838px;top:882.5px;font:normal 9.5px/12px 'Liberation Sans',sans-serif;color:#7d7d7d;white-space:nowrap;width:20px;text-align:right;">-30</div>
<div style="left:1818px;top:871.5px;font:normal 9.5px/12px 'Liberation Sans',sans-serif;color:#7d7d7d;white-space:nowrap;width:22px;text-align:center;">-42-</div>
<div style="left:1799px;top:913.0px;font:normal 9.5px/12px 'Liberation Sans',sans-serif;color:#7d7d7d;white-space:nowrap;">36-</div>
<div style="left:1838px;top:913.0px;font:normal 9.5px/12px 'Liberation Sans',sans-serif;color:#7d7d7d;white-space:nowrap;width:20px;text-align:right;">-36</div>
<div style="left:1818px;top:902.0px;font:normal 9.5px/12px 'Liberation Sans',sans-serif;color:#7d7d7d;white-space:nowrap;width:22px;text-align:center;">-48-</div>
<div style="left:1799px;top:943.5px;font:normal 9.5px/12px 'Liberation Sans',sans-serif;color:#7d7d7d;white-space:nowrap;">42-</div>
<div style="left:1838px;top:943.5px;font:normal 9.5px/12px 'Liberation Sans',sans-serif;color:#7d7d7d;white-space:nowrap;width:20px;text-align:right;">-42</div>
<div style="left:1818px;top:932.5px;font:normal 9.5px/12px 'Liberation Sans',sans-serif;color:#7d7d7d;white-space:nowrap;width:22px;text-align:center;">-54-</div>
<div style="left:1874px;top:646px;width:1px;height:325px;background:#111;"></div>
<div style="left:1864px;top:719px;width:22px;height:43px;background:linear-gradient(90deg,#2a2a2a,#555 30%,#555 70%,#2a2a2a);border-radius:4px;border:1px solid #111;box-shadow:0 2px 3px #000;"></div><div style="left:1869px;top:727px;width:12px;height:27px;background:linear-gradient(#999,#bbb 50%,#888);border-radius:4px;"></div><div style="left:1872px;top:731px;width:6px;height:1px;background:#555;"></div><div style="left:1872px;top:734px;width:6px;height:1px;background:#555;"></div><div style="left:1872px;top:737px;width:6px;height:1px;background:#555;"></div><div style="left:1872px;top:740px;width:6px;height:1px;background:#555;"></div><div style="left:1872px;top:743px;width:6px;height:1px;background:#555;"></div><div style="left:1872px;top:746px;width:6px;height:1px;background:#555;"></div><div style="left:1872px;top:749px;width:6px;height:1px;background:#555;"></div>
<div style="left:1803px;top:967px;font:normal 9.5px/12px 'Liberation Sans',sans-serif;color:#e8e8e8;white-space:nowrap;width:20px;text-align:center;">+0.3</div>
<div style="left:1833px;top:967px;font:normal 9.5px/12px 'Liberation Sans',sans-serif;color:#e8e8e8;white-space:nowrap;width:20px;text-align:center;">+0.6</div>
<svg style="left:1890px;top:946px" width="20" height="24" viewBox="0 0 20 24"><path d="M3 9l7-6l7 6" fill="none" stroke="#777" stroke-width="1.200"/><circle cx="3" cy="9" r="2" fill="#777"/><circle cx="10" cy="3" r="2" fill="#777"/><circle cx="17" cy="9" r="2" fill="#777"/><text x="10" y="22" font-family="Liberation Sans,sans-serif" font-weight="bold" font-size="9.500" fill="#777" text-anchor="middle">TR</text></svg>
<div style="left:1797px;top:987px;width:122px;height:22px;background:#333;"></div>
<div style="left:1798px;top:990px;width:15px;height:15px;background:none;border-radius:50%;border:1px solid #888;"></div>
<div style="left:1798px;top:991px;font:bold 11px/13px 'Liberation Serif',serif;color:#888;white-space:nowrap;width:15px;text-align:center;">i</div>
<div style="left:1818px;top:989px;font:bold 14px/17px 'Liberation Serif',serif;color:#aaa;white-space:nowrap;width:100px;text-align:center;">MASTER</div>
<div style="left:1797px;top:1008px;width:122px;height:1px;background:#888;"></div>
<div style="left:1797px;top:1010px;width:122px;height:2px;background:#3f6f6f;"></div>
</body></html>
